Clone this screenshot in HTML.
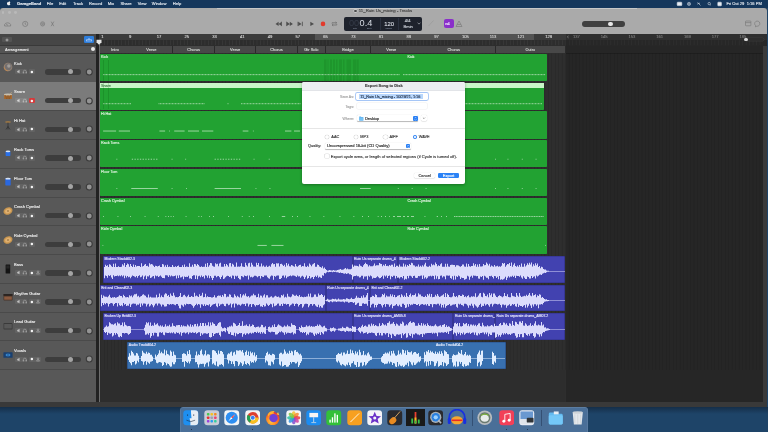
<!DOCTYPE html><html><head><meta charset="utf-8"><style>
*{margin:0;padding:0;box-sizing:border-box}
html,body{width:768px;height:432px;overflow:hidden;background:#1c3f66;font-family:"Liberation Sans", sans-serif}
body{position:relative}
.abs{position:absolute}
.t{position:absolute;white-space:nowrap;line-height:1;-webkit-text-stroke-width:0.12px}
</style></head><body><div id="root" style="position:absolute;left:0;top:0;width:768px;height:432px;overflow:hidden;will-change:transform">

<div class="abs" style="left:0.00px;top:0.00px;width:768.00px;height:432.00px;background:#1e4468;"></div>
<div class="abs" style="left:0.00px;top:0.00px;width:768.00px;height:7.90px;background:#15375c;"></div>
<div class="t" style="left:17.00px;top:2.20px;font-size:4.1px;color:#e6ebf2;font-weight:bold;">GarageBand</div>
<div class="t" style="left:46.80px;top:2.20px;font-size:4.1px;color:#e6ebf2;">File</div>
<div class="t" style="left:59.20px;top:2.20px;font-size:4.1px;color:#e6ebf2;">Edit</div>
<div class="t" style="left:73.00px;top:2.20px;font-size:4.1px;color:#e6ebf2;">Track</div>
<div class="t" style="left:89.00px;top:2.20px;font-size:4.1px;color:#e6ebf2;">Record</div>
<div class="t" style="left:107.70px;top:2.20px;font-size:4.1px;color:#e6ebf2;">Mix</div>
<div class="t" style="left:120.60px;top:2.20px;font-size:4.1px;color:#e6ebf2;">Share</div>
<div class="t" style="left:137.70px;top:2.20px;font-size:4.1px;color:#e6ebf2;">View</div>
<div class="t" style="left:151.80px;top:2.20px;font-size:4.1px;color:#e6ebf2;">Window</div>
<div class="t" style="left:172.80px;top:2.20px;font-size:4.1px;color:#e6ebf2;">Help</div>
<svg class="abs" style="left:7.2px;top:1.3px" width="3.6" height="4.6" viewBox="0 0 10 12.5"><path d="M8.2 6.4c0-1.5 1.2-2.2 1.3-2.3-.7-1-1.8-1.2-2.2-1.2-.9-.1-1.8.5-2.3.5-.5 0-1.2-.5-2-.5C1.9 2.9.9 3.6.4 4.6c-1 1.8-.3 4.4.7 5.8.5.7 1 1.5 1.8 1.5.7 0 1-.5 1.9-.5s1.1.5 1.9.5c.8 0 1.3-.7 1.8-1.4.6-.8.8-1.6.8-1.6s-1.5-.6-1.5-2.5zM6.7 1.9C7.1 1.4 7.4.7 7.3 0c-.6 0-1.4.4-1.8.9-.4.4-.7 1.1-.6 1.8.7.1 1.4-.3 1.8-.8z" fill="#f0f0f0"/></svg>
<div class="t" style="left:726.40px;top:2.20px;font-size:4.1px;color:#e6ebf2;">Fri Oct 29&nbsp;&nbsp;1:16 PM</div>
<svg class="abs" style="left:674px;top:0" width="50" height="8" viewBox="0 0 50 8" fill="none" stroke="#e6ebf2" stroke-width="0.55"><rect x="3.2" y="2.2" width="4.6" height="3.4" rx="0.6" fill="#e6ebf2"/><circle cx="15" cy="3.9" r="1.6"/><circle cx="15" cy="3.9" r="0.5" fill="#e6ebf2"/><path d="M23.5 2.5 L26.5 5.5 M23.2 4.2 Q24.5 3 26 3.2"/><circle cx="35.2" cy="3.6" r="1.2"/><path d="M36.1 4.5 L37 5.4"/><rect x="43.8" y="2.2" width="3.6" height="3.6" rx="0.5" fill="#e6ebf2"/></svg>
<div class="abs" style="left:0.00px;top:7.90px;width:767.00px;height:399.50px;background:#2b2b2b;border-radius:3px 3px 0 0"></div>
<div class="abs" style="left:0.00px;top:7.90px;width:767.00px;height:26.20px;background:#aaaaaa;border-radius:3px 3px 0 0"></div>
<div class="abs" style="left:217.00px;top:7.50px;width:420.00px;height:0.60px;background:rgba(220,220,220,0.6);"></div>
<div class="abs" style="left:0.00px;top:33.80px;width:767.00px;height:0.40px;background:#8c8c8c;"></div>
<div class="abs" style="left:1.70px;top:11.00px;width:2.80px;height:2.80px;background:#b9b9b9;border-radius:50%"></div>
<div class="abs" style="left:7.80px;top:11.00px;width:2.80px;height:2.80px;background:#b9b9b9;border-radius:50%"></div>
<div class="abs" style="left:13.80px;top:11.00px;width:2.80px;height:2.80px;background:#b9b9b9;border-radius:50%"></div>
<svg class="abs" style="left:0;top:18px" width="60" height="12" viewBox="0 0 60 12" fill="none" stroke="#6e6e6e" stroke-width="0.6"><path d="M4.6 8 V6.5 A3.2 2.6 0 0 1 10.6 6.5 V8 Z"/><path d="M6.2 6.3 L8 7.3"/><circle cx="25.2" cy="5.9" r="2.6"/><path d="M25.2 4.4 V6.1 L26.3 6.8"/><circle cx="42.6" cy="5.9" r="2.1"/><circle cx="42.6" cy="5.9" r="0.9"/><path d="M51.2 3.6 L53.8 8.2 M53.8 3.6 L51.2 8.2"/></svg>
<div class="abs" style="left:354.00px;top:9.60px;width:2.60px;height:2.60px;background:#4a4a4a;border-radius:50%;box-shadow:0 0 0 0.4px #e8e8e8"></div>
<div class="t" style="left:358.80px;top:9.40px;font-size:4.3px;color:#404040;">11_Ruin Us_mixing - Tracks</div>
<svg class="abs" style="left:270px;top:18px" width="75" height="12" viewBox="0 0 75 12"><g fill="#4d4d4d"><path d="M5.5 5.9 L8.6 3.7 V8.1Z M8.6 5.9 L11.7 3.7 V8.1Z"/><rect x="11.3" y="3.7" width="0.6" height="4.4"/><path d="M16.7 3.7 L19.8 5.9 L16.7 8.1Z M19.8 3.7 L22.9 5.9 L19.8 8.1Z"/><rect x="16.4" y="3.7" width="0.6" height="4.4"/><path d="M28.2 3.7 L31.6 5.9 L28.2 8.1Z"/><rect x="31.9" y="3.7" width="0.8" height="4.4"/><rect x="27.6" y="3.7" width="0.6" height="4.4"/><path d="M40.3 3.8 L44 5.9 L40.3 8Z"/></g><circle cx="53" cy="5.9" r="2.3" fill="#e23a2c"/><path d="M62 5.5 V4.8 H66.6 M65.6 3.9 L66.6 4.8 L65.6 5.6 M66.8 6.3 V7 H62.2 M63.2 7.9 L62.2 7 L63.2 6.2" stroke="#5a5a5a" stroke-width="0.6" fill="none"/></svg>
<div class="abs" style="left:343.60px;top:16.60px;width:78.80px;height:14.30px;background:#1e222c;border-radius:2px"></div>
<div class="t" style="left:349.00px;top:18.74px;font-size:9.2px;color:#353b48;-webkit-text-stroke-width:0">00</div>
<div class="t" style="left:359.60px;top:18.74px;font-size:9.2px;color:#d8dce4;-webkit-text-stroke-width:0">0.4</div>
<div class="t" style="left:353.20px;top:28.10px;font-size:1.8px;color:#6a7282;">BAR</div>
<div class="t" style="left:367.00px;top:28.10px;font-size:1.8px;color:#6a7282;">BEAT</div>
<div class="t" style="left:384.20px;top:21.62px;font-size:5.9px;color:#d8dce4;">120</div>
<div class="t" style="left:385.60px;top:28.10px;font-size:1.8px;color:#6a7282;">TEMPO</div>
<div class="t" style="left:404.80px;top:18.90px;font-size:4.1px;color:#cfd4dc;">4/4</div>
<div class="t" style="left:403.50px;top:24.90px;font-size:4.1px;color:#cfd4dc;">Bmin</div>
<div class="abs" style="left:380.00px;top:18.00px;width:0.40px;height:11.50px;background:#2c3240;"></div>
<div class="abs" style="left:398.30px;top:18.00px;width:0.40px;height:11.50px;background:#2c3240;"></div>
<svg class="abs" style="left:417px;top:21.5px" width="4" height="3"><path d="M0.6 0.8 L2 2.1 L3.4 0.8" stroke="#c8ccd4" stroke-width="0.6" fill="none"/></svg>
<svg class="abs" style="left:427px;top:18px" width="8" height="10"><path d="M1.5 8 L6.5 2.5" stroke="#9a9a9a" stroke-width="0.8"/></svg>
<div class="abs" style="left:443.80px;top:19.40px;width:9.80px;height:8.40px;background:#8a2fca;border-radius:2px"></div>
<div class="t" style="left:444.90px;top:22.00px;font-size:4.0px;color:#f0e4ff;letter-spacing:-0.2px">&#8734;4</div>
<svg class="abs" style="left:455px;top:20px" width="8" height="8" fill="none" stroke="#707070" stroke-width="0.55"><path d="M4 1 L7 6.5 H1 Z"/><path d="M2.2 4.5 H5.8"/></svg>
<div class="abs" style="left:582.40px;top:21.00px;width:42.20px;height:5.80px;background:#404040;border-radius:2.9px"></div>
<div class="abs" style="left:608.40px;top:21.60px;width:4.60px;height:4.60px;background:#e8e8e8;border-radius:50%"></div>
<svg class="abs" style="left:744px;top:19px" width="20" height="10" fill="none" stroke="#707070" stroke-width="0.55"><rect x="1.5" y="2" width="5.4" height="4.8" rx="0.6"/><path d="M1.5 3.6 H6.9"/><path d="M11.8 6.8 A2.6 2.6 0 1 1 12.8 7.2 L11.4 7.9 Z"/></svg>
<div class="abs" style="left:0.00px;top:34.00px;width:96.40px;height:10.90px;background:#464646;"></div>
<div class="abs" style="left:2.20px;top:36.90px;width:9.50px;height:5.20px;background:#545454;border-radius:1px"></div>
<svg class="abs" style="left:4px;top:37.5px" width="6" height="4"><path d="M3 0.5 V3.5 M1.5 2 H4.5" stroke="#d8d8d8" stroke-width="0.6"/></svg>
<div class="abs" style="left:84.20px;top:36.40px;width:9.40px;height:6.30px;background:#2f7fdc;border-radius:1.2px"></div>
<svg class="abs" style="left:85px;top:37px" width="8" height="5" fill="none" stroke="#e8f0ff" stroke-width="0.45"><path d="M1 4 H7 M1.5 4 V2.6 H6.5 V4 M3.3 2.6 L4 1.2 L4.7 2.6"/></svg>
<div class="abs" style="left:0.00px;top:44.80px;width:96.40px;height:1.00px;background:#393939;"></div>
<div class="abs" style="left:0.00px;top:45.80px;width:96.40px;height:7.00px;background:#545454;"></div>
<div class="t" style="left:5.10px;top:47.60px;font-size:4.1px;color:#ececec;">Arrangement</div>
<div class="abs" style="left:90.90px;top:47.30px;width:4.00px;height:4.00px;background:#e8e8e8;border-radius:50%"></div>
<div class="abs" style="left:0.00px;top:52.80px;width:96.40px;height:0.70px;background:#3c3c3c;"></div>
<div class="abs" style="left:0.00px;top:53.50px;width:96.40px;height:348.70px;background:#585858;"></div>
<div class="abs" style="left:0.00px;top:81.65px;width:96.40px;height:0.60px;background:#4a4a4a;"></div>
<div class="t" style="left:14.00px;top:61.60px;font-size:4.1px;color:#efefef;">Kick</div>
<svg class="abs" style="left:2.8px;top:62.30px" width="10" height="10" viewBox="0 0 10 10"><circle cx="5" cy="5" r="4.3" fill="#9a8470"/><circle cx="5.3" cy="4.7" r="3.4" fill="#747070"/><circle cx="5.8" cy="4" r="1.7" fill="#a09c98"/><path d="M1.2 5.5 A3.8 3.8 0 0 0 4.5 8.8" stroke="#d08840" stroke-width="0.7" fill="none"/></svg>
<div class="abs" style="left:14.70px;top:69.20px;width:12.20px;height:5.20px;background:#626262;border-radius:1px"></div>
<div class="abs" style="left:28.50px;top:69.20px;width:6.80px;height:5.20px;background:#626262;border-radius:1px"></div>
<svg class="abs" style="left:14.7px;top:69.20px" width="13" height="5.2" viewBox="0 0 13 5.2" fill="none" stroke="#c4c4c4" stroke-width="0.4"><path d="M2.4 2.0 H3.1 L4.3 1.1 V4.1 L3.1 3.2 H2.4 Z" fill="#c4c4c4"/><path d="M8.3 3.5 V2.7 A1.5 1.5 0 0 1 11.3 2.7 V3.5 M8.1 3.1 H8.7 V4.2 H8.1Z M10.9 3.1 H11.5 V4.2 H10.9Z"/></svg>
<svg class="abs" style="left:28px;top:68.80px" width="8" height="6"><circle cx="3.85" cy="3" r="1.25" fill="#f4f4f4"/></svg>
<div class="abs" style="left:44.70px;top:69.05px;width:36.60px;height:5.50px;background:#3d3d3d;border-radius:2.75px"></div>
<div class="abs" style="left:68.20px;top:69.25px;width:5.10px;height:5.10px;background:#a4a4a4;border-radius:50%"></div>
<svg class="abs" style="left:85px;top:67.80px" width="8.5" height="8"><circle cx="4.25" cy="4" r="3.55" fill="#3c3c3c"/><circle cx="4.25" cy="4" r="2.45" fill="#939393"/></svg>
<div class="abs" style="left:0.00px;top:82.25px;width:96.40px;height:28.75px;background:#7b7b7b;"></div>
<div class="abs" style="left:0.00px;top:110.40px;width:96.40px;height:0.60px;background:#4a4a4a;"></div>
<div class="t" style="left:14.00px;top:90.35px;font-size:4.1px;color:#efefef;">Snare</div>
<svg class="abs" style="left:2.8px;top:91.05px" width="10" height="10" viewBox="0 0 10 10"><rect x="1" y="3.6" width="8" height="4.4" rx="0.6" fill="#a86a30"/><ellipse cx="5" cy="3.6" rx="4" ry="1" fill="#c8c0b0"/><path d="M2.5 4 L3.5 8 M5 4 V8 M7.5 4 L6.5 8" stroke="#6a4020" stroke-width="0.45"/><path d="M6.8 3 L9 1.2" stroke="#d8b880" stroke-width="0.45"/></svg>
<div class="abs" style="left:14.70px;top:97.95px;width:12.20px;height:5.20px;background:#858585;border-radius:1px"></div>
<div class="abs" style="left:28.50px;top:97.95px;width:6.80px;height:5.20px;background:#858585;border-radius:1px"></div>
<svg class="abs" style="left:14.7px;top:97.95px" width="13" height="5.2" viewBox="0 0 13 5.2" fill="none" stroke="#d8d8d8" stroke-width="0.4"><path d="M2.4 2.0 H3.1 L4.3 1.1 V4.1 L3.1 3.2 H2.4 Z" fill="#d8d8d8"/><path d="M8.3 3.5 V2.7 A1.5 1.5 0 0 1 11.3 2.7 V3.5 M8.1 3.1 H8.7 V4.2 H8.1Z M10.9 3.1 H11.5 V4.2 H10.9Z"/></svg>
<div class="abs" style="left:28.50px;top:97.95px;width:6.80px;height:5.20px;background:#d5393a;border-radius:1px"></div>
<svg class="abs" style="left:28px;top:97.55px" width="8" height="6"><circle cx="3.85" cy="3" r="1.25" fill="#f4f4f4"/></svg>
<div class="abs" style="left:44.70px;top:97.80px;width:36.60px;height:5.50px;background:#3d3d3d;border-radius:2.75px"></div>
<div class="abs" style="left:68.20px;top:98.00px;width:5.10px;height:5.10px;background:#a4a4a4;border-radius:50%"></div>
<svg class="abs" style="left:85px;top:96.55px" width="8.5" height="8"><circle cx="4.25" cy="4" r="3.55" fill="#3c3c3c"/><circle cx="4.25" cy="4" r="2.45" fill="#939393"/></svg>
<div class="abs" style="left:0.00px;top:139.15px;width:96.40px;height:0.60px;background:#4a4a4a;"></div>
<div class="t" style="left:14.00px;top:119.10px;font-size:4.1px;color:#efefef;">Hi Hat</div>
<svg class="abs" style="left:2.8px;top:119.80px" width="10" height="10" viewBox="0 0 10 10"><ellipse cx="5" cy="2" rx="3" ry="0.8" fill="#b08040"/><path d="M5 2.5 V9.5 M3 9.5 L5 6.5 L7 9.5" stroke="#2a2a2a" stroke-width="0.6" fill="none"/></svg>
<div class="abs" style="left:14.70px;top:126.70px;width:12.20px;height:5.20px;background:#626262;border-radius:1px"></div>
<div class="abs" style="left:28.50px;top:126.70px;width:6.80px;height:5.20px;background:#626262;border-radius:1px"></div>
<svg class="abs" style="left:14.7px;top:126.70px" width="13" height="5.2" viewBox="0 0 13 5.2" fill="none" stroke="#c4c4c4" stroke-width="0.4"><path d="M2.4 2.0 H3.1 L4.3 1.1 V4.1 L3.1 3.2 H2.4 Z" fill="#c4c4c4"/><path d="M8.3 3.5 V2.7 A1.5 1.5 0 0 1 11.3 2.7 V3.5 M8.1 3.1 H8.7 V4.2 H8.1Z M10.9 3.1 H11.5 V4.2 H10.9Z"/></svg>
<svg class="abs" style="left:28px;top:126.30px" width="8" height="6"><circle cx="3.85" cy="3" r="1.25" fill="#f4f4f4"/></svg>
<div class="abs" style="left:44.70px;top:126.55px;width:36.60px;height:5.50px;background:#3d3d3d;border-radius:2.75px"></div>
<div class="abs" style="left:68.20px;top:126.75px;width:5.10px;height:5.10px;background:#a4a4a4;border-radius:50%"></div>
<svg class="abs" style="left:85px;top:125.30px" width="8.5" height="8"><circle cx="4.25" cy="4" r="3.55" fill="#3c3c3c"/><circle cx="4.25" cy="4" r="2.45" fill="#939393"/></svg>
<div class="abs" style="left:0.00px;top:167.90px;width:96.40px;height:0.60px;background:#4a4a4a;"></div>
<div class="t" style="left:14.00px;top:147.85px;font-size:4.1px;color:#efefef;">Rack Toms</div>
<svg class="abs" style="left:2.8px;top:148.55px" width="10" height="10" viewBox="0 0 10 10"><rect x="2.6" y="2.3" width="4.8" height="4.6" rx="0.6" fill="#2a70e8"/><ellipse cx="5" cy="2.4" rx="2.4" ry="0.8" fill="#d8e4f4"/></svg>
<div class="abs" style="left:14.70px;top:155.45px;width:12.20px;height:5.20px;background:#626262;border-radius:1px"></div>
<div class="abs" style="left:28.50px;top:155.45px;width:6.80px;height:5.20px;background:#626262;border-radius:1px"></div>
<svg class="abs" style="left:14.7px;top:155.45px" width="13" height="5.2" viewBox="0 0 13 5.2" fill="none" stroke="#c4c4c4" stroke-width="0.4"><path d="M2.4 2.0 H3.1 L4.3 1.1 V4.1 L3.1 3.2 H2.4 Z" fill="#c4c4c4"/><path d="M8.3 3.5 V2.7 A1.5 1.5 0 0 1 11.3 2.7 V3.5 M8.1 3.1 H8.7 V4.2 H8.1Z M10.9 3.1 H11.5 V4.2 H10.9Z"/></svg>
<svg class="abs" style="left:28px;top:155.05px" width="8" height="6"><circle cx="3.85" cy="3" r="1.25" fill="#f4f4f4"/></svg>
<div class="abs" style="left:44.70px;top:155.30px;width:36.60px;height:5.50px;background:#3d3d3d;border-radius:2.75px"></div>
<div class="abs" style="left:68.20px;top:155.50px;width:5.10px;height:5.10px;background:#a4a4a4;border-radius:50%"></div>
<svg class="abs" style="left:85px;top:154.05px" width="8.5" height="8"><circle cx="4.25" cy="4" r="3.55" fill="#3c3c3c"/><circle cx="4.25" cy="4" r="2.45" fill="#939393"/></svg>
<div class="abs" style="left:0.00px;top:196.65px;width:96.40px;height:0.60px;background:#4a4a4a;"></div>
<div class="t" style="left:14.00px;top:176.60px;font-size:4.1px;color:#efefef;">Floor Tom</div>
<svg class="abs" style="left:2.8px;top:177.30px" width="10" height="10" viewBox="0 0 10 10"><rect x="2.3" y="1.6" width="5.4" height="6.8" rx="0.6" fill="#2a68e0"/><ellipse cx="5" cy="1.7" rx="2.7" ry="0.9" fill="#d8e4f4"/></svg>
<div class="abs" style="left:14.70px;top:184.20px;width:12.20px;height:5.20px;background:#626262;border-radius:1px"></div>
<div class="abs" style="left:28.50px;top:184.20px;width:6.80px;height:5.20px;background:#626262;border-radius:1px"></div>
<svg class="abs" style="left:14.7px;top:184.20px" width="13" height="5.2" viewBox="0 0 13 5.2" fill="none" stroke="#c4c4c4" stroke-width="0.4"><path d="M2.4 2.0 H3.1 L4.3 1.1 V4.1 L3.1 3.2 H2.4 Z" fill="#c4c4c4"/><path d="M8.3 3.5 V2.7 A1.5 1.5 0 0 1 11.3 2.7 V3.5 M8.1 3.1 H8.7 V4.2 H8.1Z M10.9 3.1 H11.5 V4.2 H10.9Z"/></svg>
<svg class="abs" style="left:28px;top:183.80px" width="8" height="6"><circle cx="3.85" cy="3" r="1.25" fill="#f4f4f4"/></svg>
<div class="abs" style="left:44.70px;top:184.05px;width:36.60px;height:5.50px;background:#3d3d3d;border-radius:2.75px"></div>
<div class="abs" style="left:68.20px;top:184.25px;width:5.10px;height:5.10px;background:#a4a4a4;border-radius:50%"></div>
<svg class="abs" style="left:85px;top:182.80px" width="8.5" height="8"><circle cx="4.25" cy="4" r="3.55" fill="#3c3c3c"/><circle cx="4.25" cy="4" r="2.45" fill="#939393"/></svg>
<div class="abs" style="left:0.00px;top:225.40px;width:96.40px;height:0.60px;background:#4a4a4a;"></div>
<div class="t" style="left:14.00px;top:205.35px;font-size:4.1px;color:#efefef;">Crash Cymbal</div>
<svg class="abs" style="left:2.8px;top:206.05px" width="10" height="10" viewBox="0 0 10 10"><ellipse cx="5" cy="5" rx="4.6" ry="3.6" fill="#c89650" transform="rotate(-25 5 5)"/><ellipse cx="5" cy="5" rx="3" ry="2.2" fill="#e0b070" transform="rotate(-25 5 5)"/><circle cx="5" cy="5" r="0.8" fill="#806030"/></svg>
<div class="abs" style="left:14.70px;top:212.95px;width:12.20px;height:5.20px;background:#626262;border-radius:1px"></div>
<div class="abs" style="left:28.50px;top:212.95px;width:6.80px;height:5.20px;background:#626262;border-radius:1px"></div>
<svg class="abs" style="left:14.7px;top:212.95px" width="13" height="5.2" viewBox="0 0 13 5.2" fill="none" stroke="#c4c4c4" stroke-width="0.4"><path d="M2.4 2.0 H3.1 L4.3 1.1 V4.1 L3.1 3.2 H2.4 Z" fill="#c4c4c4"/><path d="M8.3 3.5 V2.7 A1.5 1.5 0 0 1 11.3 2.7 V3.5 M8.1 3.1 H8.7 V4.2 H8.1Z M10.9 3.1 H11.5 V4.2 H10.9Z"/></svg>
<svg class="abs" style="left:28px;top:212.55px" width="8" height="6"><circle cx="3.85" cy="3" r="1.25" fill="#f4f4f4"/></svg>
<div class="abs" style="left:44.70px;top:212.80px;width:36.60px;height:5.50px;background:#3d3d3d;border-radius:2.75px"></div>
<div class="abs" style="left:68.20px;top:213.00px;width:5.10px;height:5.10px;background:#a4a4a4;border-radius:50%"></div>
<svg class="abs" style="left:85px;top:211.55px" width="8.5" height="8"><circle cx="4.25" cy="4" r="3.55" fill="#3c3c3c"/><circle cx="4.25" cy="4" r="2.45" fill="#939393"/></svg>
<div class="abs" style="left:0.00px;top:254.15px;width:96.40px;height:0.60px;background:#4a4a4a;"></div>
<div class="t" style="left:14.00px;top:234.10px;font-size:4.1px;color:#efefef;">Ride Cymbal</div>
<svg class="abs" style="left:2.8px;top:234.80px" width="10" height="10" viewBox="0 0 10 10"><ellipse cx="5" cy="5" rx="4.6" ry="3.6" fill="#c89650" transform="rotate(-25 5 5)"/><ellipse cx="5" cy="5" rx="3" ry="2.2" fill="#e0b070" transform="rotate(-25 5 5)"/><circle cx="5" cy="5" r="0.8" fill="#806030"/></svg>
<div class="abs" style="left:14.70px;top:241.70px;width:12.20px;height:5.20px;background:#626262;border-radius:1px"></div>
<div class="abs" style="left:28.50px;top:241.70px;width:6.80px;height:5.20px;background:#626262;border-radius:1px"></div>
<svg class="abs" style="left:14.7px;top:241.70px" width="13" height="5.2" viewBox="0 0 13 5.2" fill="none" stroke="#c4c4c4" stroke-width="0.4"><path d="M2.4 2.0 H3.1 L4.3 1.1 V4.1 L3.1 3.2 H2.4 Z" fill="#c4c4c4"/><path d="M8.3 3.5 V2.7 A1.5 1.5 0 0 1 11.3 2.7 V3.5 M8.1 3.1 H8.7 V4.2 H8.1Z M10.9 3.1 H11.5 V4.2 H10.9Z"/></svg>
<svg class="abs" style="left:28px;top:241.30px" width="8" height="6"><circle cx="3.85" cy="3" r="1.25" fill="#f4f4f4"/></svg>
<div class="abs" style="left:44.70px;top:241.55px;width:36.60px;height:5.50px;background:#3d3d3d;border-radius:2.75px"></div>
<div class="abs" style="left:68.20px;top:241.75px;width:5.10px;height:5.10px;background:#a4a4a4;border-radius:50%"></div>
<svg class="abs" style="left:85px;top:240.30px" width="8.5" height="8"><circle cx="4.25" cy="4" r="3.55" fill="#3c3c3c"/><circle cx="4.25" cy="4" r="2.45" fill="#939393"/></svg>
<div class="abs" style="left:0.00px;top:282.90px;width:96.40px;height:0.60px;background:#4a4a4a;"></div>
<div class="t" style="left:14.00px;top:262.85px;font-size:4.1px;color:#efefef;">Bass</div>
<svg class="abs" style="left:2.8px;top:263.55px" width="10" height="10" viewBox="0 0 10 10"><rect x="2.6" y="0.5" width="4.6" height="9" rx="0.6" fill="#141414"/><rect x="3.2" y="1.5" width="3.4" height="3" fill="#262626"/></svg>
<div class="abs" style="left:14.70px;top:270.45px;width:12.20px;height:5.20px;background:#626262;border-radius:1px"></div>
<div class="abs" style="left:28.50px;top:270.45px;width:12.40px;height:5.20px;background:#626262;border-radius:1px"></div>
<svg class="abs" style="left:14.7px;top:270.45px" width="13" height="5.2" viewBox="0 0 13 5.2" fill="none" stroke="#c4c4c4" stroke-width="0.4"><path d="M2.4 2.0 H3.1 L4.3 1.1 V4.1 L3.1 3.2 H2.4 Z" fill="#c4c4c4"/><path d="M8.3 3.5 V2.7 A1.5 1.5 0 0 1 11.3 2.7 V3.5 M8.1 3.1 H8.7 V4.2 H8.1Z M10.9 3.1 H11.5 V4.2 H10.9Z"/></svg>
<svg class="abs" style="left:28px;top:270.05px" width="8" height="6"><circle cx="3.85" cy="3" r="1.25" fill="#f4f4f4"/></svg>
<svg class="abs" style="left:35.2px;top:270.45px" width="6" height="5.2" fill="none" stroke="#c4c4c4" stroke-width="0.4"><circle cx="3" cy="1.7" r="0.8"/><path d="M1.5 4.1 A1.5 1.3 0 0 1 4.5 4.1Z"/></svg>
<div class="abs" style="left:44.70px;top:270.30px;width:36.60px;height:5.50px;background:#3d3d3d;border-radius:2.75px"></div>
<div class="abs" style="left:68.20px;top:270.50px;width:5.10px;height:5.10px;background:#a4a4a4;border-radius:50%"></div>
<svg class="abs" style="left:85px;top:269.05px" width="8.5" height="8"><circle cx="4.25" cy="4" r="3.55" fill="#3c3c3c"/><circle cx="4.25" cy="4" r="2.45" fill="#939393"/></svg>
<div class="abs" style="left:0.00px;top:311.65px;width:96.40px;height:0.60px;background:#4a4a4a;"></div>
<div class="t" style="left:14.00px;top:291.60px;font-size:4.1px;color:#efefef;">Rhythm Guitar</div>
<svg class="abs" style="left:2.8px;top:292.30px" width="10" height="10" viewBox="0 0 10 10"><rect x="0.5" y="2" width="9" height="6.5" rx="0.8" fill="#4a3428"/><rect x="0.5" y="2" width="9" height="1.8" fill="#2a2422"/><rect x="1.2" y="4.5" width="7.6" height="3.2" fill="#8a5a40"/></svg>
<div class="abs" style="left:14.70px;top:299.20px;width:12.20px;height:5.20px;background:#626262;border-radius:1px"></div>
<div class="abs" style="left:28.50px;top:299.20px;width:12.40px;height:5.20px;background:#626262;border-radius:1px"></div>
<svg class="abs" style="left:14.7px;top:299.20px" width="13" height="5.2" viewBox="0 0 13 5.2" fill="none" stroke="#c4c4c4" stroke-width="0.4"><path d="M2.4 2.0 H3.1 L4.3 1.1 V4.1 L3.1 3.2 H2.4 Z" fill="#c4c4c4"/><path d="M8.3 3.5 V2.7 A1.5 1.5 0 0 1 11.3 2.7 V3.5 M8.1 3.1 H8.7 V4.2 H8.1Z M10.9 3.1 H11.5 V4.2 H10.9Z"/></svg>
<svg class="abs" style="left:28px;top:298.80px" width="8" height="6"><circle cx="3.85" cy="3" r="1.25" fill="#f4f4f4"/></svg>
<svg class="abs" style="left:35.2px;top:299.20px" width="6" height="5.2" fill="none" stroke="#c4c4c4" stroke-width="0.4"><circle cx="3" cy="1.7" r="0.8"/><path d="M1.5 4.1 A1.5 1.3 0 0 1 4.5 4.1Z"/></svg>
<div class="abs" style="left:44.70px;top:299.05px;width:36.60px;height:5.50px;background:#3d3d3d;border-radius:2.75px"></div>
<div class="abs" style="left:68.20px;top:299.25px;width:5.10px;height:5.10px;background:#a4a4a4;border-radius:50%"></div>
<svg class="abs" style="left:85px;top:297.80px" width="8.5" height="8"><circle cx="4.25" cy="4" r="3.55" fill="#3c3c3c"/><circle cx="4.25" cy="4" r="2.45" fill="#939393"/></svg>
<div class="abs" style="left:0.00px;top:340.40px;width:96.40px;height:0.60px;background:#4a4a4a;"></div>
<div class="t" style="left:14.00px;top:320.35px;font-size:4.1px;color:#efefef;">Lead Guitar</div>
<svg class="abs" style="left:2.8px;top:321.05px" width="10" height="10" viewBox="0 0 10 10"><rect x="0.5" y="2" width="9" height="6.5" rx="0.8" fill="#3a3a3a"/><rect x="1.2" y="3" width="7.6" height="4.5" fill="#585858"/></svg>
<div class="abs" style="left:14.70px;top:327.95px;width:12.20px;height:5.20px;background:#626262;border-radius:1px"></div>
<div class="abs" style="left:28.50px;top:327.95px;width:12.40px;height:5.20px;background:#626262;border-radius:1px"></div>
<svg class="abs" style="left:14.7px;top:327.95px" width="13" height="5.2" viewBox="0 0 13 5.2" fill="none" stroke="#c4c4c4" stroke-width="0.4"><path d="M2.4 2.0 H3.1 L4.3 1.1 V4.1 L3.1 3.2 H2.4 Z" fill="#c4c4c4"/><path d="M8.3 3.5 V2.7 A1.5 1.5 0 0 1 11.3 2.7 V3.5 M8.1 3.1 H8.7 V4.2 H8.1Z M10.9 3.1 H11.5 V4.2 H10.9Z"/></svg>
<svg class="abs" style="left:28px;top:327.55px" width="8" height="6"><circle cx="3.85" cy="3" r="1.25" fill="#f4f4f4"/></svg>
<svg class="abs" style="left:35.2px;top:327.95px" width="6" height="5.2" fill="none" stroke="#c4c4c4" stroke-width="0.4"><circle cx="3" cy="1.7" r="0.8"/><path d="M1.5 4.1 A1.5 1.3 0 0 1 4.5 4.1Z"/></svg>
<div class="abs" style="left:44.70px;top:327.80px;width:36.60px;height:5.50px;background:#3d3d3d;border-radius:2.75px"></div>
<div class="abs" style="left:68.20px;top:328.00px;width:5.10px;height:5.10px;background:#a4a4a4;border-radius:50%"></div>
<svg class="abs" style="left:85px;top:326.55px" width="8.5" height="8"><circle cx="4.25" cy="4" r="3.55" fill="#3c3c3c"/><circle cx="4.25" cy="4" r="2.45" fill="#939393"/></svg>
<div class="abs" style="left:0.00px;top:369.15px;width:96.40px;height:0.60px;background:#4a4a4a;"></div>
<div class="t" style="left:14.00px;top:349.10px;font-size:4.1px;color:#efefef;">Vocals</div>
<svg class="abs" style="left:2.8px;top:349.80px" width="10" height="10" viewBox="0 0 10 10"><rect x="0.4" y="2.2" width="9.2" height="5.6" rx="0.6" fill="#1a4070"/><path d="M2.5 5 H7.5 M3.5 3.8 V6.2 M5 3.2 V6.8 M6.5 3.8 V6.2" stroke="#40a0f0" stroke-width="0.6"/></svg>
<div class="abs" style="left:14.70px;top:356.70px;width:12.20px;height:5.20px;background:#626262;border-radius:1px"></div>
<div class="abs" style="left:28.50px;top:356.70px;width:12.40px;height:5.20px;background:#626262;border-radius:1px"></div>
<svg class="abs" style="left:14.7px;top:356.70px" width="13" height="5.2" viewBox="0 0 13 5.2" fill="none" stroke="#c4c4c4" stroke-width="0.4"><path d="M2.4 2.0 H3.1 L4.3 1.1 V4.1 L3.1 3.2 H2.4 Z" fill="#c4c4c4"/><path d="M8.3 3.5 V2.7 A1.5 1.5 0 0 1 11.3 2.7 V3.5 M8.1 3.1 H8.7 V4.2 H8.1Z M10.9 3.1 H11.5 V4.2 H10.9Z"/></svg>
<svg class="abs" style="left:28px;top:356.30px" width="8" height="6"><circle cx="3.85" cy="3" r="1.25" fill="#f4f4f4"/></svg>
<svg class="abs" style="left:35.2px;top:356.70px" width="6" height="5.2" fill="none" stroke="#c4c4c4" stroke-width="0.4"><circle cx="3" cy="1.7" r="0.8"/><path d="M1.5 4.1 A1.5 1.3 0 0 1 4.5 4.1Z"/></svg>
<div class="abs" style="left:44.70px;top:356.55px;width:36.60px;height:5.50px;background:#3d3d3d;border-radius:2.75px"></div>
<div class="abs" style="left:68.20px;top:356.75px;width:5.10px;height:5.10px;background:#a4a4a4;border-radius:50%"></div>
<svg class="abs" style="left:85px;top:355.30px" width="8.5" height="8"><circle cx="4.25" cy="4" r="3.55" fill="#3c3c3c"/><circle cx="4.25" cy="4" r="2.45" fill="#939393"/></svg>
<div class="abs" style="left:96.40px;top:34.00px;width:2.20px;height:368.20px;background:#222222;"></div>
<div class="abs" style="left:99.30px;top:34.00px;width:667.70px;height:368.20px;background:#2e2e2e;"></div>
<div class="abs" style="left:99.30px;top:34.00px;width:666.70px;height:5.60px;background:#3b3b3b;"></div>
<div class="abs" style="left:565.50px;top:34.00px;width:201.00px;height:5.60px;background:#2f2f2f;"></div>
<div class="abs" style="left:315.00px;top:34.00px;width:218.50px;height:5.60px;background:#535353;"></div>
<div class="abs" style="left:99.30px;top:39.60px;width:666.70px;height:6.10px;background:#2d2d2d;"></div>
<div class="abs" style="left:565.50px;top:39.60px;width:201.00px;height:6.10px;background:#272727;"></div>
<svg class="abs" style="left:0;top:0" width="768" height="432"><rect x="100.60" y="40.2" width="0.6" height="5" fill="#3e3e3e"/><rect x="104.07" y="40.2" width="0.6" height="5" fill="#3e3e3e"/><rect x="107.54" y="40.2" width="0.6" height="5" fill="#3e3e3e"/><rect x="111.01" y="40.2" width="0.6" height="5" fill="#3e3e3e"/><rect x="114.48" y="40.2" width="0.6" height="5" fill="#3e3e3e"/><rect x="117.94" y="40.2" width="0.6" height="5" fill="#3e3e3e"/><rect x="121.41" y="40.2" width="0.6" height="5" fill="#3e3e3e"/><rect x="124.88" y="40.2" width="0.6" height="5" fill="#3e3e3e"/><rect x="128.35" y="40.2" width="0.6" height="5" fill="#3e3e3e"/><rect x="131.82" y="40.2" width="0.6" height="5" fill="#3e3e3e"/><rect x="135.29" y="40.2" width="0.6" height="5" fill="#3e3e3e"/><rect x="138.76" y="40.2" width="0.6" height="5" fill="#3e3e3e"/><rect x="142.23" y="40.2" width="0.6" height="5" fill="#3e3e3e"/><rect x="145.70" y="40.2" width="0.6" height="5" fill="#3e3e3e"/><rect x="149.17" y="40.2" width="0.6" height="5" fill="#3e3e3e"/><rect x="152.63" y="40.2" width="0.6" height="5" fill="#3e3e3e"/><rect x="156.10" y="40.2" width="0.6" height="5" fill="#3e3e3e"/><rect x="159.57" y="40.2" width="0.6" height="5" fill="#3e3e3e"/><rect x="163.04" y="40.2" width="0.6" height="5" fill="#3e3e3e"/><rect x="166.51" y="40.2" width="0.6" height="5" fill="#3e3e3e"/><rect x="169.98" y="40.2" width="0.6" height="5" fill="#3e3e3e"/><rect x="173.45" y="40.2" width="0.6" height="5" fill="#3e3e3e"/><rect x="176.92" y="40.2" width="0.6" height="5" fill="#3e3e3e"/><rect x="180.39" y="40.2" width="0.6" height="5" fill="#3e3e3e"/><rect x="183.86" y="40.2" width="0.6" height="5" fill="#3e3e3e"/><rect x="187.32" y="40.2" width="0.6" height="5" fill="#3e3e3e"/><rect x="190.79" y="40.2" width="0.6" height="5" fill="#3e3e3e"/><rect x="194.26" y="40.2" width="0.6" height="5" fill="#3e3e3e"/><rect x="197.73" y="40.2" width="0.6" height="5" fill="#3e3e3e"/><rect x="201.20" y="40.2" width="0.6" height="5" fill="#3e3e3e"/><rect x="204.67" y="40.2" width="0.6" height="5" fill="#3e3e3e"/><rect x="208.14" y="40.2" width="0.6" height="5" fill="#3e3e3e"/><rect x="211.61" y="40.2" width="0.6" height="5" fill="#3e3e3e"/><rect x="215.08" y="40.2" width="0.6" height="5" fill="#3e3e3e"/><rect x="218.55" y="40.2" width="0.6" height="5" fill="#3e3e3e"/><rect x="222.01" y="40.2" width="0.6" height="5" fill="#3e3e3e"/><rect x="225.48" y="40.2" width="0.6" height="5" fill="#3e3e3e"/><rect x="228.95" y="40.2" width="0.6" height="5" fill="#3e3e3e"/><rect x="232.42" y="40.2" width="0.6" height="5" fill="#3e3e3e"/><rect x="235.89" y="40.2" width="0.6" height="5" fill="#3e3e3e"/><rect x="239.36" y="40.2" width="0.6" height="5" fill="#3e3e3e"/><rect x="242.83" y="40.2" width="0.6" height="5" fill="#3e3e3e"/><rect x="246.30" y="40.2" width="0.6" height="5" fill="#3e3e3e"/><rect x="249.77" y="40.2" width="0.6" height="5" fill="#3e3e3e"/><rect x="253.24" y="40.2" width="0.6" height="5" fill="#3e3e3e"/><rect x="256.70" y="40.2" width="0.6" height="5" fill="#3e3e3e"/><rect x="260.17" y="40.2" width="0.6" height="5" fill="#3e3e3e"/><rect x="263.64" y="40.2" width="0.6" height="5" fill="#3e3e3e"/><rect x="267.11" y="40.2" width="0.6" height="5" fill="#3e3e3e"/><rect x="270.58" y="40.2" width="0.6" height="5" fill="#3e3e3e"/><rect x="274.05" y="40.2" width="0.6" height="5" fill="#3e3e3e"/><rect x="277.52" y="40.2" width="0.6" height="5" fill="#3e3e3e"/><rect x="280.99" y="40.2" width="0.6" height="5" fill="#3e3e3e"/><rect x="284.46" y="40.2" width="0.6" height="5" fill="#3e3e3e"/><rect x="287.93" y="40.2" width="0.6" height="5" fill="#3e3e3e"/><rect x="291.39" y="40.2" width="0.6" height="5" fill="#3e3e3e"/><rect x="294.86" y="40.2" width="0.6" height="5" fill="#3e3e3e"/><rect x="298.33" y="40.2" width="0.6" height="5" fill="#3e3e3e"/><rect x="301.80" y="40.2" width="0.6" height="5" fill="#3e3e3e"/><rect x="305.27" y="40.2" width="0.6" height="5" fill="#3e3e3e"/><rect x="308.74" y="40.2" width="0.6" height="5" fill="#3e3e3e"/><rect x="312.21" y="40.2" width="0.6" height="5" fill="#3e3e3e"/><rect x="315.68" y="40.2" width="0.6" height="5" fill="#3e3e3e"/><rect x="319.15" y="40.2" width="0.6" height="5" fill="#3e3e3e"/><rect x="322.62" y="40.2" width="0.6" height="5" fill="#3e3e3e"/><rect x="326.08" y="40.2" width="0.6" height="5" fill="#3e3e3e"/><rect x="329.55" y="40.2" width="0.6" height="5" fill="#3e3e3e"/><rect x="333.02" y="40.2" width="0.6" height="5" fill="#3e3e3e"/><rect x="336.49" y="40.2" width="0.6" height="5" fill="#3e3e3e"/><rect x="339.96" y="40.2" width="0.6" height="5" fill="#3e3e3e"/><rect x="343.43" y="40.2" width="0.6" height="5" fill="#3e3e3e"/><rect x="346.90" y="40.2" width="0.6" height="5" fill="#3e3e3e"/><rect x="350.37" y="40.2" width="0.6" height="5" fill="#3e3e3e"/><rect x="353.84" y="40.2" width="0.6" height="5" fill="#3e3e3e"/><rect x="357.31" y="40.2" width="0.6" height="5" fill="#3e3e3e"/><rect x="360.77" y="40.2" width="0.6" height="5" fill="#3e3e3e"/><rect x="364.24" y="40.2" width="0.6" height="5" fill="#3e3e3e"/><rect x="367.71" y="40.2" width="0.6" height="5" fill="#3e3e3e"/><rect x="371.18" y="40.2" width="0.6" height="5" fill="#3e3e3e"/><rect x="374.65" y="40.2" width="0.6" height="5" fill="#3e3e3e"/><rect x="378.12" y="40.2" width="0.6" height="5" fill="#3e3e3e"/><rect x="381.59" y="40.2" width="0.6" height="5" fill="#3e3e3e"/><rect x="385.06" y="40.2" width="0.6" height="5" fill="#3e3e3e"/><rect x="388.53" y="40.2" width="0.6" height="5" fill="#3e3e3e"/><rect x="392.00" y="40.2" width="0.6" height="5" fill="#3e3e3e"/><rect x="395.47" y="40.2" width="0.6" height="5" fill="#3e3e3e"/><rect x="398.93" y="40.2" width="0.6" height="5" fill="#3e3e3e"/><rect x="402.40" y="40.2" width="0.6" height="5" fill="#3e3e3e"/><rect x="405.87" y="40.2" width="0.6" height="5" fill="#3e3e3e"/><rect x="409.34" y="40.2" width="0.6" height="5" fill="#3e3e3e"/><rect x="412.81" y="40.2" width="0.6" height="5" fill="#3e3e3e"/><rect x="416.28" y="40.2" width="0.6" height="5" fill="#3e3e3e"/><rect x="419.75" y="40.2" width="0.6" height="5" fill="#3e3e3e"/><rect x="423.22" y="40.2" width="0.6" height="5" fill="#3e3e3e"/><rect x="426.69" y="40.2" width="0.6" height="5" fill="#3e3e3e"/><rect x="430.15" y="40.2" width="0.6" height="5" fill="#3e3e3e"/><rect x="433.62" y="40.2" width="0.6" height="5" fill="#3e3e3e"/><rect x="437.09" y="40.2" width="0.6" height="5" fill="#3e3e3e"/><rect x="440.56" y="40.2" width="0.6" height="5" fill="#3e3e3e"/><rect x="444.03" y="40.2" width="0.6" height="5" fill="#3e3e3e"/><rect x="447.50" y="40.2" width="0.6" height="5" fill="#3e3e3e"/><rect x="450.97" y="40.2" width="0.6" height="5" fill="#3e3e3e"/><rect x="454.44" y="40.2" width="0.6" height="5" fill="#3e3e3e"/><rect x="457.91" y="40.2" width="0.6" height="5" fill="#3e3e3e"/><rect x="461.38" y="40.2" width="0.6" height="5" fill="#3e3e3e"/><rect x="464.85" y="40.2" width="0.6" height="5" fill="#3e3e3e"/><rect x="468.31" y="40.2" width="0.6" height="5" fill="#3e3e3e"/><rect x="471.78" y="40.2" width="0.6" height="5" fill="#3e3e3e"/><rect x="475.25" y="40.2" width="0.6" height="5" fill="#3e3e3e"/><rect x="478.72" y="40.2" width="0.6" height="5" fill="#3e3e3e"/><rect x="482.19" y="40.2" width="0.6" height="5" fill="#3e3e3e"/><rect x="485.66" y="40.2" width="0.6" height="5" fill="#3e3e3e"/><rect x="489.13" y="40.2" width="0.6" height="5" fill="#3e3e3e"/><rect x="492.60" y="40.2" width="0.6" height="5" fill="#3e3e3e"/><rect x="496.07" y="40.2" width="0.6" height="5" fill="#3e3e3e"/><rect x="499.53" y="40.2" width="0.6" height="5" fill="#3e3e3e"/><rect x="503.00" y="40.2" width="0.6" height="5" fill="#3e3e3e"/><rect x="506.47" y="40.2" width="0.6" height="5" fill="#3e3e3e"/><rect x="509.94" y="40.2" width="0.6" height="5" fill="#3e3e3e"/><rect x="513.41" y="40.2" width="0.6" height="5" fill="#3e3e3e"/><rect x="516.88" y="40.2" width="0.6" height="5" fill="#3e3e3e"/><rect x="520.35" y="40.2" width="0.6" height="5" fill="#3e3e3e"/><rect x="523.82" y="40.2" width="0.6" height="5" fill="#3e3e3e"/><rect x="527.29" y="40.2" width="0.6" height="5" fill="#3e3e3e"/><rect x="530.76" y="40.2" width="0.6" height="5" fill="#3e3e3e"/><rect x="534.23" y="40.2" width="0.6" height="5" fill="#3e3e3e"/><rect x="537.69" y="40.2" width="0.6" height="5" fill="#3e3e3e"/><rect x="541.16" y="40.2" width="0.6" height="5" fill="#3e3e3e"/><rect x="544.63" y="40.2" width="0.6" height="5" fill="#3e3e3e"/><rect x="548.10" y="40.2" width="0.6" height="5" fill="#3e3e3e"/><rect x="551.57" y="40.2" width="0.6" height="5" fill="#3e3e3e"/><rect x="555.04" y="40.2" width="0.6" height="5" fill="#3e3e3e"/><rect x="558.51" y="40.2" width="0.6" height="5" fill="#3e3e3e"/><rect x="561.98" y="40.2" width="0.6" height="5" fill="#3e3e3e"/><rect x="565.45" y="40.2" width="0.6" height="5" fill="#323232"/><rect x="568.91" y="40.2" width="0.6" height="5" fill="#323232"/><rect x="572.38" y="40.2" width="0.6" height="5" fill="#323232"/><rect x="575.85" y="40.2" width="0.6" height="5" fill="#323232"/><rect x="579.32" y="40.2" width="0.6" height="5" fill="#323232"/><rect x="582.79" y="40.2" width="0.6" height="5" fill="#323232"/><rect x="586.26" y="40.2" width="0.6" height="5" fill="#323232"/><rect x="589.73" y="40.2" width="0.6" height="5" fill="#323232"/><rect x="593.20" y="40.2" width="0.6" height="5" fill="#323232"/><rect x="596.67" y="40.2" width="0.6" height="5" fill="#323232"/><rect x="600.14" y="40.2" width="0.6" height="5" fill="#323232"/><rect x="603.61" y="40.2" width="0.6" height="5" fill="#323232"/><rect x="607.07" y="40.2" width="0.6" height="5" fill="#323232"/><rect x="610.54" y="40.2" width="0.6" height="5" fill="#323232"/><rect x="614.01" y="40.2" width="0.6" height="5" fill="#323232"/><rect x="617.48" y="40.2" width="0.6" height="5" fill="#323232"/><rect x="620.95" y="40.2" width="0.6" height="5" fill="#323232"/><rect x="624.42" y="40.2" width="0.6" height="5" fill="#323232"/><rect x="627.89" y="40.2" width="0.6" height="5" fill="#323232"/><rect x="631.36" y="40.2" width="0.6" height="5" fill="#323232"/><rect x="634.83" y="40.2" width="0.6" height="5" fill="#323232"/><rect x="638.29" y="40.2" width="0.6" height="5" fill="#323232"/><rect x="641.76" y="40.2" width="0.6" height="5" fill="#323232"/><rect x="645.23" y="40.2" width="0.6" height="5" fill="#323232"/><rect x="648.70" y="40.2" width="0.6" height="5" fill="#323232"/><rect x="652.17" y="40.2" width="0.6" height="5" fill="#323232"/><rect x="655.64" y="40.2" width="0.6" height="5" fill="#323232"/><rect x="659.11" y="40.2" width="0.6" height="5" fill="#323232"/><rect x="662.58" y="40.2" width="0.6" height="5" fill="#323232"/><rect x="666.05" y="40.2" width="0.6" height="5" fill="#323232"/><rect x="669.52" y="40.2" width="0.6" height="5" fill="#323232"/><rect x="672.99" y="40.2" width="0.6" height="5" fill="#323232"/><rect x="676.45" y="40.2" width="0.6" height="5" fill="#323232"/><rect x="679.92" y="40.2" width="0.6" height="5" fill="#323232"/><rect x="683.39" y="40.2" width="0.6" height="5" fill="#323232"/><rect x="686.86" y="40.2" width="0.6" height="5" fill="#323232"/><rect x="690.33" y="40.2" width="0.6" height="5" fill="#323232"/><rect x="693.80" y="40.2" width="0.6" height="5" fill="#323232"/><rect x="697.27" y="40.2" width="0.6" height="5" fill="#323232"/><rect x="700.74" y="40.2" width="0.6" height="5" fill="#323232"/><rect x="704.21" y="40.2" width="0.6" height="5" fill="#323232"/><rect x="707.67" y="40.2" width="0.6" height="5" fill="#323232"/><rect x="711.14" y="40.2" width="0.6" height="5" fill="#323232"/><rect x="714.61" y="40.2" width="0.6" height="5" fill="#323232"/><rect x="718.08" y="40.2" width="0.6" height="5" fill="#323232"/><rect x="721.55" y="40.2" width="0.6" height="5" fill="#323232"/><rect x="725.02" y="40.2" width="0.6" height="5" fill="#323232"/><rect x="728.49" y="40.2" width="0.6" height="5" fill="#323232"/><rect x="731.96" y="40.2" width="0.6" height="5" fill="#323232"/><rect x="735.43" y="40.2" width="0.6" height="5" fill="#323232"/><rect x="738.90" y="40.2" width="0.6" height="5" fill="#323232"/><rect x="742.37" y="40.2" width="0.6" height="5" fill="#323232"/><rect x="745.83" y="40.2" width="0.6" height="5" fill="#323232"/><rect x="749.30" y="40.2" width="0.6" height="5" fill="#323232"/><rect x="752.77" y="40.2" width="0.6" height="5" fill="#323232"/><rect x="756.24" y="40.2" width="0.6" height="5" fill="#323232"/><rect x="759.71" y="40.2" width="0.6" height="5" fill="#323232"/></svg>
<div class="t" style="left:101.20px;top:35.20px;font-size:4.2px;color:#d6d6d6;">1</div>
<div class="t" style="left:128.95px;top:35.20px;font-size:4.2px;color:#d6d6d6;">9</div>
<div class="t" style="left:156.70px;top:35.20px;font-size:4.2px;color:#d6d6d6;">17</div>
<div class="t" style="left:184.45px;top:35.20px;font-size:4.2px;color:#d6d6d6;">25</div>
<div class="t" style="left:212.20px;top:35.20px;font-size:4.2px;color:#d6d6d6;">33</div>
<div class="t" style="left:239.95px;top:35.20px;font-size:4.2px;color:#d6d6d6;">41</div>
<div class="t" style="left:267.70px;top:35.20px;font-size:4.2px;color:#d6d6d6;">49</div>
<div class="t" style="left:295.45px;top:35.20px;font-size:4.2px;color:#d6d6d6;">57</div>
<div class="t" style="left:323.20px;top:35.20px;font-size:4.2px;color:#d6d6d6;">65</div>
<div class="t" style="left:350.95px;top:35.20px;font-size:4.2px;color:#d6d6d6;">73</div>
<div class="t" style="left:378.70px;top:35.20px;font-size:4.2px;color:#d6d6d6;">81</div>
<div class="t" style="left:406.45px;top:35.20px;font-size:4.2px;color:#d6d6d6;">89</div>
<div class="t" style="left:434.20px;top:35.20px;font-size:4.2px;color:#d6d6d6;">97</div>
<div class="t" style="left:461.95px;top:35.20px;font-size:4.2px;color:#d6d6d6;">105</div>
<div class="t" style="left:489.70px;top:35.20px;font-size:4.2px;color:#d6d6d6;">113</div>
<div class="t" style="left:517.45px;top:35.20px;font-size:4.2px;color:#d6d6d6;">121</div>
<div class="t" style="left:545.20px;top:35.20px;font-size:4.2px;color:#d6d6d6;">129</div>
<div class="t" style="left:572.95px;top:35.20px;font-size:4.2px;color:#7a7a7a;">137</div>
<div class="t" style="left:600.70px;top:35.20px;font-size:4.2px;color:#7a7a7a;">145</div>
<div class="t" style="left:628.45px;top:35.20px;font-size:4.2px;color:#7a7a7a;">153</div>
<div class="t" style="left:656.20px;top:35.20px;font-size:4.2px;color:#7a7a7a;">161</div>
<div class="t" style="left:683.95px;top:35.20px;font-size:4.2px;color:#7a7a7a;">169</div>
<div class="t" style="left:711.70px;top:35.20px;font-size:4.2px;color:#7a7a7a;">177</div>
<div class="t" style="left:739.45px;top:35.20px;font-size:4.2px;color:#7a7a7a;">185</div>
<div class="abs" style="left:745.00px;top:37.80px;width:18.50px;height:3.40px;background:#2e2e2e;border-radius:1.7px;box-shadow:0 0 0 0.3px #444"></div>
<div class="abs" style="left:743.90px;top:37.50px;width:3.90px;height:3.90px;background:#d8d8d8;border-radius:50%"></div>
<svg class="abs" style="left:566px;top:35px" width="4" height="4"><path d="M2.6 0.9 L1.3 1.9 L2.6 2.9" stroke="#a8a8a8" stroke-width="0.5" fill="none"/></svg>
<div class="abs" style="left:99.30px;top:45.70px;width:666.70px;height:7.80px;background:#2a2a2a;"></div>
<div class="abs" style="left:100.45px;top:45.90px;width:29.10px;height:7.20px;background:#484848;"></div>
<div class="t" style="left:100.00px;top:47.80px;font-size:3.9px;color:#d8ddd8;width:30.00px;text-align:center;">Intro</div>
<div class="abs" style="left:130.45px;top:45.90px;width:41.80px;height:7.20px;background:#484848;"></div>
<div class="t" style="left:130.00px;top:47.80px;font-size:3.9px;color:#d8ddd8;width:42.70px;text-align:center;">Verse</div>
<div class="abs" style="left:173.15px;top:45.90px;width:41.00px;height:7.20px;background:#484848;"></div>
<div class="t" style="left:172.70px;top:47.80px;font-size:3.9px;color:#d8ddd8;width:41.90px;text-align:center;">Chorus</div>
<div class="abs" style="left:215.05px;top:45.90px;width:40.10px;height:7.20px;background:#484848;"></div>
<div class="t" style="left:214.60px;top:47.80px;font-size:3.9px;color:#d8ddd8;width:41.00px;text-align:center;">Verse</div>
<div class="abs" style="left:256.05px;top:45.90px;width:40.80px;height:7.20px;background:#484848;"></div>
<div class="t" style="left:255.60px;top:47.80px;font-size:3.9px;color:#d8ddd8;width:41.70px;text-align:center;">Chorus</div>
<div class="abs" style="left:297.75px;top:45.90px;width:27.20px;height:7.20px;background:#484848;"></div>
<div class="t" style="left:297.30px;top:47.80px;font-size:3.9px;color:#d8ddd8;width:28.10px;text-align:center;">Gtr Solo</div>
<div class="abs" style="left:325.85px;top:45.90px;width:44.30px;height:7.20px;background:#484848;"></div>
<div class="t" style="left:325.40px;top:47.80px;font-size:3.9px;color:#d8ddd8;width:45.20px;text-align:center;">Bridge</div>
<div class="abs" style="left:371.05px;top:45.90px;width:40.50px;height:7.20px;background:#484848;"></div>
<div class="t" style="left:370.60px;top:47.80px;font-size:3.9px;color:#d8ddd8;width:41.40px;text-align:center;">Verse</div>
<div class="abs" style="left:412.45px;top:45.90px;width:82.60px;height:7.20px;background:#484848;"></div>
<div class="t" style="left:412.00px;top:47.80px;font-size:3.9px;color:#d8ddd8;width:83.50px;text-align:center;">Chorus</div>
<div class="abs" style="left:495.95px;top:45.90px;width:68.60px;height:7.20px;background:#484848;"></div>
<div class="t" style="left:495.50px;top:47.80px;font-size:3.9px;color:#d8ddd8;width:69.50px;text-align:center;">Outro</div>
<div class="abs" style="left:565.50px;top:45.70px;width:197.50px;height:356.50px;background:#262626;"></div>
<div class="abs" style="left:565.50px;top:53.10px;width:197.50px;height:0.50px;background:#1e1e1e;"></div>
<div class="abs" style="left:99.30px;top:369.80px;width:466.00px;height:32.40px;background:#2d2d2d;"></div>
<svg class="abs" style="left:0;top:0" width="768" height="432"><rect x="100.60" y="53.5" width="0.4" height="316.3" fill="rgba(0,0,0,0.18)"/><rect x="104.07" y="53.5" width="0.4" height="316.3" fill="rgba(0,0,0,0.18)"/><rect x="107.54" y="53.5" width="0.4" height="316.3" fill="rgba(0,0,0,0.18)"/><rect x="111.01" y="53.5" width="0.4" height="316.3" fill="rgba(0,0,0,0.18)"/><rect x="114.48" y="53.5" width="0.4" height="316.3" fill="rgba(0,0,0,0.18)"/><rect x="117.94" y="53.5" width="0.4" height="316.3" fill="rgba(0,0,0,0.18)"/><rect x="121.41" y="53.5" width="0.4" height="316.3" fill="rgba(0,0,0,0.18)"/><rect x="124.88" y="53.5" width="0.4" height="316.3" fill="rgba(0,0,0,0.18)"/><rect x="128.35" y="53.5" width="0.4" height="316.3" fill="rgba(0,0,0,0.18)"/><rect x="131.82" y="53.5" width="0.4" height="316.3" fill="rgba(0,0,0,0.18)"/><rect x="135.29" y="53.5" width="0.4" height="316.3" fill="rgba(0,0,0,0.18)"/><rect x="138.76" y="53.5" width="0.4" height="316.3" fill="rgba(0,0,0,0.18)"/><rect x="142.23" y="53.5" width="0.4" height="316.3" fill="rgba(0,0,0,0.18)"/><rect x="145.70" y="53.5" width="0.4" height="316.3" fill="rgba(0,0,0,0.18)"/><rect x="149.17" y="53.5" width="0.4" height="316.3" fill="rgba(0,0,0,0.18)"/><rect x="152.63" y="53.5" width="0.4" height="316.3" fill="rgba(0,0,0,0.18)"/><rect x="156.10" y="53.5" width="0.4" height="316.3" fill="rgba(0,0,0,0.18)"/><rect x="159.57" y="53.5" width="0.4" height="316.3" fill="rgba(0,0,0,0.18)"/><rect x="163.04" y="53.5" width="0.4" height="316.3" fill="rgba(0,0,0,0.18)"/><rect x="166.51" y="53.5" width="0.4" height="316.3" fill="rgba(0,0,0,0.18)"/><rect x="169.98" y="53.5" width="0.4" height="316.3" fill="rgba(0,0,0,0.18)"/><rect x="173.45" y="53.5" width="0.4" height="316.3" fill="rgba(0,0,0,0.18)"/><rect x="176.92" y="53.5" width="0.4" height="316.3" fill="rgba(0,0,0,0.18)"/><rect x="180.39" y="53.5" width="0.4" height="316.3" fill="rgba(0,0,0,0.18)"/><rect x="183.86" y="53.5" width="0.4" height="316.3" fill="rgba(0,0,0,0.18)"/><rect x="187.32" y="53.5" width="0.4" height="316.3" fill="rgba(0,0,0,0.18)"/><rect x="190.79" y="53.5" width="0.4" height="316.3" fill="rgba(0,0,0,0.18)"/><rect x="194.26" y="53.5" width="0.4" height="316.3" fill="rgba(0,0,0,0.18)"/><rect x="197.73" y="53.5" width="0.4" height="316.3" fill="rgba(0,0,0,0.18)"/><rect x="201.20" y="53.5" width="0.4" height="316.3" fill="rgba(0,0,0,0.18)"/><rect x="204.67" y="53.5" width="0.4" height="316.3" fill="rgba(0,0,0,0.18)"/><rect x="208.14" y="53.5" width="0.4" height="316.3" fill="rgba(0,0,0,0.18)"/><rect x="211.61" y="53.5" width="0.4" height="316.3" fill="rgba(0,0,0,0.18)"/><rect x="215.08" y="53.5" width="0.4" height="316.3" fill="rgba(0,0,0,0.18)"/><rect x="218.55" y="53.5" width="0.4" height="316.3" fill="rgba(0,0,0,0.18)"/><rect x="222.01" y="53.5" width="0.4" height="316.3" fill="rgba(0,0,0,0.18)"/><rect x="225.48" y="53.5" width="0.4" height="316.3" fill="rgba(0,0,0,0.18)"/><rect x="228.95" y="53.5" width="0.4" height="316.3" fill="rgba(0,0,0,0.18)"/><rect x="232.42" y="53.5" width="0.4" height="316.3" fill="rgba(0,0,0,0.18)"/><rect x="235.89" y="53.5" width="0.4" height="316.3" fill="rgba(0,0,0,0.18)"/><rect x="239.36" y="53.5" width="0.4" height="316.3" fill="rgba(0,0,0,0.18)"/><rect x="242.83" y="53.5" width="0.4" height="316.3" fill="rgba(0,0,0,0.18)"/><rect x="246.30" y="53.5" width="0.4" height="316.3" fill="rgba(0,0,0,0.18)"/><rect x="249.77" y="53.5" width="0.4" height="316.3" fill="rgba(0,0,0,0.18)"/><rect x="253.24" y="53.5" width="0.4" height="316.3" fill="rgba(0,0,0,0.18)"/><rect x="256.70" y="53.5" width="0.4" height="316.3" fill="rgba(0,0,0,0.18)"/><rect x="260.17" y="53.5" width="0.4" height="316.3" fill="rgba(0,0,0,0.18)"/><rect x="263.64" y="53.5" width="0.4" height="316.3" fill="rgba(0,0,0,0.18)"/><rect x="267.11" y="53.5" width="0.4" height="316.3" fill="rgba(0,0,0,0.18)"/><rect x="270.58" y="53.5" width="0.4" height="316.3" fill="rgba(0,0,0,0.18)"/><rect x="274.05" y="53.5" width="0.4" height="316.3" fill="rgba(0,0,0,0.18)"/><rect x="277.52" y="53.5" width="0.4" height="316.3" fill="rgba(0,0,0,0.18)"/><rect x="280.99" y="53.5" width="0.4" height="316.3" fill="rgba(0,0,0,0.18)"/><rect x="284.46" y="53.5" width="0.4" height="316.3" fill="rgba(0,0,0,0.18)"/><rect x="287.93" y="53.5" width="0.4" height="316.3" fill="rgba(0,0,0,0.18)"/><rect x="291.39" y="53.5" width="0.4" height="316.3" fill="rgba(0,0,0,0.18)"/><rect x="294.86" y="53.5" width="0.4" height="316.3" fill="rgba(0,0,0,0.18)"/><rect x="298.33" y="53.5" width="0.4" height="316.3" fill="rgba(0,0,0,0.18)"/><rect x="301.80" y="53.5" width="0.4" height="316.3" fill="rgba(0,0,0,0.18)"/><rect x="305.27" y="53.5" width="0.4" height="316.3" fill="rgba(0,0,0,0.18)"/><rect x="308.74" y="53.5" width="0.4" height="316.3" fill="rgba(0,0,0,0.18)"/><rect x="312.21" y="53.5" width="0.4" height="316.3" fill="rgba(0,0,0,0.18)"/><rect x="315.68" y="53.5" width="0.4" height="316.3" fill="rgba(0,0,0,0.18)"/><rect x="319.15" y="53.5" width="0.4" height="316.3" fill="rgba(0,0,0,0.18)"/><rect x="322.62" y="53.5" width="0.4" height="316.3" fill="rgba(0,0,0,0.18)"/><rect x="326.08" y="53.5" width="0.4" height="316.3" fill="rgba(0,0,0,0.18)"/><rect x="329.55" y="53.5" width="0.4" height="316.3" fill="rgba(0,0,0,0.18)"/><rect x="333.02" y="53.5" width="0.4" height="316.3" fill="rgba(0,0,0,0.18)"/><rect x="336.49" y="53.5" width="0.4" height="316.3" fill="rgba(0,0,0,0.18)"/><rect x="339.96" y="53.5" width="0.4" height="316.3" fill="rgba(0,0,0,0.18)"/><rect x="343.43" y="53.5" width="0.4" height="316.3" fill="rgba(0,0,0,0.18)"/><rect x="346.90" y="53.5" width="0.4" height="316.3" fill="rgba(0,0,0,0.18)"/><rect x="350.37" y="53.5" width="0.4" height="316.3" fill="rgba(0,0,0,0.18)"/><rect x="353.84" y="53.5" width="0.4" height="316.3" fill="rgba(0,0,0,0.18)"/><rect x="357.31" y="53.5" width="0.4" height="316.3" fill="rgba(0,0,0,0.18)"/><rect x="360.77" y="53.5" width="0.4" height="316.3" fill="rgba(0,0,0,0.18)"/><rect x="364.24" y="53.5" width="0.4" height="316.3" fill="rgba(0,0,0,0.18)"/><rect x="367.71" y="53.5" width="0.4" height="316.3" fill="rgba(0,0,0,0.18)"/><rect x="371.18" y="53.5" width="0.4" height="316.3" fill="rgba(0,0,0,0.18)"/><rect x="374.65" y="53.5" width="0.4" height="316.3" fill="rgba(0,0,0,0.18)"/><rect x="378.12" y="53.5" width="0.4" height="316.3" fill="rgba(0,0,0,0.18)"/><rect x="381.59" y="53.5" width="0.4" height="316.3" fill="rgba(0,0,0,0.18)"/><rect x="385.06" y="53.5" width="0.4" height="316.3" fill="rgba(0,0,0,0.18)"/><rect x="388.53" y="53.5" width="0.4" height="316.3" fill="rgba(0,0,0,0.18)"/><rect x="392.00" y="53.5" width="0.4" height="316.3" fill="rgba(0,0,0,0.18)"/><rect x="395.47" y="53.5" width="0.4" height="316.3" fill="rgba(0,0,0,0.18)"/><rect x="398.93" y="53.5" width="0.4" height="316.3" fill="rgba(0,0,0,0.18)"/><rect x="402.40" y="53.5" width="0.4" height="316.3" fill="rgba(0,0,0,0.18)"/><rect x="405.87" y="53.5" width="0.4" height="316.3" fill="rgba(0,0,0,0.18)"/><rect x="409.34" y="53.5" width="0.4" height="316.3" fill="rgba(0,0,0,0.18)"/><rect x="412.81" y="53.5" width="0.4" height="316.3" fill="rgba(0,0,0,0.18)"/><rect x="416.28" y="53.5" width="0.4" height="316.3" fill="rgba(0,0,0,0.18)"/><rect x="419.75" y="53.5" width="0.4" height="316.3" fill="rgba(0,0,0,0.18)"/><rect x="423.22" y="53.5" width="0.4" height="316.3" fill="rgba(0,0,0,0.18)"/><rect x="426.69" y="53.5" width="0.4" height="316.3" fill="rgba(0,0,0,0.18)"/><rect x="430.15" y="53.5" width="0.4" height="316.3" fill="rgba(0,0,0,0.18)"/><rect x="433.62" y="53.5" width="0.4" height="316.3" fill="rgba(0,0,0,0.18)"/><rect x="437.09" y="53.5" width="0.4" height="316.3" fill="rgba(0,0,0,0.18)"/><rect x="440.56" y="53.5" width="0.4" height="316.3" fill="rgba(0,0,0,0.18)"/><rect x="444.03" y="53.5" width="0.4" height="316.3" fill="rgba(0,0,0,0.18)"/><rect x="447.50" y="53.5" width="0.4" height="316.3" fill="rgba(0,0,0,0.18)"/><rect x="450.97" y="53.5" width="0.4" height="316.3" fill="rgba(0,0,0,0.18)"/><rect x="454.44" y="53.5" width="0.4" height="316.3" fill="rgba(0,0,0,0.18)"/><rect x="457.91" y="53.5" width="0.4" height="316.3" fill="rgba(0,0,0,0.18)"/><rect x="461.38" y="53.5" width="0.4" height="316.3" fill="rgba(0,0,0,0.18)"/><rect x="464.85" y="53.5" width="0.4" height="316.3" fill="rgba(0,0,0,0.18)"/><rect x="468.31" y="53.5" width="0.4" height="316.3" fill="rgba(0,0,0,0.18)"/><rect x="471.78" y="53.5" width="0.4" height="316.3" fill="rgba(0,0,0,0.18)"/><rect x="475.25" y="53.5" width="0.4" height="316.3" fill="rgba(0,0,0,0.18)"/><rect x="478.72" y="53.5" width="0.4" height="316.3" fill="rgba(0,0,0,0.18)"/><rect x="482.19" y="53.5" width="0.4" height="316.3" fill="rgba(0,0,0,0.18)"/><rect x="485.66" y="53.5" width="0.4" height="316.3" fill="rgba(0,0,0,0.18)"/><rect x="489.13" y="53.5" width="0.4" height="316.3" fill="rgba(0,0,0,0.18)"/><rect x="492.60" y="53.5" width="0.4" height="316.3" fill="rgba(0,0,0,0.18)"/><rect x="496.07" y="53.5" width="0.4" height="316.3" fill="rgba(0,0,0,0.18)"/><rect x="499.53" y="53.5" width="0.4" height="316.3" fill="rgba(0,0,0,0.18)"/><rect x="503.00" y="53.5" width="0.4" height="316.3" fill="rgba(0,0,0,0.18)"/><rect x="506.47" y="53.5" width="0.4" height="316.3" fill="rgba(0,0,0,0.18)"/><rect x="509.94" y="53.5" width="0.4" height="316.3" fill="rgba(0,0,0,0.18)"/><rect x="513.41" y="53.5" width="0.4" height="316.3" fill="rgba(0,0,0,0.18)"/><rect x="516.88" y="53.5" width="0.4" height="316.3" fill="rgba(0,0,0,0.18)"/><rect x="520.35" y="53.5" width="0.4" height="316.3" fill="rgba(0,0,0,0.18)"/><rect x="523.82" y="53.5" width="0.4" height="316.3" fill="rgba(0,0,0,0.18)"/><rect x="527.29" y="53.5" width="0.4" height="316.3" fill="rgba(0,0,0,0.18)"/><rect x="530.76" y="53.5" width="0.4" height="316.3" fill="rgba(0,0,0,0.18)"/><rect x="534.23" y="53.5" width="0.4" height="316.3" fill="rgba(0,0,0,0.18)"/><rect x="537.69" y="53.5" width="0.4" height="316.3" fill="rgba(0,0,0,0.18)"/><rect x="541.16" y="53.5" width="0.4" height="316.3" fill="rgba(0,0,0,0.18)"/><rect x="544.63" y="53.5" width="0.4" height="316.3" fill="rgba(0,0,0,0.18)"/><rect x="548.10" y="53.5" width="0.4" height="316.3" fill="rgba(0,0,0,0.18)"/><rect x="551.57" y="53.5" width="0.4" height="316.3" fill="rgba(0,0,0,0.18)"/><rect x="555.04" y="53.5" width="0.4" height="316.3" fill="rgba(0,0,0,0.18)"/><rect x="558.51" y="53.5" width="0.4" height="316.3" fill="rgba(0,0,0,0.18)"/><rect x="561.98" y="53.5" width="0.4" height="316.3" fill="rgba(0,0,0,0.18)"/><rect x="565.45" y="53.5" width="0.4" height="316.3" fill="rgba(0,0,0,0.18)"/><rect x="568.91" y="53.5" width="0.4" height="316.3" fill="rgba(0,0,0,0.18)"/><rect x="572.38" y="53.5" width="0.4" height="316.3" fill="rgba(0,0,0,0.18)"/><rect x="575.85" y="53.5" width="0.4" height="316.3" fill="rgba(0,0,0,0.18)"/><rect x="579.32" y="53.5" width="0.4" height="316.3" fill="rgba(0,0,0,0.18)"/><rect x="582.79" y="53.5" width="0.4" height="316.3" fill="rgba(0,0,0,0.18)"/><rect x="586.26" y="53.5" width="0.4" height="316.3" fill="rgba(0,0,0,0.18)"/><rect x="589.73" y="53.5" width="0.4" height="316.3" fill="rgba(0,0,0,0.18)"/><rect x="593.20" y="53.5" width="0.4" height="316.3" fill="rgba(0,0,0,0.18)"/><rect x="596.67" y="53.5" width="0.4" height="316.3" fill="rgba(0,0,0,0.18)"/><rect x="600.14" y="53.5" width="0.4" height="316.3" fill="rgba(0,0,0,0.18)"/><rect x="603.61" y="53.5" width="0.4" height="316.3" fill="rgba(0,0,0,0.18)"/><rect x="607.07" y="53.5" width="0.4" height="316.3" fill="rgba(0,0,0,0.18)"/><rect x="610.54" y="53.5" width="0.4" height="316.3" fill="rgba(0,0,0,0.18)"/><rect x="614.01" y="53.5" width="0.4" height="316.3" fill="rgba(0,0,0,0.18)"/><rect x="617.48" y="53.5" width="0.4" height="316.3" fill="rgba(0,0,0,0.18)"/><rect x="620.95" y="53.5" width="0.4" height="316.3" fill="rgba(0,0,0,0.18)"/><rect x="624.42" y="53.5" width="0.4" height="316.3" fill="rgba(0,0,0,0.18)"/><rect x="627.89" y="53.5" width="0.4" height="316.3" fill="rgba(0,0,0,0.18)"/><rect x="631.36" y="53.5" width="0.4" height="316.3" fill="rgba(0,0,0,0.18)"/><rect x="634.83" y="53.5" width="0.4" height="316.3" fill="rgba(0,0,0,0.18)"/><rect x="638.29" y="53.5" width="0.4" height="316.3" fill="rgba(0,0,0,0.18)"/><rect x="641.76" y="53.5" width="0.4" height="316.3" fill="rgba(0,0,0,0.18)"/><rect x="645.23" y="53.5" width="0.4" height="316.3" fill="rgba(0,0,0,0.18)"/><rect x="648.70" y="53.5" width="0.4" height="316.3" fill="rgba(0,0,0,0.18)"/><rect x="652.17" y="53.5" width="0.4" height="316.3" fill="rgba(0,0,0,0.18)"/><rect x="655.64" y="53.5" width="0.4" height="316.3" fill="rgba(0,0,0,0.18)"/><rect x="659.11" y="53.5" width="0.4" height="316.3" fill="rgba(0,0,0,0.18)"/><rect x="662.58" y="53.5" width="0.4" height="316.3" fill="rgba(0,0,0,0.18)"/><rect x="666.05" y="53.5" width="0.4" height="316.3" fill="rgba(0,0,0,0.18)"/><rect x="669.52" y="53.5" width="0.4" height="316.3" fill="rgba(0,0,0,0.18)"/><rect x="672.99" y="53.5" width="0.4" height="316.3" fill="rgba(0,0,0,0.18)"/><rect x="676.45" y="53.5" width="0.4" height="316.3" fill="rgba(0,0,0,0.18)"/><rect x="679.92" y="53.5" width="0.4" height="316.3" fill="rgba(0,0,0,0.18)"/><rect x="683.39" y="53.5" width="0.4" height="316.3" fill="rgba(0,0,0,0.18)"/><rect x="686.86" y="53.5" width="0.4" height="316.3" fill="rgba(0,0,0,0.18)"/><rect x="690.33" y="53.5" width="0.4" height="316.3" fill="rgba(0,0,0,0.18)"/><rect x="693.80" y="53.5" width="0.4" height="316.3" fill="rgba(0,0,0,0.18)"/><rect x="697.27" y="53.5" width="0.4" height="316.3" fill="rgba(0,0,0,0.18)"/><rect x="700.74" y="53.5" width="0.4" height="316.3" fill="rgba(0,0,0,0.18)"/><rect x="704.21" y="53.5" width="0.4" height="316.3" fill="rgba(0,0,0,0.18)"/><rect x="707.67" y="53.5" width="0.4" height="316.3" fill="rgba(0,0,0,0.18)"/><rect x="711.14" y="53.5" width="0.4" height="316.3" fill="rgba(0,0,0,0.18)"/><rect x="714.61" y="53.5" width="0.4" height="316.3" fill="rgba(0,0,0,0.18)"/><rect x="718.08" y="53.5" width="0.4" height="316.3" fill="rgba(0,0,0,0.18)"/><rect x="721.55" y="53.5" width="0.4" height="316.3" fill="rgba(0,0,0,0.18)"/><rect x="725.02" y="53.5" width="0.4" height="316.3" fill="rgba(0,0,0,0.18)"/><rect x="728.49" y="53.5" width="0.4" height="316.3" fill="rgba(0,0,0,0.18)"/><rect x="731.96" y="53.5" width="0.4" height="316.3" fill="rgba(0,0,0,0.18)"/><rect x="735.43" y="53.5" width="0.4" height="316.3" fill="rgba(0,0,0,0.18)"/><rect x="738.90" y="53.5" width="0.4" height="316.3" fill="rgba(0,0,0,0.18)"/><rect x="742.37" y="53.5" width="0.4" height="316.3" fill="rgba(0,0,0,0.18)"/><rect x="745.83" y="53.5" width="0.4" height="316.3" fill="rgba(0,0,0,0.18)"/><rect x="749.30" y="53.5" width="0.4" height="316.3" fill="rgba(0,0,0,0.18)"/><rect x="752.77" y="53.5" width="0.4" height="316.3" fill="rgba(0,0,0,0.18)"/><rect x="756.24" y="53.5" width="0.4" height="316.3" fill="rgba(0,0,0,0.18)"/><rect x="759.71" y="53.5" width="0.4" height="316.3" fill="rgba(0,0,0,0.18)"/></svg>
<div class="abs" style="left:763.00px;top:45.50px;width:3.90px;height:356.70px;background:#3a3a3a;"></div>
<div class="abs" style="left:0.00px;top:402.20px;width:767.00px;height:4.50px;background:#393939;"></div>
<div class="abs" style="left:0.00px;top:406.70px;width:768.00px;height:7.00px;background:linear-gradient(rgba(10,20,35,0.45),rgba(10,20,35,0));"></div>
<div class="abs" style="left:98.60px;top:39.50px;width:0.70px;height:362.70px;background:#6e6e6e;"></div>
<svg class="abs" style="left:96px;top:39px" width="7" height="7"><path d="M0.5 0.8 H5.5 V3.2 L3 5.8 L0.5 3.2 Z" fill="#e6e6e6"/></svg>
<div class="abs" style="left:99.50px;top:53.85px;width:447.50px;height:27.25px;background:#22a232;border-radius:0.7px"></div>
<div class="t" style="left:101.10px;top:55.95px;font-size:3.7px;color:#e0f4e0;">Kick</div>
<div class="t" style="left:407.50px;top:55.95px;font-size:3.7px;color:#e0f4e0;">Kick</div>
<svg class="abs" style="left:0;top:0" width="768" height="432"><rect x="103.00" y="74.35" width="1.10" height="0.75" fill="#e8f8e8" fill-opacity="0.8"/><rect x="104.50" y="74.35" width="1.10" height="0.75" fill="#e8f8e8" fill-opacity="0.8"/><rect x="106.00" y="74.35" width="1.10" height="0.75" fill="#e8f8e8" fill-opacity="0.8"/><rect x="107.50" y="74.35" width="1.10" height="0.75" fill="#e8f8e8" fill-opacity="0.8"/><rect x="109.00" y="74.35" width="1.10" height="0.75" fill="#e8f8e8" fill-opacity="0.8"/><rect x="110.50" y="74.35" width="1.10" height="0.75" fill="#e8f8e8" fill-opacity="0.8"/><rect x="112.00" y="74.35" width="1.10" height="0.75" fill="#e8f8e8" fill-opacity="0.8"/><rect x="113.50" y="74.35" width="1.10" height="0.75" fill="#e8f8e8" fill-opacity="0.8"/><rect x="115.00" y="74.35" width="1.10" height="0.75" fill="#e8f8e8" fill-opacity="0.8"/><rect x="116.50" y="74.35" width="1.10" height="0.75" fill="#e8f8e8" fill-opacity="0.8"/><rect x="118.00" y="74.35" width="1.10" height="0.75" fill="#e8f8e8" fill-opacity="0.8"/><rect x="119.50" y="74.35" width="1.10" height="0.75" fill="#e8f8e8" fill-opacity="0.8"/><rect x="121.00" y="74.35" width="1.10" height="0.75" fill="#e8f8e8" fill-opacity="0.8"/><rect x="122.50" y="74.35" width="1.10" height="0.75" fill="#e8f8e8" fill-opacity="0.8"/><rect x="124.00" y="74.35" width="1.10" height="0.75" fill="#e8f8e8" fill-opacity="0.8"/><rect x="125.50" y="74.35" width="1.10" height="0.75" fill="#e8f8e8" fill-opacity="0.8"/><rect x="127.00" y="74.35" width="1.10" height="0.75" fill="#e8f8e8" fill-opacity="0.8"/><rect x="128.50" y="74.35" width="1.10" height="0.75" fill="#e8f8e8" fill-opacity="0.8"/><rect x="130.00" y="74.35" width="1.10" height="0.75" fill="#e8f8e8" fill-opacity="0.8"/><rect x="131.50" y="74.35" width="1.10" height="0.75" fill="#e8f8e8" fill-opacity="0.8"/><rect x="133.00" y="74.35" width="1.10" height="0.75" fill="#e8f8e8" fill-opacity="0.8"/><rect x="134.50" y="74.35" width="1.10" height="0.75" fill="#e8f8e8" fill-opacity="0.8"/><rect x="136.00" y="74.35" width="1.10" height="0.75" fill="#e8f8e8" fill-opacity="0.8"/><rect x="137.50" y="74.35" width="1.10" height="0.75" fill="#e8f8e8" fill-opacity="0.8"/><rect x="139.00" y="74.35" width="1.10" height="0.75" fill="#e8f8e8" fill-opacity="0.8"/><rect x="140.50" y="74.35" width="1.10" height="0.75" fill="#e8f8e8" fill-opacity="0.8"/><rect x="142.00" y="74.35" width="1.10" height="0.75" fill="#e8f8e8" fill-opacity="0.8"/><rect x="143.50" y="74.35" width="1.10" height="0.75" fill="#e8f8e8" fill-opacity="0.8"/><rect x="145.00" y="74.35" width="1.10" height="0.75" fill="#e8f8e8" fill-opacity="0.8"/><rect x="146.50" y="74.35" width="1.10" height="0.75" fill="#e8f8e8" fill-opacity="0.8"/><rect x="148.00" y="74.35" width="1.10" height="0.75" fill="#e8f8e8" fill-opacity="0.8"/><rect x="149.50" y="74.35" width="1.10" height="0.75" fill="#e8f8e8" fill-opacity="0.8"/><rect x="151.00" y="74.35" width="1.10" height="0.75" fill="#e8f8e8" fill-opacity="0.8"/><rect x="152.50" y="74.35" width="1.10" height="0.75" fill="#e8f8e8" fill-opacity="0.8"/><rect x="154.00" y="74.35" width="1.10" height="0.75" fill="#e8f8e8" fill-opacity="0.8"/><rect x="155.50" y="74.35" width="1.10" height="0.75" fill="#e8f8e8" fill-opacity="0.8"/><rect x="157.00" y="74.35" width="1.10" height="0.75" fill="#e8f8e8" fill-opacity="0.8"/><rect x="158.50" y="74.35" width="1.10" height="0.75" fill="#e8f8e8" fill-opacity="0.8"/><rect x="160.00" y="74.35" width="1.10" height="0.75" fill="#e8f8e8" fill-opacity="0.8"/><rect x="161.50" y="74.35" width="1.10" height="0.75" fill="#e8f8e8" fill-opacity="0.8"/><rect x="163.00" y="74.35" width="1.10" height="0.75" fill="#e8f8e8" fill-opacity="0.8"/><rect x="164.50" y="74.35" width="1.10" height="0.75" fill="#e8f8e8" fill-opacity="0.8"/><rect x="166.00" y="74.35" width="1.10" height="0.75" fill="#e8f8e8" fill-opacity="0.8"/><rect x="167.50" y="74.35" width="1.10" height="0.75" fill="#e8f8e8" fill-opacity="0.8"/><rect x="169.00" y="74.35" width="1.10" height="0.75" fill="#e8f8e8" fill-opacity="0.8"/><rect x="170.50" y="74.35" width="1.10" height="0.75" fill="#e8f8e8" fill-opacity="0.8"/><rect x="172.00" y="74.35" width="1.10" height="0.75" fill="#e8f8e8" fill-opacity="0.8"/><rect x="173.50" y="74.35" width="1.10" height="0.75" fill="#e8f8e8" fill-opacity="0.8"/><rect x="175.00" y="74.35" width="1.10" height="0.75" fill="#e8f8e8" fill-opacity="0.8"/><rect x="176.50" y="74.35" width="1.10" height="0.75" fill="#e8f8e8" fill-opacity="0.8"/><rect x="178.00" y="74.35" width="1.10" height="0.75" fill="#e8f8e8" fill-opacity="0.8"/><rect x="179.50" y="74.35" width="1.10" height="0.75" fill="#e8f8e8" fill-opacity="0.8"/><rect x="181.00" y="74.35" width="1.10" height="0.75" fill="#e8f8e8" fill-opacity="0.8"/><rect x="182.50" y="74.35" width="1.10" height="0.75" fill="#e8f8e8" fill-opacity="0.8"/><rect x="184.00" y="74.35" width="1.10" height="0.75" fill="#e8f8e8" fill-opacity="0.8"/><rect x="185.50" y="74.35" width="1.10" height="0.75" fill="#e8f8e8" fill-opacity="0.8"/><rect x="187.00" y="74.35" width="1.10" height="0.75" fill="#e8f8e8" fill-opacity="0.8"/><rect x="188.50" y="74.35" width="1.10" height="0.75" fill="#e8f8e8" fill-opacity="0.8"/><rect x="190.00" y="74.35" width="1.10" height="0.75" fill="#e8f8e8" fill-opacity="0.8"/><rect x="191.50" y="74.35" width="1.10" height="0.75" fill="#e8f8e8" fill-opacity="0.8"/><rect x="193.00" y="74.35" width="1.10" height="0.75" fill="#e8f8e8" fill-opacity="0.8"/><rect x="194.50" y="74.35" width="1.10" height="0.75" fill="#e8f8e8" fill-opacity="0.8"/><rect x="196.00" y="74.35" width="1.10" height="0.75" fill="#e8f8e8" fill-opacity="0.8"/><rect x="197.50" y="74.35" width="1.10" height="0.75" fill="#e8f8e8" fill-opacity="0.8"/><rect x="199.00" y="74.35" width="1.10" height="0.75" fill="#e8f8e8" fill-opacity="0.8"/><rect x="200.50" y="74.35" width="1.10" height="0.75" fill="#e8f8e8" fill-opacity="0.8"/><rect x="202.00" y="74.35" width="1.10" height="0.75" fill="#e8f8e8" fill-opacity="0.8"/><rect x="203.50" y="74.35" width="1.10" height="0.75" fill="#e8f8e8" fill-opacity="0.8"/><rect x="205.00" y="74.35" width="1.10" height="0.75" fill="#e8f8e8" fill-opacity="0.8"/><rect x="206.50" y="74.35" width="1.10" height="0.75" fill="#e8f8e8" fill-opacity="0.8"/><rect x="208.00" y="74.35" width="1.10" height="0.75" fill="#e8f8e8" fill-opacity="0.8"/><rect x="209.50" y="74.35" width="1.10" height="0.75" fill="#e8f8e8" fill-opacity="0.8"/><rect x="211.00" y="74.35" width="1.10" height="0.75" fill="#e8f8e8" fill-opacity="0.8"/><rect x="212.50" y="74.35" width="1.10" height="0.75" fill="#e8f8e8" fill-opacity="0.8"/><rect x="214.00" y="74.35" width="1.10" height="0.75" fill="#e8f8e8" fill-opacity="0.8"/><rect x="215.50" y="74.35" width="1.10" height="0.75" fill="#e8f8e8" fill-opacity="0.8"/><rect x="217.00" y="74.35" width="1.10" height="0.75" fill="#e8f8e8" fill-opacity="0.8"/><rect x="218.50" y="74.35" width="1.10" height="0.75" fill="#e8f8e8" fill-opacity="0.8"/><rect x="220.00" y="74.35" width="1.10" height="0.75" fill="#e8f8e8" fill-opacity="0.8"/><rect x="221.50" y="74.35" width="1.10" height="0.75" fill="#e8f8e8" fill-opacity="0.8"/><rect x="223.00" y="74.35" width="1.10" height="0.75" fill="#e8f8e8" fill-opacity="0.8"/><rect x="224.50" y="74.35" width="1.10" height="0.75" fill="#e8f8e8" fill-opacity="0.8"/><rect x="226.00" y="74.35" width="1.10" height="0.75" fill="#e8f8e8" fill-opacity="0.8"/><rect x="227.50" y="74.35" width="1.10" height="0.75" fill="#e8f8e8" fill-opacity="0.8"/><rect x="229.00" y="74.35" width="1.10" height="0.75" fill="#e8f8e8" fill-opacity="0.8"/><rect x="230.50" y="74.35" width="1.10" height="0.75" fill="#e8f8e8" fill-opacity="0.8"/><rect x="232.00" y="74.35" width="1.10" height="0.75" fill="#e8f8e8" fill-opacity="0.8"/><rect x="233.50" y="74.35" width="1.10" height="0.75" fill="#e8f8e8" fill-opacity="0.8"/><rect x="235.00" y="74.35" width="1.10" height="0.75" fill="#e8f8e8" fill-opacity="0.8"/><rect x="236.50" y="74.35" width="1.10" height="0.75" fill="#e8f8e8" fill-opacity="0.8"/><rect x="238.00" y="74.35" width="1.10" height="0.75" fill="#e8f8e8" fill-opacity="0.8"/><rect x="239.50" y="74.35" width="1.10" height="0.75" fill="#e8f8e8" fill-opacity="0.8"/><rect x="241.00" y="74.35" width="1.10" height="0.75" fill="#e8f8e8" fill-opacity="0.8"/><rect x="242.50" y="74.35" width="1.10" height="0.75" fill="#e8f8e8" fill-opacity="0.8"/><rect x="244.00" y="74.35" width="1.10" height="0.75" fill="#e8f8e8" fill-opacity="0.8"/><rect x="245.50" y="74.35" width="1.10" height="0.75" fill="#e8f8e8" fill-opacity="0.8"/><rect x="247.00" y="74.35" width="1.10" height="0.75" fill="#e8f8e8" fill-opacity="0.8"/><rect x="248.50" y="74.35" width="1.10" height="0.75" fill="#e8f8e8" fill-opacity="0.8"/><rect x="250.00" y="74.35" width="1.10" height="0.75" fill="#e8f8e8" fill-opacity="0.8"/><rect x="251.50" y="74.35" width="1.10" height="0.75" fill="#e8f8e8" fill-opacity="0.8"/><rect x="253.00" y="74.35" width="1.10" height="0.75" fill="#e8f8e8" fill-opacity="0.8"/><rect x="254.50" y="74.35" width="1.10" height="0.75" fill="#e8f8e8" fill-opacity="0.8"/><rect x="256.00" y="74.35" width="1.10" height="0.75" fill="#e8f8e8" fill-opacity="0.8"/><rect x="257.50" y="74.35" width="1.10" height="0.75" fill="#e8f8e8" fill-opacity="0.8"/><rect x="259.00" y="74.35" width="1.10" height="0.75" fill="#e8f8e8" fill-opacity="0.8"/><rect x="260.50" y="74.35" width="1.10" height="0.75" fill="#e8f8e8" fill-opacity="0.8"/><rect x="262.00" y="74.35" width="1.10" height="0.75" fill="#e8f8e8" fill-opacity="0.8"/><rect x="263.50" y="74.35" width="1.10" height="0.75" fill="#e8f8e8" fill-opacity="0.8"/><rect x="265.00" y="74.35" width="1.10" height="0.75" fill="#e8f8e8" fill-opacity="0.8"/><rect x="266.50" y="74.35" width="1.10" height="0.75" fill="#e8f8e8" fill-opacity="0.8"/><rect x="268.00" y="74.35" width="1.10" height="0.75" fill="#e8f8e8" fill-opacity="0.8"/><rect x="269.50" y="74.35" width="1.10" height="0.75" fill="#e8f8e8" fill-opacity="0.8"/><rect x="271.00" y="74.35" width="1.10" height="0.75" fill="#e8f8e8" fill-opacity="0.8"/><rect x="272.50" y="74.35" width="1.10" height="0.75" fill="#e8f8e8" fill-opacity="0.8"/><rect x="274.00" y="74.35" width="1.10" height="0.75" fill="#e8f8e8" fill-opacity="0.8"/><rect x="275.50" y="74.35" width="1.10" height="0.75" fill="#e8f8e8" fill-opacity="0.8"/><rect x="277.00" y="74.35" width="1.10" height="0.75" fill="#e8f8e8" fill-opacity="0.8"/><rect x="278.50" y="74.35" width="1.10" height="0.75" fill="#e8f8e8" fill-opacity="0.8"/><rect x="280.00" y="74.35" width="1.10" height="0.75" fill="#e8f8e8" fill-opacity="0.8"/><rect x="281.50" y="74.35" width="1.10" height="0.75" fill="#e8f8e8" fill-opacity="0.8"/><rect x="283.00" y="74.35" width="1.10" height="0.75" fill="#e8f8e8" fill-opacity="0.8"/><rect x="284.50" y="74.35" width="1.10" height="0.75" fill="#e8f8e8" fill-opacity="0.8"/><rect x="286.00" y="74.35" width="1.10" height="0.75" fill="#e8f8e8" fill-opacity="0.8"/><rect x="287.50" y="74.35" width="1.10" height="0.75" fill="#e8f8e8" fill-opacity="0.8"/><rect x="289.00" y="74.35" width="1.10" height="0.75" fill="#e8f8e8" fill-opacity="0.8"/><rect x="290.50" y="74.35" width="1.10" height="0.75" fill="#e8f8e8" fill-opacity="0.8"/><rect x="292.00" y="74.35" width="1.10" height="0.75" fill="#e8f8e8" fill-opacity="0.8"/><rect x="293.50" y="74.35" width="1.10" height="0.75" fill="#e8f8e8" fill-opacity="0.8"/><rect x="295.00" y="74.35" width="1.10" height="0.75" fill="#e8f8e8" fill-opacity="0.8"/><rect x="296.50" y="74.35" width="1.10" height="0.75" fill="#e8f8e8" fill-opacity="0.8"/><rect x="298.00" y="74.35" width="1.10" height="0.75" fill="#e8f8e8" fill-opacity="0.8"/><rect x="299.50" y="74.35" width="1.10" height="0.75" fill="#e8f8e8" fill-opacity="0.8"/><rect x="301.00" y="74.35" width="1.10" height="0.75" fill="#e8f8e8" fill-opacity="0.8"/><rect x="302.50" y="74.35" width="1.10" height="0.75" fill="#e8f8e8" fill-opacity="0.8"/><rect x="304.00" y="74.35" width="1.10" height="0.75" fill="#e8f8e8" fill-opacity="0.8"/><rect x="305.50" y="74.35" width="1.10" height="0.75" fill="#e8f8e8" fill-opacity="0.8"/><rect x="307.00" y="74.35" width="1.10" height="0.75" fill="#e8f8e8" fill-opacity="0.8"/><rect x="308.50" y="74.35" width="1.10" height="0.75" fill="#e8f8e8" fill-opacity="0.8"/><rect x="310.00" y="74.35" width="1.10" height="0.75" fill="#e8f8e8" fill-opacity="0.8"/><rect x="311.50" y="74.35" width="1.10" height="0.75" fill="#e8f8e8" fill-opacity="0.8"/><rect x="313.00" y="74.35" width="1.10" height="0.75" fill="#e8f8e8" fill-opacity="0.8"/><rect x="314.50" y="74.35" width="1.10" height="0.75" fill="#e8f8e8" fill-opacity="0.8"/><rect x="316.00" y="74.35" width="1.10" height="0.75" fill="#e8f8e8" fill-opacity="0.8"/><rect x="317.50" y="74.35" width="1.10" height="0.75" fill="#e8f8e8" fill-opacity="0.8"/><rect x="319.00" y="74.35" width="1.10" height="0.75" fill="#e8f8e8" fill-opacity="0.8"/><rect x="320.50" y="74.35" width="1.10" height="0.75" fill="#e8f8e8" fill-opacity="0.8"/><rect x="322.00" y="74.35" width="1.10" height="0.75" fill="#e8f8e8" fill-opacity="0.8"/><rect x="323.50" y="74.35" width="1.10" height="0.75" fill="#e8f8e8" fill-opacity="0.8"/><rect x="325.00" y="74.35" width="1.10" height="0.75" fill="#e8f8e8" fill-opacity="0.8"/><rect x="326.50" y="74.35" width="1.10" height="0.75" fill="#e8f8e8" fill-opacity="0.8"/><rect x="328.00" y="74.35" width="1.10" height="0.75" fill="#e8f8e8" fill-opacity="0.8"/><rect x="329.50" y="74.35" width="1.10" height="0.75" fill="#e8f8e8" fill-opacity="0.8"/><rect x="331.00" y="74.35" width="1.10" height="0.75" fill="#e8f8e8" fill-opacity="0.8"/><rect x="332.50" y="74.35" width="1.10" height="0.75" fill="#e8f8e8" fill-opacity="0.8"/><rect x="334.00" y="74.35" width="1.10" height="0.75" fill="#e8f8e8" fill-opacity="0.8"/><rect x="335.50" y="74.35" width="1.10" height="0.75" fill="#e8f8e8" fill-opacity="0.8"/><rect x="337.00" y="74.35" width="1.10" height="0.75" fill="#e8f8e8" fill-opacity="0.8"/><rect x="338.50" y="74.35" width="1.10" height="0.75" fill="#e8f8e8" fill-opacity="0.8"/><rect x="340.00" y="74.35" width="1.10" height="0.75" fill="#e8f8e8" fill-opacity="0.8"/><rect x="341.50" y="74.35" width="1.10" height="0.75" fill="#e8f8e8" fill-opacity="0.8"/><rect x="343.00" y="74.35" width="1.10" height="0.75" fill="#e8f8e8" fill-opacity="0.8"/><rect x="344.50" y="74.35" width="1.10" height="0.75" fill="#e8f8e8" fill-opacity="0.8"/><rect x="346.00" y="74.35" width="1.10" height="0.75" fill="#e8f8e8" fill-opacity="0.8"/><rect x="347.50" y="74.35" width="1.10" height="0.75" fill="#e8f8e8" fill-opacity="0.8"/><rect x="349.00" y="74.35" width="1.10" height="0.75" fill="#e8f8e8" fill-opacity="0.8"/><rect x="350.50" y="74.35" width="1.10" height="0.75" fill="#e8f8e8" fill-opacity="0.8"/><rect x="352.00" y="74.35" width="1.10" height="0.75" fill="#e8f8e8" fill-opacity="0.8"/><rect x="353.50" y="74.35" width="1.10" height="0.75" fill="#e8f8e8" fill-opacity="0.8"/><rect x="355.00" y="74.35" width="1.10" height="0.75" fill="#e8f8e8" fill-opacity="0.8"/><rect x="356.50" y="74.35" width="1.10" height="0.75" fill="#e8f8e8" fill-opacity="0.8"/><rect x="358.00" y="74.35" width="1.10" height="0.75" fill="#e8f8e8" fill-opacity="0.8"/><rect x="359.50" y="74.35" width="1.10" height="0.75" fill="#e8f8e8" fill-opacity="0.8"/><rect x="361.00" y="74.35" width="1.10" height="0.75" fill="#e8f8e8" fill-opacity="0.8"/><rect x="362.50" y="74.35" width="1.10" height="0.75" fill="#e8f8e8" fill-opacity="0.8"/><rect x="364.00" y="74.35" width="1.10" height="0.75" fill="#e8f8e8" fill-opacity="0.8"/><rect x="365.50" y="74.35" width="1.10" height="0.75" fill="#e8f8e8" fill-opacity="0.8"/><rect x="367.00" y="74.35" width="1.10" height="0.75" fill="#e8f8e8" fill-opacity="0.8"/><rect x="368.50" y="74.35" width="1.10" height="0.75" fill="#e8f8e8" fill-opacity="0.8"/><rect x="370.00" y="74.35" width="1.10" height="0.75" fill="#e8f8e8" fill-opacity="0.8"/><rect x="371.50" y="74.35" width="1.10" height="0.75" fill="#e8f8e8" fill-opacity="0.8"/><rect x="373.00" y="74.35" width="1.10" height="0.75" fill="#e8f8e8" fill-opacity="0.8"/><rect x="374.50" y="74.35" width="1.10" height="0.75" fill="#e8f8e8" fill-opacity="0.8"/><rect x="376.00" y="74.35" width="1.10" height="0.75" fill="#e8f8e8" fill-opacity="0.8"/><rect x="377.50" y="74.35" width="1.10" height="0.75" fill="#e8f8e8" fill-opacity="0.8"/><rect x="379.00" y="74.35" width="1.10" height="0.75" fill="#e8f8e8" fill-opacity="0.8"/><rect x="380.50" y="74.35" width="1.10" height="0.75" fill="#e8f8e8" fill-opacity="0.8"/><rect x="382.00" y="74.35" width="1.10" height="0.75" fill="#e8f8e8" fill-opacity="0.8"/><rect x="383.50" y="74.35" width="1.10" height="0.75" fill="#e8f8e8" fill-opacity="0.8"/><rect x="385.00" y="74.35" width="1.10" height="0.75" fill="#e8f8e8" fill-opacity="0.8"/><rect x="386.50" y="74.35" width="1.10" height="0.75" fill="#e8f8e8" fill-opacity="0.8"/><rect x="388.00" y="74.35" width="1.10" height="0.75" fill="#e8f8e8" fill-opacity="0.8"/><rect x="389.50" y="74.35" width="1.10" height="0.75" fill="#e8f8e8" fill-opacity="0.8"/><rect x="391.00" y="74.35" width="1.10" height="0.75" fill="#e8f8e8" fill-opacity="0.8"/><rect x="392.50" y="74.35" width="1.10" height="0.75" fill="#e8f8e8" fill-opacity="0.8"/><rect x="394.00" y="74.35" width="1.10" height="0.75" fill="#e8f8e8" fill-opacity="0.8"/><rect x="395.50" y="74.35" width="1.10" height="0.75" fill="#e8f8e8" fill-opacity="0.8"/><rect x="397.00" y="74.35" width="1.10" height="0.75" fill="#e8f8e8" fill-opacity="0.8"/><rect x="398.50" y="74.35" width="1.10" height="0.75" fill="#e8f8e8" fill-opacity="0.8"/><rect x="403.00" y="74.35" width="1.10" height="0.75" fill="#e8f8e8" fill-opacity="0.8"/><rect x="404.50" y="74.35" width="1.10" height="0.75" fill="#e8f8e8" fill-opacity="0.8"/><rect x="406.00" y="74.35" width="1.10" height="0.75" fill="#e8f8e8" fill-opacity="0.8"/><rect x="407.50" y="74.35" width="1.10" height="0.75" fill="#e8f8e8" fill-opacity="0.8"/><rect x="409.00" y="74.35" width="1.10" height="0.75" fill="#e8f8e8" fill-opacity="0.8"/><rect x="410.50" y="74.35" width="1.10" height="0.75" fill="#e8f8e8" fill-opacity="0.8"/><rect x="412.00" y="74.35" width="1.10" height="0.75" fill="#e8f8e8" fill-opacity="0.8"/><rect x="413.50" y="74.35" width="1.10" height="0.75" fill="#e8f8e8" fill-opacity="0.8"/><rect x="415.00" y="74.35" width="1.10" height="0.75" fill="#e8f8e8" fill-opacity="0.8"/><rect x="416.50" y="74.35" width="1.10" height="0.75" fill="#e8f8e8" fill-opacity="0.8"/><rect x="418.00" y="74.35" width="1.10" height="0.75" fill="#e8f8e8" fill-opacity="0.8"/><rect x="419.50" y="74.35" width="1.10" height="0.75" fill="#e8f8e8" fill-opacity="0.8"/><rect x="421.00" y="74.35" width="1.10" height="0.75" fill="#e8f8e8" fill-opacity="0.8"/><rect x="422.50" y="74.35" width="1.10" height="0.75" fill="#e8f8e8" fill-opacity="0.8"/><rect x="424.00" y="74.35" width="1.10" height="0.75" fill="#e8f8e8" fill-opacity="0.8"/><rect x="425.50" y="74.35" width="1.10" height="0.75" fill="#e8f8e8" fill-opacity="0.8"/><rect x="427.00" y="74.35" width="1.10" height="0.75" fill="#e8f8e8" fill-opacity="0.8"/><rect x="428.50" y="74.35" width="1.10" height="0.75" fill="#e8f8e8" fill-opacity="0.8"/><rect x="430.00" y="74.35" width="1.10" height="0.75" fill="#e8f8e8" fill-opacity="0.8"/><rect x="431.50" y="74.35" width="1.10" height="0.75" fill="#e8f8e8" fill-opacity="0.8"/><rect x="433.00" y="74.35" width="1.10" height="0.75" fill="#e8f8e8" fill-opacity="0.8"/><rect x="434.50" y="74.35" width="1.10" height="0.75" fill="#e8f8e8" fill-opacity="0.8"/><rect x="436.00" y="74.35" width="1.10" height="0.75" fill="#e8f8e8" fill-opacity="0.8"/><rect x="437.50" y="74.35" width="1.10" height="0.75" fill="#e8f8e8" fill-opacity="0.8"/><rect x="439.00" y="74.35" width="1.10" height="0.75" fill="#e8f8e8" fill-opacity="0.8"/><rect x="440.50" y="74.35" width="1.10" height="0.75" fill="#e8f8e8" fill-opacity="0.8"/><rect x="442.00" y="74.35" width="1.10" height="0.75" fill="#e8f8e8" fill-opacity="0.8"/><rect x="443.50" y="74.35" width="1.10" height="0.75" fill="#e8f8e8" fill-opacity="0.8"/><rect x="445.00" y="74.35" width="1.10" height="0.75" fill="#e8f8e8" fill-opacity="0.8"/><rect x="446.50" y="74.35" width="1.10" height="0.75" fill="#e8f8e8" fill-opacity="0.8"/><rect x="448.00" y="74.35" width="1.10" height="0.75" fill="#e8f8e8" fill-opacity="0.8"/><rect x="449.50" y="74.35" width="1.10" height="0.75" fill="#e8f8e8" fill-opacity="0.8"/><rect x="451.00" y="74.35" width="1.10" height="0.75" fill="#e8f8e8" fill-opacity="0.8"/><rect x="452.50" y="74.35" width="1.10" height="0.75" fill="#e8f8e8" fill-opacity="0.8"/><rect x="454.00" y="74.35" width="1.10" height="0.75" fill="#e8f8e8" fill-opacity="0.8"/><rect x="455.50" y="74.35" width="1.10" height="0.75" fill="#e8f8e8" fill-opacity="0.8"/><rect x="457.00" y="74.35" width="1.10" height="0.75" fill="#e8f8e8" fill-opacity="0.8"/><rect x="458.50" y="74.35" width="1.10" height="0.75" fill="#e8f8e8" fill-opacity="0.8"/><rect x="460.00" y="74.35" width="1.10" height="0.75" fill="#e8f8e8" fill-opacity="0.8"/><rect x="461.50" y="74.35" width="1.10" height="0.75" fill="#e8f8e8" fill-opacity="0.8"/><rect x="463.00" y="74.35" width="1.10" height="0.75" fill="#e8f8e8" fill-opacity="0.8"/><rect x="464.50" y="74.35" width="1.10" height="0.75" fill="#e8f8e8" fill-opacity="0.8"/><rect x="466.00" y="74.35" width="1.10" height="0.75" fill="#e8f8e8" fill-opacity="0.8"/><rect x="467.50" y="74.35" width="1.10" height="0.75" fill="#e8f8e8" fill-opacity="0.8"/><rect x="469.00" y="74.35" width="1.10" height="0.75" fill="#e8f8e8" fill-opacity="0.8"/><rect x="470.50" y="74.35" width="1.10" height="0.75" fill="#e8f8e8" fill-opacity="0.8"/><rect x="472.00" y="74.35" width="1.10" height="0.75" fill="#e8f8e8" fill-opacity="0.8"/><rect x="473.50" y="74.35" width="1.10" height="0.75" fill="#e8f8e8" fill-opacity="0.8"/><rect x="475.00" y="74.35" width="1.10" height="0.75" fill="#e8f8e8" fill-opacity="0.8"/><rect x="476.50" y="74.35" width="1.10" height="0.75" fill="#e8f8e8" fill-opacity="0.8"/><rect x="478.00" y="74.35" width="1.10" height="0.75" fill="#e8f8e8" fill-opacity="0.8"/><rect x="479.50" y="74.35" width="1.10" height="0.75" fill="#e8f8e8" fill-opacity="0.8"/><rect x="481.00" y="74.35" width="1.10" height="0.75" fill="#e8f8e8" fill-opacity="0.8"/><rect x="482.50" y="74.35" width="1.10" height="0.75" fill="#e8f8e8" fill-opacity="0.8"/><rect x="484.00" y="74.35" width="1.10" height="0.75" fill="#e8f8e8" fill-opacity="0.8"/><rect x="485.50" y="74.35" width="1.10" height="0.75" fill="#e8f8e8" fill-opacity="0.8"/><rect x="487.00" y="74.35" width="1.10" height="0.75" fill="#e8f8e8" fill-opacity="0.8"/><rect x="488.50" y="74.35" width="1.10" height="0.75" fill="#e8f8e8" fill-opacity="0.8"/><rect x="490.00" y="74.35" width="1.10" height="0.75" fill="#e8f8e8" fill-opacity="0.8"/><rect x="491.50" y="74.35" width="1.10" height="0.75" fill="#e8f8e8" fill-opacity="0.8"/><rect x="493.00" y="74.35" width="1.10" height="0.75" fill="#e8f8e8" fill-opacity="0.8"/><rect x="494.50" y="74.35" width="1.10" height="0.75" fill="#e8f8e8" fill-opacity="0.8"/><rect x="496.00" y="74.35" width="1.10" height="0.75" fill="#e8f8e8" fill-opacity="0.8"/><rect x="497.50" y="74.35" width="1.10" height="0.75" fill="#e8f8e8" fill-opacity="0.8"/><rect x="499.00" y="74.35" width="1.10" height="0.75" fill="#e8f8e8" fill-opacity="0.8"/><rect x="500.50" y="74.35" width="1.10" height="0.75" fill="#e8f8e8" fill-opacity="0.8"/><rect x="502.00" y="74.35" width="1.10" height="0.75" fill="#e8f8e8" fill-opacity="0.8"/><rect x="503.50" y="74.35" width="1.10" height="0.75" fill="#e8f8e8" fill-opacity="0.8"/><rect x="505.00" y="74.35" width="1.10" height="0.75" fill="#e8f8e8" fill-opacity="0.8"/><rect x="506.50" y="74.35" width="1.10" height="0.75" fill="#e8f8e8" fill-opacity="0.8"/><rect x="508.00" y="74.35" width="1.10" height="0.75" fill="#e8f8e8" fill-opacity="0.8"/><rect x="509.50" y="74.35" width="1.10" height="0.75" fill="#e8f8e8" fill-opacity="0.8"/><rect x="511.00" y="74.35" width="1.10" height="0.75" fill="#e8f8e8" fill-opacity="0.8"/><rect x="512.50" y="74.35" width="1.10" height="0.75" fill="#e8f8e8" fill-opacity="0.8"/><rect x="514.00" y="74.35" width="1.10" height="0.75" fill="#e8f8e8" fill-opacity="0.8"/><rect x="515.50" y="74.35" width="1.10" height="0.75" fill="#e8f8e8" fill-opacity="0.8"/><rect x="517.00" y="74.35" width="1.10" height="0.75" fill="#e8f8e8" fill-opacity="0.8"/><rect x="518.50" y="74.35" width="1.10" height="0.75" fill="#e8f8e8" fill-opacity="0.8"/><rect x="520.00" y="74.35" width="1.10" height="0.75" fill="#e8f8e8" fill-opacity="0.8"/><rect x="521.50" y="74.35" width="1.10" height="0.75" fill="#e8f8e8" fill-opacity="0.8"/><rect x="523.00" y="74.35" width="1.10" height="0.75" fill="#e8f8e8" fill-opacity="0.8"/><rect x="524.50" y="74.35" width="1.10" height="0.75" fill="#e8f8e8" fill-opacity="0.8"/><rect x="526.00" y="74.35" width="1.10" height="0.75" fill="#e8f8e8" fill-opacity="0.8"/><rect x="527.50" y="74.35" width="1.10" height="0.75" fill="#e8f8e8" fill-opacity="0.8"/><rect x="529.00" y="74.35" width="1.10" height="0.75" fill="#e8f8e8" fill-opacity="0.8"/><rect x="530.50" y="74.35" width="1.10" height="0.75" fill="#e8f8e8" fill-opacity="0.8"/><rect x="532.00" y="74.35" width="1.10" height="0.75" fill="#e8f8e8" fill-opacity="0.8"/><rect x="533.50" y="74.35" width="1.10" height="0.75" fill="#e8f8e8" fill-opacity="0.8"/><rect x="535.00" y="74.35" width="1.10" height="0.75" fill="#e8f8e8" fill-opacity="0.8"/><rect x="536.50" y="74.35" width="1.10" height="0.75" fill="#e8f8e8" fill-opacity="0.8"/><rect x="538.00" y="74.35" width="1.10" height="0.75" fill="#e8f8e8" fill-opacity="0.8"/><rect x="539.50" y="74.35" width="1.10" height="0.75" fill="#e8f8e8" fill-opacity="0.8"/><rect x="541.00" y="74.35" width="1.10" height="0.75" fill="#e8f8e8" fill-opacity="0.8"/><rect x="542.50" y="74.35" width="1.10" height="0.75" fill="#e8f8e8" fill-opacity="0.8"/><rect x="544.00" y="74.35" width="1.10" height="0.75" fill="#e8f8e8" fill-opacity="0.8"/></svg>
<div class="abs" style="left:99.50px;top:82.60px;width:444.00px;height:27.25px;background:#22a232;border-radius:0.7px"></div>
<div class="abs" style="left:99.50px;top:82.80px;width:444.00px;height:5.30px;background:#c8f7c8;"></div>
<div class="t" style="left:101.00px;top:85.10px;font-size:3.7px;color:#4a8050;">Snare</div>
<svg class="abs" style="left:0;top:0" width="768" height="432"><rect x="103.00" y="103.40" width="1.00" height="0.75" fill="#e8f8e8" fill-opacity="0.8"/><rect x="104.50" y="103.40" width="1.00" height="0.75" fill="#e8f8e8" fill-opacity="0.8"/><rect x="106.00" y="103.40" width="1.00" height="0.75" fill="#e8f8e8" fill-opacity="0.8"/><rect x="107.50" y="103.40" width="1.00" height="0.75" fill="#e8f8e8" fill-opacity="0.8"/><rect x="109.00" y="103.40" width="1.00" height="0.75" fill="#e8f8e8" fill-opacity="0.8"/><rect x="110.50" y="103.40" width="1.00" height="0.75" fill="#e8f8e8" fill-opacity="0.8"/><rect x="112.00" y="103.40" width="1.00" height="0.75" fill="#e8f8e8" fill-opacity="0.8"/><rect x="113.50" y="103.40" width="1.00" height="0.75" fill="#e8f8e8" fill-opacity="0.8"/><rect x="115.00" y="103.40" width="1.00" height="0.75" fill="#e8f8e8" fill-opacity="0.8"/><rect x="116.50" y="103.40" width="1.00" height="0.75" fill="#e8f8e8" fill-opacity="0.8"/><rect x="118.00" y="103.40" width="1.00" height="0.75" fill="#e8f8e8" fill-opacity="0.8"/><rect x="119.50" y="103.40" width="1.00" height="0.75" fill="#e8f8e8" fill-opacity="0.8"/><rect x="121.00" y="103.40" width="1.00" height="0.75" fill="#e8f8e8" fill-opacity="0.8"/><rect x="122.50" y="103.40" width="1.00" height="0.75" fill="#e8f8e8" fill-opacity="0.8"/><rect x="124.00" y="103.40" width="1.00" height="0.75" fill="#e8f8e8" fill-opacity="0.8"/><rect x="125.50" y="103.40" width="1.00" height="0.75" fill="#e8f8e8" fill-opacity="0.8"/><rect x="127.00" y="103.40" width="1.00" height="0.75" fill="#e8f8e8" fill-opacity="0.8"/><rect x="128.50" y="103.40" width="1.00" height="0.75" fill="#e8f8e8" fill-opacity="0.8"/><rect x="130.00" y="103.40" width="1.00" height="0.75" fill="#e8f8e8" fill-opacity="0.8"/><rect x="158.50" y="103.40" width="1.00" height="0.75" fill="#e8f8e8" fill-opacity="0.8"/><rect x="160.00" y="103.40" width="1.00" height="0.75" fill="#e8f8e8" fill-opacity="0.8"/><rect x="161.50" y="103.40" width="1.00" height="0.75" fill="#e8f8e8" fill-opacity="0.8"/><rect x="163.00" y="103.40" width="1.00" height="0.75" fill="#e8f8e8" fill-opacity="0.8"/><rect x="164.50" y="103.40" width="1.00" height="0.75" fill="#e8f8e8" fill-opacity="0.8"/><rect x="166.00" y="103.40" width="1.00" height="0.75" fill="#e8f8e8" fill-opacity="0.8"/><rect x="167.50" y="103.40" width="1.00" height="0.75" fill="#e8f8e8" fill-opacity="0.8"/><rect x="169.00" y="103.40" width="1.00" height="0.75" fill="#e8f8e8" fill-opacity="0.8"/><rect x="170.50" y="103.40" width="1.00" height="0.75" fill="#e8f8e8" fill-opacity="0.8"/><rect x="172.00" y="103.40" width="1.00" height="0.75" fill="#e8f8e8" fill-opacity="0.8"/><rect x="173.50" y="103.40" width="1.00" height="0.75" fill="#e8f8e8" fill-opacity="0.8"/><rect x="175.00" y="103.40" width="1.00" height="0.75" fill="#e8f8e8" fill-opacity="0.8"/><rect x="176.50" y="103.40" width="1.00" height="0.75" fill="#e8f8e8" fill-opacity="0.8"/><rect x="178.00" y="103.40" width="1.00" height="0.75" fill="#e8f8e8" fill-opacity="0.8"/><rect x="179.50" y="103.40" width="1.00" height="0.75" fill="#e8f8e8" fill-opacity="0.8"/><rect x="181.00" y="103.40" width="1.00" height="0.75" fill="#e8f8e8" fill-opacity="0.8"/><rect x="182.50" y="103.40" width="1.00" height="0.75" fill="#e8f8e8" fill-opacity="0.8"/><rect x="184.00" y="103.40" width="1.00" height="0.75" fill="#e8f8e8" fill-opacity="0.8"/><rect x="185.50" y="103.40" width="1.00" height="0.75" fill="#e8f8e8" fill-opacity="0.8"/><rect x="187.00" y="103.40" width="1.00" height="0.75" fill="#e8f8e8" fill-opacity="0.8"/><rect x="188.50" y="103.40" width="1.00" height="0.75" fill="#e8f8e8" fill-opacity="0.8"/><rect x="190.00" y="103.40" width="1.00" height="0.75" fill="#e8f8e8" fill-opacity="0.8"/><rect x="191.50" y="103.40" width="1.00" height="0.75" fill="#e8f8e8" fill-opacity="0.8"/><rect x="193.00" y="103.40" width="1.00" height="0.75" fill="#e8f8e8" fill-opacity="0.8"/><rect x="194.50" y="103.40" width="1.00" height="0.75" fill="#e8f8e8" fill-opacity="0.8"/><rect x="196.00" y="103.40" width="1.00" height="0.75" fill="#e8f8e8" fill-opacity="0.8"/><rect x="197.50" y="103.40" width="1.00" height="0.75" fill="#e8f8e8" fill-opacity="0.8"/><rect x="199.00" y="103.40" width="1.00" height="0.75" fill="#e8f8e8" fill-opacity="0.8"/><rect x="200.50" y="103.40" width="1.00" height="0.75" fill="#e8f8e8" fill-opacity="0.8"/><rect x="202.00" y="103.40" width="1.00" height="0.75" fill="#e8f8e8" fill-opacity="0.8"/><rect x="203.50" y="103.40" width="1.00" height="0.75" fill="#e8f8e8" fill-opacity="0.8"/><rect x="227.50" y="103.40" width="1.00" height="0.75" fill="#e8f8e8" fill-opacity="0.8"/><rect x="241.00" y="103.40" width="1.00" height="0.75" fill="#e8f8e8" fill-opacity="0.8"/><rect x="242.50" y="103.40" width="1.00" height="0.75" fill="#e8f8e8" fill-opacity="0.8"/><rect x="244.00" y="103.40" width="1.00" height="0.75" fill="#e8f8e8" fill-opacity="0.8"/><rect x="245.50" y="103.40" width="1.00" height="0.75" fill="#e8f8e8" fill-opacity="0.8"/><rect x="247.00" y="103.40" width="1.00" height="0.75" fill="#e8f8e8" fill-opacity="0.8"/><rect x="248.50" y="103.40" width="1.00" height="0.75" fill="#e8f8e8" fill-opacity="0.8"/><rect x="250.00" y="103.40" width="1.00" height="0.75" fill="#e8f8e8" fill-opacity="0.8"/><rect x="251.50" y="103.40" width="1.00" height="0.75" fill="#e8f8e8" fill-opacity="0.8"/><rect x="253.00" y="103.40" width="1.00" height="0.75" fill="#e8f8e8" fill-opacity="0.8"/><rect x="254.50" y="103.40" width="1.00" height="0.75" fill="#e8f8e8" fill-opacity="0.8"/><rect x="256.00" y="103.40" width="1.00" height="0.75" fill="#e8f8e8" fill-opacity="0.8"/><rect x="257.50" y="103.40" width="1.00" height="0.75" fill="#e8f8e8" fill-opacity="0.8"/><rect x="259.00" y="103.40" width="1.00" height="0.75" fill="#e8f8e8" fill-opacity="0.8"/><rect x="260.50" y="103.40" width="1.00" height="0.75" fill="#e8f8e8" fill-opacity="0.8"/><rect x="262.00" y="103.40" width="1.00" height="0.75" fill="#e8f8e8" fill-opacity="0.8"/><rect x="263.50" y="103.40" width="1.00" height="0.75" fill="#e8f8e8" fill-opacity="0.8"/><rect x="265.00" y="103.40" width="1.00" height="0.75" fill="#e8f8e8" fill-opacity="0.8"/><rect x="266.50" y="103.40" width="1.00" height="0.75" fill="#e8f8e8" fill-opacity="0.8"/><rect x="268.00" y="103.40" width="1.00" height="0.75" fill="#e8f8e8" fill-opacity="0.8"/><rect x="269.50" y="103.40" width="1.00" height="0.75" fill="#e8f8e8" fill-opacity="0.8"/><rect x="271.00" y="103.40" width="1.00" height="0.75" fill="#e8f8e8" fill-opacity="0.8"/><rect x="272.50" y="103.40" width="1.00" height="0.75" fill="#e8f8e8" fill-opacity="0.8"/><rect x="274.00" y="103.40" width="1.00" height="0.75" fill="#e8f8e8" fill-opacity="0.8"/><rect x="275.50" y="103.40" width="1.00" height="0.75" fill="#e8f8e8" fill-opacity="0.8"/><rect x="277.00" y="103.40" width="1.00" height="0.75" fill="#e8f8e8" fill-opacity="0.8"/><rect x="278.50" y="103.40" width="1.00" height="0.75" fill="#e8f8e8" fill-opacity="0.8"/><rect x="280.00" y="103.40" width="1.00" height="0.75" fill="#e8f8e8" fill-opacity="0.8"/><rect x="281.50" y="103.40" width="1.00" height="0.75" fill="#e8f8e8" fill-opacity="0.8"/><rect x="283.00" y="103.40" width="1.00" height="0.75" fill="#e8f8e8" fill-opacity="0.8"/><rect x="284.50" y="103.40" width="1.00" height="0.75" fill="#e8f8e8" fill-opacity="0.8"/><rect x="286.00" y="103.40" width="1.00" height="0.75" fill="#e8f8e8" fill-opacity="0.8"/><rect x="287.50" y="103.40" width="1.00" height="0.75" fill="#e8f8e8" fill-opacity="0.8"/><rect x="289.00" y="103.40" width="1.00" height="0.75" fill="#e8f8e8" fill-opacity="0.8"/><rect x="290.50" y="103.40" width="1.00" height="0.75" fill="#e8f8e8" fill-opacity="0.8"/><rect x="292.00" y="103.40" width="1.00" height="0.75" fill="#e8f8e8" fill-opacity="0.8"/><rect x="293.50" y="103.40" width="1.00" height="0.75" fill="#e8f8e8" fill-opacity="0.8"/><rect x="295.00" y="103.40" width="1.00" height="0.75" fill="#e8f8e8" fill-opacity="0.8"/><rect x="296.50" y="103.40" width="1.00" height="0.75" fill="#e8f8e8" fill-opacity="0.8"/><rect x="298.00" y="103.40" width="1.00" height="0.75" fill="#e8f8e8" fill-opacity="0.8"/><rect x="299.50" y="103.40" width="1.00" height="0.75" fill="#e8f8e8" fill-opacity="0.8"/><rect x="314.50" y="103.40" width="1.00" height="0.75" fill="#e8f8e8" fill-opacity="0.8"/><rect x="331.00" y="103.40" width="1.00" height="0.75" fill="#e8f8e8" fill-opacity="0.8"/><rect x="332.50" y="103.40" width="1.00" height="0.75" fill="#e8f8e8" fill-opacity="0.8"/><rect x="334.00" y="103.40" width="1.00" height="0.75" fill="#e8f8e8" fill-opacity="0.8"/><rect x="335.50" y="103.40" width="1.00" height="0.75" fill="#e8f8e8" fill-opacity="0.8"/><rect x="337.00" y="103.40" width="1.00" height="0.75" fill="#e8f8e8" fill-opacity="0.8"/><rect x="338.50" y="103.40" width="1.00" height="0.75" fill="#e8f8e8" fill-opacity="0.8"/><rect x="340.00" y="103.40" width="1.00" height="0.75" fill="#e8f8e8" fill-opacity="0.8"/><rect x="341.50" y="103.40" width="1.00" height="0.75" fill="#e8f8e8" fill-opacity="0.8"/><rect x="343.00" y="103.40" width="1.00" height="0.75" fill="#e8f8e8" fill-opacity="0.8"/><rect x="344.50" y="103.40" width="1.00" height="0.75" fill="#e8f8e8" fill-opacity="0.8"/><rect x="346.00" y="103.40" width="1.00" height="0.75" fill="#e8f8e8" fill-opacity="0.8"/><rect x="347.50" y="103.40" width="1.00" height="0.75" fill="#e8f8e8" fill-opacity="0.8"/><rect x="349.00" y="103.40" width="1.00" height="0.75" fill="#e8f8e8" fill-opacity="0.8"/><rect x="350.50" y="103.40" width="1.00" height="0.75" fill="#e8f8e8" fill-opacity="0.8"/><rect x="352.00" y="103.40" width="1.00" height="0.75" fill="#e8f8e8" fill-opacity="0.8"/><rect x="353.50" y="103.40" width="1.00" height="0.75" fill="#e8f8e8" fill-opacity="0.8"/><rect x="355.00" y="103.40" width="1.00" height="0.75" fill="#e8f8e8" fill-opacity="0.8"/><rect x="356.50" y="103.40" width="1.00" height="0.75" fill="#e8f8e8" fill-opacity="0.8"/><rect x="358.00" y="103.40" width="1.00" height="0.75" fill="#e8f8e8" fill-opacity="0.8"/><rect x="359.50" y="103.40" width="1.00" height="0.75" fill="#e8f8e8" fill-opacity="0.8"/><rect x="361.00" y="103.40" width="1.00" height="0.75" fill="#e8f8e8" fill-opacity="0.8"/><rect x="362.50" y="103.40" width="1.00" height="0.75" fill="#e8f8e8" fill-opacity="0.8"/><rect x="364.00" y="103.40" width="1.00" height="0.75" fill="#e8f8e8" fill-opacity="0.8"/><rect x="365.50" y="103.40" width="1.00" height="0.75" fill="#e8f8e8" fill-opacity="0.8"/><rect x="367.00" y="103.40" width="1.00" height="0.75" fill="#e8f8e8" fill-opacity="0.8"/><rect x="368.50" y="103.40" width="1.00" height="0.75" fill="#e8f8e8" fill-opacity="0.8"/><rect x="370.00" y="103.40" width="1.00" height="0.75" fill="#e8f8e8" fill-opacity="0.8"/><rect x="371.50" y="103.40" width="1.00" height="0.75" fill="#e8f8e8" fill-opacity="0.8"/><rect x="373.00" y="103.40" width="1.00" height="0.75" fill="#e8f8e8" fill-opacity="0.8"/><rect x="374.50" y="103.40" width="1.00" height="0.75" fill="#e8f8e8" fill-opacity="0.8"/><rect x="376.00" y="103.40" width="1.00" height="0.75" fill="#e8f8e8" fill-opacity="0.8"/><rect x="377.50" y="103.40" width="1.00" height="0.75" fill="#e8f8e8" fill-opacity="0.8"/><rect x="379.00" y="103.40" width="1.00" height="0.75" fill="#e8f8e8" fill-opacity="0.8"/><rect x="380.50" y="103.40" width="1.00" height="0.75" fill="#e8f8e8" fill-opacity="0.8"/><rect x="382.00" y="103.40" width="1.00" height="0.75" fill="#e8f8e8" fill-opacity="0.8"/><rect x="383.50" y="103.40" width="1.00" height="0.75" fill="#e8f8e8" fill-opacity="0.8"/><rect x="385.00" y="103.40" width="1.00" height="0.75" fill="#e8f8e8" fill-opacity="0.8"/><rect x="386.50" y="103.40" width="1.00" height="0.75" fill="#e8f8e8" fill-opacity="0.8"/><rect x="388.00" y="103.40" width="1.00" height="0.75" fill="#e8f8e8" fill-opacity="0.8"/><rect x="389.50" y="103.40" width="1.00" height="0.75" fill="#e8f8e8" fill-opacity="0.8"/><rect x="391.00" y="103.40" width="1.00" height="0.75" fill="#e8f8e8" fill-opacity="0.8"/><rect x="392.50" y="103.40" width="1.00" height="0.75" fill="#e8f8e8" fill-opacity="0.8"/><rect x="394.00" y="103.40" width="1.00" height="0.75" fill="#e8f8e8" fill-opacity="0.8"/><rect x="395.50" y="103.40" width="1.00" height="0.75" fill="#e8f8e8" fill-opacity="0.8"/><rect x="397.00" y="103.40" width="1.00" height="0.75" fill="#e8f8e8" fill-opacity="0.8"/><rect x="398.50" y="103.40" width="1.00" height="0.75" fill="#e8f8e8" fill-opacity="0.8"/><rect x="400.00" y="103.40" width="1.00" height="0.75" fill="#e8f8e8" fill-opacity="0.8"/><rect x="401.50" y="103.40" width="1.00" height="0.75" fill="#e8f8e8" fill-opacity="0.8"/><rect x="403.00" y="103.40" width="1.00" height="0.75" fill="#e8f8e8" fill-opacity="0.8"/><rect x="404.50" y="103.40" width="1.00" height="0.75" fill="#e8f8e8" fill-opacity="0.8"/><rect x="406.00" y="103.40" width="1.00" height="0.75" fill="#e8f8e8" fill-opacity="0.8"/><rect x="407.50" y="103.40" width="1.00" height="0.75" fill="#e8f8e8" fill-opacity="0.8"/><rect x="409.00" y="103.40" width="1.00" height="0.75" fill="#e8f8e8" fill-opacity="0.8"/><rect x="410.50" y="103.40" width="1.00" height="0.75" fill="#e8f8e8" fill-opacity="0.8"/><rect x="412.00" y="103.40" width="1.00" height="0.75" fill="#e8f8e8" fill-opacity="0.8"/><rect x="413.50" y="103.40" width="1.00" height="0.75" fill="#e8f8e8" fill-opacity="0.8"/><rect x="415.00" y="103.40" width="1.00" height="0.75" fill="#e8f8e8" fill-opacity="0.8"/><rect x="416.50" y="103.40" width="1.00" height="0.75" fill="#e8f8e8" fill-opacity="0.8"/><rect x="418.00" y="103.40" width="1.00" height="0.75" fill="#e8f8e8" fill-opacity="0.8"/><rect x="419.50" y="103.40" width="1.00" height="0.75" fill="#e8f8e8" fill-opacity="0.8"/><rect x="421.00" y="103.40" width="1.00" height="0.75" fill="#e8f8e8" fill-opacity="0.8"/><rect x="422.50" y="103.40" width="1.00" height="0.75" fill="#e8f8e8" fill-opacity="0.8"/><rect x="424.00" y="103.40" width="1.00" height="0.75" fill="#e8f8e8" fill-opacity="0.8"/><rect x="425.50" y="103.40" width="1.00" height="0.75" fill="#e8f8e8" fill-opacity="0.8"/><rect x="427.00" y="103.40" width="1.00" height="0.75" fill="#e8f8e8" fill-opacity="0.8"/><rect x="428.50" y="103.40" width="1.00" height="0.75" fill="#e8f8e8" fill-opacity="0.8"/><rect x="430.00" y="103.40" width="1.00" height="0.75" fill="#e8f8e8" fill-opacity="0.8"/><rect x="431.50" y="103.40" width="1.00" height="0.75" fill="#e8f8e8" fill-opacity="0.8"/><rect x="433.00" y="103.40" width="1.00" height="0.75" fill="#e8f8e8" fill-opacity="0.8"/><rect x="434.50" y="103.40" width="1.00" height="0.75" fill="#e8f8e8" fill-opacity="0.8"/><rect x="436.00" y="103.40" width="1.00" height="0.75" fill="#e8f8e8" fill-opacity="0.8"/><rect x="437.50" y="103.40" width="1.00" height="0.75" fill="#e8f8e8" fill-opacity="0.8"/><rect x="439.00" y="103.40" width="1.00" height="0.75" fill="#e8f8e8" fill-opacity="0.8"/><rect x="440.50" y="103.40" width="1.00" height="0.75" fill="#e8f8e8" fill-opacity="0.8"/><rect x="442.00" y="103.40" width="1.00" height="0.75" fill="#e8f8e8" fill-opacity="0.8"/><rect x="443.50" y="103.40" width="1.00" height="0.75" fill="#e8f8e8" fill-opacity="0.8"/><rect x="445.00" y="103.40" width="1.00" height="0.75" fill="#e8f8e8" fill-opacity="0.8"/><rect x="446.50" y="103.40" width="1.00" height="0.75" fill="#e8f8e8" fill-opacity="0.8"/><rect x="448.00" y="103.40" width="1.00" height="0.75" fill="#e8f8e8" fill-opacity="0.8"/><rect x="449.50" y="103.40" width="1.00" height="0.75" fill="#e8f8e8" fill-opacity="0.8"/><rect x="451.00" y="103.40" width="1.00" height="0.75" fill="#e8f8e8" fill-opacity="0.8"/><rect x="452.50" y="103.40" width="1.00" height="0.75" fill="#e8f8e8" fill-opacity="0.8"/><rect x="454.00" y="103.40" width="1.00" height="0.75" fill="#e8f8e8" fill-opacity="0.8"/><rect x="455.50" y="103.40" width="1.00" height="0.75" fill="#e8f8e8" fill-opacity="0.8"/><rect x="457.00" y="103.40" width="1.00" height="0.75" fill="#e8f8e8" fill-opacity="0.8"/><rect x="458.50" y="103.40" width="1.00" height="0.75" fill="#e8f8e8" fill-opacity="0.8"/><rect x="460.00" y="103.40" width="1.00" height="0.75" fill="#e8f8e8" fill-opacity="0.8"/><rect x="461.50" y="103.40" width="1.00" height="0.75" fill="#e8f8e8" fill-opacity="0.8"/><rect x="463.00" y="103.40" width="1.00" height="0.75" fill="#e8f8e8" fill-opacity="0.8"/><rect x="464.50" y="103.40" width="1.00" height="0.75" fill="#e8f8e8" fill-opacity="0.8"/><rect x="466.00" y="103.40" width="1.00" height="0.75" fill="#e8f8e8" fill-opacity="0.8"/><rect x="467.50" y="103.40" width="1.00" height="0.75" fill="#e8f8e8" fill-opacity="0.8"/><rect x="469.00" y="103.40" width="1.00" height="0.75" fill="#e8f8e8" fill-opacity="0.8"/><rect x="470.50" y="103.40" width="1.00" height="0.75" fill="#e8f8e8" fill-opacity="0.8"/><rect x="472.00" y="103.40" width="1.00" height="0.75" fill="#e8f8e8" fill-opacity="0.8"/><rect x="473.50" y="103.40" width="1.00" height="0.75" fill="#e8f8e8" fill-opacity="0.8"/><rect x="475.00" y="103.40" width="1.00" height="0.75" fill="#e8f8e8" fill-opacity="0.8"/><rect x="476.50" y="103.40" width="1.00" height="0.75" fill="#e8f8e8" fill-opacity="0.8"/><rect x="478.00" y="103.40" width="1.00" height="0.75" fill="#e8f8e8" fill-opacity="0.8"/><rect x="479.50" y="103.40" width="1.00" height="0.75" fill="#e8f8e8" fill-opacity="0.8"/><rect x="481.00" y="103.40" width="1.00" height="0.75" fill="#e8f8e8" fill-opacity="0.8"/><rect x="482.50" y="103.40" width="1.00" height="0.75" fill="#e8f8e8" fill-opacity="0.8"/><rect x="484.00" y="103.40" width="1.00" height="0.75" fill="#e8f8e8" fill-opacity="0.8"/><rect x="485.50" y="103.40" width="1.00" height="0.75" fill="#e8f8e8" fill-opacity="0.8"/><rect x="487.00" y="103.40" width="1.00" height="0.75" fill="#e8f8e8" fill-opacity="0.8"/><rect x="488.50" y="103.40" width="1.00" height="0.75" fill="#e8f8e8" fill-opacity="0.8"/><rect x="490.00" y="103.40" width="1.00" height="0.75" fill="#e8f8e8" fill-opacity="0.8"/><rect x="491.50" y="103.40" width="1.00" height="0.75" fill="#e8f8e8" fill-opacity="0.8"/><rect x="493.00" y="103.40" width="1.00" height="0.75" fill="#e8f8e8" fill-opacity="0.8"/><rect x="494.50" y="103.40" width="1.00" height="0.75" fill="#e8f8e8" fill-opacity="0.8"/><rect x="496.00" y="103.40" width="1.00" height="0.75" fill="#e8f8e8" fill-opacity="0.8"/><rect x="497.50" y="103.40" width="1.00" height="0.75" fill="#e8f8e8" fill-opacity="0.8"/><rect x="499.00" y="103.40" width="1.00" height="0.75" fill="#e8f8e8" fill-opacity="0.8"/><rect x="500.50" y="103.40" width="1.00" height="0.75" fill="#e8f8e8" fill-opacity="0.8"/><rect x="502.00" y="103.40" width="1.00" height="0.75" fill="#e8f8e8" fill-opacity="0.8"/><rect x="503.50" y="103.40" width="1.00" height="0.75" fill="#e8f8e8" fill-opacity="0.8"/><rect x="505.00" y="103.40" width="1.00" height="0.75" fill="#e8f8e8" fill-opacity="0.8"/><rect x="506.50" y="103.40" width="1.00" height="0.75" fill="#e8f8e8" fill-opacity="0.8"/><rect x="508.00" y="103.40" width="1.00" height="0.75" fill="#e8f8e8" fill-opacity="0.8"/><rect x="509.50" y="103.40" width="1.00" height="0.75" fill="#e8f8e8" fill-opacity="0.8"/><rect x="511.00" y="103.40" width="1.00" height="0.75" fill="#e8f8e8" fill-opacity="0.8"/><rect x="512.50" y="103.40" width="1.00" height="0.75" fill="#e8f8e8" fill-opacity="0.8"/><rect x="514.00" y="103.40" width="1.00" height="0.75" fill="#e8f8e8" fill-opacity="0.8"/><rect x="515.50" y="103.40" width="1.00" height="0.75" fill="#e8f8e8" fill-opacity="0.8"/><rect x="517.00" y="103.40" width="1.00" height="0.75" fill="#e8f8e8" fill-opacity="0.8"/><rect x="518.50" y="103.40" width="1.00" height="0.75" fill="#e8f8e8" fill-opacity="0.8"/><rect x="520.00" y="103.40" width="1.00" height="0.75" fill="#e8f8e8" fill-opacity="0.8"/><rect x="521.50" y="103.40" width="1.00" height="0.75" fill="#e8f8e8" fill-opacity="0.8"/><rect x="523.00" y="103.40" width="1.00" height="0.75" fill="#e8f8e8" fill-opacity="0.8"/><rect x="524.50" y="103.40" width="1.00" height="0.75" fill="#e8f8e8" fill-opacity="0.8"/><rect x="526.00" y="103.40" width="1.00" height="0.75" fill="#e8f8e8" fill-opacity="0.8"/><rect x="527.50" y="103.40" width="1.00" height="0.75" fill="#e8f8e8" fill-opacity="0.8"/><rect x="529.00" y="103.40" width="1.00" height="0.75" fill="#e8f8e8" fill-opacity="0.8"/><rect x="530.50" y="103.40" width="1.00" height="0.75" fill="#e8f8e8" fill-opacity="0.8"/><rect x="532.00" y="103.40" width="1.00" height="0.75" fill="#e8f8e8" fill-opacity="0.8"/><rect x="533.50" y="103.40" width="1.00" height="0.75" fill="#e8f8e8" fill-opacity="0.8"/><rect x="535.00" y="103.40" width="1.00" height="0.75" fill="#e8f8e8" fill-opacity="0.8"/><rect x="536.50" y="103.40" width="1.00" height="0.75" fill="#e8f8e8" fill-opacity="0.8"/><rect x="538.00" y="103.40" width="1.00" height="0.75" fill="#e8f8e8" fill-opacity="0.8"/><rect x="539.50" y="103.40" width="1.00" height="0.75" fill="#e8f8e8" fill-opacity="0.8"/><rect x="541.00" y="103.40" width="1.00" height="0.75" fill="#e8f8e8" fill-opacity="0.8"/></svg>
<div class="abs" style="left:103.20px;top:60.00px;width:0.50px;height:49.00px;background:rgba(0,60,0,0.15);"></div>
<div class="abs" style="left:108.20px;top:60.00px;width:0.50px;height:49.00px;background:rgba(0,60,0,0.15);"></div>
<svg class="abs" style="left:0;top:0" width="768" height="432"><rect x="324" y="59.4" width="2.5" height="21.6" fill="rgba(0,50,0,0.1)"/><rect x="327.5" y="59.4" width="1.0" height="21.6" fill="rgba(0,50,0,0.1)"/><rect x="330" y="59.4" width="2" height="21.6" fill="rgba(0,50,0,0.1)"/><rect x="333" y="59.4" width="2" height="21.6" fill="rgba(0,50,0,0.1)"/><rect x="336" y="59.4" width="1.5" height="21.6" fill="rgba(0,50,0,0.1)"/><rect x="339" y="59.4" width="3" height="21.6" fill="rgba(0,50,0,0.1)"/><rect x="343" y="59.4" width="1.5" height="21.6" fill="rgba(0,50,0,0.1)"/><rect x="346.5" y="59.4" width="4.5" height="21.6" fill="rgba(0,50,0,0.1)"/><rect x="353" y="59.4" width="3.5" height="21.6" fill="rgba(0,50,0,0.1)"/><rect x="357" y="59.4" width="1.8000000000000114" height="21.6" fill="rgba(0,50,0,0.1)"/></svg>
<div class="abs" style="left:99.50px;top:111.35px;width:447.50px;height:27.25px;background:#22a232;border-radius:0.7px"></div>
<div class="t" style="left:101.10px;top:113.45px;font-size:3.7px;color:#e0f4e0;">Hi Hat</div>
<svg class="abs" style="left:0;top:0" width="768" height="432"><rect x="103.10" y="130.65" width="13.00" height="0.75" fill="#e8f8e8" fill-opacity="0.8"/><rect x="118.75" y="130.65" width="11.25" height="0.75" fill="#e8f8e8" fill-opacity="0.8"/><rect x="159.40" y="130.65" width="5.70" height="0.75" fill="#e8f8e8" fill-opacity="0.8"/><rect x="169.00" y="130.65" width="0.80" height="0.75" fill="#e8f8e8" fill-opacity="0.8"/><rect x="174.20" y="130.65" width="10.40" height="0.75" fill="#e8f8e8" fill-opacity="0.8"/><rect x="188.00" y="130.65" width="11.00" height="0.75" fill="#e8f8e8" fill-opacity="0.8"/><rect x="202.00" y="130.65" width="11.30" height="0.75" fill="#e8f8e8" fill-opacity="0.8"/><rect x="242.70" y="130.65" width="5.70" height="0.75" fill="#e8f8e8" fill-opacity="0.8"/><rect x="252.90" y="130.65" width="0.80" height="0.75" fill="#e8f8e8" fill-opacity="0.8"/><rect x="285.00" y="130.65" width="6.40" height="0.75" fill="#e8f8e8" fill-opacity="0.8"/><rect x="294.00" y="130.65" width="6.00" height="0.75" fill="#e8f8e8" fill-opacity="0.8"/></svg>
<div class="abs" style="left:99.50px;top:140.10px;width:447.50px;height:27.25px;background:#22a232;border-radius:0.7px"></div>
<div class="t" style="left:101.10px;top:142.20px;font-size:3.7px;color:#e0f4e0;">Rack Toms</div>
<svg class="abs" style="left:0;top:0" width="768" height="432"><rect x="116.40" y="158.80" width="0.90" height="0.75" fill="#e8f8e8" fill-opacity="0.8"/><rect x="171.60" y="158.80" width="0.90" height="0.75" fill="#e8f8e8" fill-opacity="0.8"/><rect x="185.20" y="158.80" width="0.90" height="0.75" fill="#e8f8e8" fill-opacity="0.8"/><rect x="253.60" y="158.80" width="0.90" height="0.75" fill="#e8f8e8" fill-opacity="0.8"/><rect x="268.75" y="158.80" width="0.90" height="0.75" fill="#e8f8e8" fill-opacity="0.8"/><rect x="495.00" y="158.80" width="0.90" height="0.75" fill="#e8f8e8" fill-opacity="0.8"/><rect x="507.50" y="158.80" width="0.90" height="0.75" fill="#e8f8e8" fill-opacity="0.8"/><rect x="521.80" y="158.80" width="0.90" height="0.75" fill="#e8f8e8" fill-opacity="0.8"/><rect x="535.60" y="158.80" width="0.90" height="0.75" fill="#e8f8e8" fill-opacity="0.8"/><rect x="131.80" y="158.80" width="1.30" height="0.75" fill="#e8f8e8" fill-opacity="0.8"/><rect x="134.50" y="158.80" width="1.30" height="0.75" fill="#e8f8e8" fill-opacity="0.8"/><rect x="137.20" y="158.80" width="1.30" height="0.75" fill="#e8f8e8" fill-opacity="0.8"/><rect x="139.90" y="158.80" width="1.30" height="0.75" fill="#e8f8e8" fill-opacity="0.8"/><rect x="142.60" y="158.80" width="1.30" height="0.75" fill="#e8f8e8" fill-opacity="0.8"/><rect x="145.30" y="158.80" width="1.30" height="0.75" fill="#e8f8e8" fill-opacity="0.8"/><rect x="148.00" y="158.80" width="1.30" height="0.75" fill="#e8f8e8" fill-opacity="0.8"/><rect x="150.70" y="158.80" width="1.30" height="0.75" fill="#e8f8e8" fill-opacity="0.8"/><rect x="153.40" y="158.80" width="1.30" height="0.75" fill="#e8f8e8" fill-opacity="0.8"/><rect x="156.10" y="158.80" width="1.30" height="0.75" fill="#e8f8e8" fill-opacity="0.8"/><rect x="214.60" y="158.80" width="1.30" height="0.75" fill="#e8f8e8" fill-opacity="0.8"/><rect x="217.30" y="158.80" width="1.30" height="0.75" fill="#e8f8e8" fill-opacity="0.8"/><rect x="220.00" y="158.80" width="1.30" height="0.75" fill="#e8f8e8" fill-opacity="0.8"/><rect x="222.70" y="158.80" width="1.30" height="0.75" fill="#e8f8e8" fill-opacity="0.8"/><rect x="225.40" y="158.80" width="1.30" height="0.75" fill="#e8f8e8" fill-opacity="0.8"/><rect x="228.10" y="158.80" width="1.30" height="0.75" fill="#e8f8e8" fill-opacity="0.8"/><rect x="230.80" y="158.80" width="1.30" height="0.75" fill="#e8f8e8" fill-opacity="0.8"/><rect x="233.50" y="158.80" width="1.30" height="0.75" fill="#e8f8e8" fill-opacity="0.8"/><rect x="236.20" y="158.80" width="1.30" height="0.75" fill="#e8f8e8" fill-opacity="0.8"/><rect x="238.90" y="158.80" width="1.30" height="0.75" fill="#e8f8e8" fill-opacity="0.8"/></svg>
<div class="abs" style="left:99.50px;top:168.85px;width:447.50px;height:27.25px;background:#22a232;border-radius:0.7px"></div>
<div class="t" style="left:101.10px;top:170.95px;font-size:3.7px;color:#e0f4e0;">Floor Tom</div>
<svg class="abs" style="left:0;top:0" width="768" height="432"><rect x="116.40" y="188.25" width="0.90" height="0.75" fill="#e8f8e8" fill-opacity="0.8"/><rect x="171.60" y="188.25" width="0.90" height="0.75" fill="#e8f8e8" fill-opacity="0.8"/><rect x="186.00" y="188.25" width="0.90" height="0.75" fill="#e8f8e8" fill-opacity="0.8"/><rect x="255.50" y="188.25" width="0.90" height="0.75" fill="#e8f8e8" fill-opacity="0.8"/><rect x="269.50" y="188.25" width="0.90" height="0.75" fill="#e8f8e8" fill-opacity="0.8"/><rect x="397.80" y="188.25" width="0.90" height="0.75" fill="#e8f8e8" fill-opacity="0.8"/><rect x="411.70" y="188.25" width="0.90" height="0.75" fill="#e8f8e8" fill-opacity="0.8"/><rect x="425.60" y="188.25" width="0.90" height="0.75" fill="#e8f8e8" fill-opacity="0.8"/><rect x="495.00" y="188.25" width="0.90" height="0.75" fill="#e8f8e8" fill-opacity="0.8"/><rect x="507.50" y="188.25" width="0.90" height="0.75" fill="#e8f8e8" fill-opacity="0.8"/><rect x="521.80" y="188.25" width="0.90" height="0.75" fill="#e8f8e8" fill-opacity="0.8"/><rect x="535.60" y="188.25" width="0.90" height="0.75" fill="#e8f8e8" fill-opacity="0.8"/><rect x="131.25" y="188.25" width="26.55" height="0.75" fill="#e8f8e8" fill-opacity="0.8"/><rect x="214.60" y="188.25" width="26.40" height="0.75" fill="#e8f8e8" fill-opacity="0.8"/><rect x="360.00" y="188.25" width="10.70" height="0.75" fill="#e8f8e8" fill-opacity="0.8"/></svg>
<div class="abs" style="left:99.50px;top:197.60px;width:447.50px;height:27.25px;background:#22a232;border-radius:0.7px"></div>
<div class="t" style="left:101.10px;top:199.70px;font-size:3.7px;color:#e0f4e0;">Crash Cymbal</div>
<div class="t" style="left:407.50px;top:199.70px;font-size:3.7px;color:#e0f4e0;">Crash Cymbal</div>
<svg class="abs" style="left:0;top:0" width="768" height="432"><rect x="103.00" y="216.20" width="0.90" height="0.75" fill="#e8f8e8" fill-opacity="0.8"/><rect x="117.50" y="216.20" width="0.90" height="0.75" fill="#e8f8e8" fill-opacity="0.8"/><rect x="130.00" y="216.20" width="0.90" height="0.75" fill="#e8f8e8" fill-opacity="0.8"/><rect x="144.60" y="216.20" width="0.90" height="0.75" fill="#e8f8e8" fill-opacity="0.8"/><rect x="157.80" y="216.20" width="0.90" height="0.75" fill="#e8f8e8" fill-opacity="0.8"/><rect x="165.40" y="216.20" width="0.90" height="0.75" fill="#e8f8e8" fill-opacity="0.8"/><rect x="168.00" y="216.20" width="0.90" height="0.75" fill="#e8f8e8" fill-opacity="0.8"/><rect x="170.60" y="216.20" width="0.90" height="0.75" fill="#e8f8e8" fill-opacity="0.8"/><rect x="173.20" y="216.20" width="0.80" height="0.75" fill="#e8f8e8" fill-opacity="0.8"/><rect x="185.60" y="216.20" width="0.90" height="0.75" fill="#e8f8e8" fill-opacity="0.8"/><rect x="198.40" y="216.20" width="0.90" height="0.75" fill="#e8f8e8" fill-opacity="0.8"/><rect x="201.20" y="216.20" width="0.80" height="0.75" fill="#e8f8e8" fill-opacity="0.8"/><rect x="209.00" y="216.20" width="0.90" height="0.75" fill="#e8f8e8" fill-opacity="0.8"/><rect x="213.00" y="216.20" width="1.00" height="0.75" fill="#e8f8e8" fill-opacity="0.8"/><rect x="228.00" y="216.20" width="0.90" height="0.75" fill="#e8f8e8" fill-opacity="0.8"/><rect x="241.80" y="216.20" width="0.90" height="0.75" fill="#e8f8e8" fill-opacity="0.8"/><rect x="248.80" y="216.20" width="0.90" height="0.75" fill="#e8f8e8" fill-opacity="0.8"/><rect x="253.00" y="216.20" width="1.00" height="0.75" fill="#e8f8e8" fill-opacity="0.8"/><rect x="269.00" y="216.20" width="0.90" height="0.75" fill="#e8f8e8" fill-opacity="0.8"/><rect x="281.80" y="216.20" width="3.40" height="0.75" fill="#e8f8e8" fill-opacity="0.8"/><rect x="292.00" y="216.20" width="1.00" height="0.75" fill="#e8f8e8" fill-opacity="0.8"/><rect x="297.00" y="216.20" width="1.00" height="0.75" fill="#e8f8e8" fill-opacity="0.8"/><rect x="309.50" y="216.20" width="0.90" height="0.75" fill="#e8f8e8" fill-opacity="0.8"/><rect x="323.40" y="216.20" width="0.90" height="0.75" fill="#e8f8e8" fill-opacity="0.8"/><rect x="339.50" y="216.20" width="0.90" height="0.75" fill="#e8f8e8" fill-opacity="0.8"/><rect x="353.40" y="216.20" width="0.90" height="0.75" fill="#e8f8e8" fill-opacity="0.8"/><rect x="362.00" y="216.20" width="1.00" height="0.75" fill="#e8f8e8" fill-opacity="0.8"/><rect x="368.00" y="216.20" width="1.00" height="0.75" fill="#e8f8e8" fill-opacity="0.8"/><rect x="377.70" y="216.20" width="0.90" height="0.75" fill="#e8f8e8" fill-opacity="0.8"/><rect x="381.00" y="216.20" width="1.00" height="0.75" fill="#e8f8e8" fill-opacity="0.8"/><rect x="385.00" y="216.20" width="1.00" height="0.75" fill="#e8f8e8" fill-opacity="0.8"/><rect x="389.00" y="216.20" width="0.80" height="0.75" fill="#e8f8e8" fill-opacity="0.8"/><rect x="393.00" y="216.20" width="2.00" height="0.75" fill="#e8f8e8" fill-opacity="0.8"/><rect x="397.00" y="216.20" width="4.00" height="0.75" fill="#e8f8e8" fill-opacity="0.8"/><rect x="403.00" y="216.20" width="2.00" height="0.75" fill="#e8f8e8" fill-opacity="0.8"/><rect x="407.00" y="216.20" width="2.00" height="0.75" fill="#e8f8e8" fill-opacity="0.8"/><rect x="411.00" y="216.20" width="3.00" height="0.75" fill="#e8f8e8" fill-opacity="0.8"/><rect x="424.50" y="216.20" width="0.90" height="0.75" fill="#e8f8e8" fill-opacity="0.8"/><rect x="436.70" y="216.20" width="1.30" height="0.75" fill="#e8f8e8" fill-opacity="0.8"/><rect x="441.00" y="216.20" width="1.00" height="0.75" fill="#e8f8e8" fill-opacity="0.8"/><rect x="446.00" y="216.20" width="1.00" height="0.75" fill="#e8f8e8" fill-opacity="0.8"/><rect x="454.00" y="216.20" width="1.20" height="0.75" fill="#e8f8e8" fill-opacity="0.8"/><rect x="455.70" y="216.20" width="1.20" height="0.75" fill="#e8f8e8" fill-opacity="0.8"/><rect x="457.40" y="216.20" width="1.20" height="0.75" fill="#e8f8e8" fill-opacity="0.8"/><rect x="459.10" y="216.20" width="1.20" height="0.75" fill="#e8f8e8" fill-opacity="0.8"/><rect x="460.80" y="216.20" width="1.20" height="0.75" fill="#e8f8e8" fill-opacity="0.8"/><rect x="462.50" y="216.20" width="1.20" height="0.75" fill="#e8f8e8" fill-opacity="0.8"/><rect x="464.20" y="216.20" width="1.20" height="0.75" fill="#e8f8e8" fill-opacity="0.8"/><rect x="465.90" y="216.20" width="1.20" height="0.75" fill="#e8f8e8" fill-opacity="0.8"/><rect x="467.60" y="216.20" width="1.20" height="0.75" fill="#e8f8e8" fill-opacity="0.8"/><rect x="469.30" y="216.20" width="1.20" height="0.75" fill="#e8f8e8" fill-opacity="0.8"/><rect x="471.00" y="216.20" width="1.20" height="0.75" fill="#e8f8e8" fill-opacity="0.8"/><rect x="472.70" y="216.20" width="1.20" height="0.75" fill="#e8f8e8" fill-opacity="0.8"/><rect x="474.40" y="216.20" width="1.20" height="0.75" fill="#e8f8e8" fill-opacity="0.8"/><rect x="476.10" y="216.20" width="1.20" height="0.75" fill="#e8f8e8" fill-opacity="0.8"/><rect x="477.80" y="216.20" width="1.20" height="0.75" fill="#e8f8e8" fill-opacity="0.8"/><rect x="479.50" y="216.20" width="1.20" height="0.75" fill="#e8f8e8" fill-opacity="0.8"/><rect x="481.20" y="216.20" width="1.20" height="0.75" fill="#e8f8e8" fill-opacity="0.8"/><rect x="482.90" y="216.20" width="1.20" height="0.75" fill="#e8f8e8" fill-opacity="0.8"/><rect x="484.60" y="216.20" width="1.20" height="0.75" fill="#e8f8e8" fill-opacity="0.8"/><rect x="486.30" y="216.20" width="1.20" height="0.75" fill="#e8f8e8" fill-opacity="0.8"/><rect x="488.00" y="216.20" width="1.20" height="0.75" fill="#e8f8e8" fill-opacity="0.8"/><rect x="489.70" y="216.20" width="1.20" height="0.75" fill="#e8f8e8" fill-opacity="0.8"/><rect x="491.40" y="216.20" width="1.20" height="0.75" fill="#e8f8e8" fill-opacity="0.8"/><rect x="493.10" y="216.20" width="1.20" height="0.75" fill="#e8f8e8" fill-opacity="0.8"/><rect x="494.80" y="216.20" width="1.20" height="0.75" fill="#e8f8e8" fill-opacity="0.8"/><rect x="496.50" y="216.20" width="1.20" height="0.75" fill="#e8f8e8" fill-opacity="0.8"/><rect x="498.20" y="216.20" width="1.20" height="0.75" fill="#e8f8e8" fill-opacity="0.8"/><rect x="499.90" y="216.20" width="1.20" height="0.75" fill="#e8f8e8" fill-opacity="0.8"/><rect x="501.60" y="216.20" width="1.20" height="0.75" fill="#e8f8e8" fill-opacity="0.8"/><rect x="503.30" y="216.20" width="1.20" height="0.75" fill="#e8f8e8" fill-opacity="0.8"/><rect x="505.00" y="216.20" width="1.20" height="0.75" fill="#e8f8e8" fill-opacity="0.8"/><rect x="506.70" y="216.20" width="1.20" height="0.75" fill="#e8f8e8" fill-opacity="0.8"/><rect x="508.40" y="216.20" width="1.20" height="0.75" fill="#e8f8e8" fill-opacity="0.8"/><rect x="510.10" y="216.20" width="1.20" height="0.75" fill="#e8f8e8" fill-opacity="0.8"/><rect x="511.80" y="216.20" width="1.20" height="0.75" fill="#e8f8e8" fill-opacity="0.8"/><rect x="513.50" y="216.20" width="1.20" height="0.75" fill="#e8f8e8" fill-opacity="0.8"/><rect x="515.20" y="216.20" width="1.20" height="0.75" fill="#e8f8e8" fill-opacity="0.8"/><rect x="516.90" y="216.20" width="1.20" height="0.75" fill="#e8f8e8" fill-opacity="0.8"/><rect x="518.60" y="216.20" width="1.20" height="0.75" fill="#e8f8e8" fill-opacity="0.8"/><rect x="520.30" y="216.20" width="1.20" height="0.75" fill="#e8f8e8" fill-opacity="0.8"/><rect x="522.00" y="216.20" width="1.20" height="0.75" fill="#e8f8e8" fill-opacity="0.8"/><rect x="523.70" y="216.20" width="1.20" height="0.75" fill="#e8f8e8" fill-opacity="0.8"/><rect x="525.40" y="216.20" width="1.20" height="0.75" fill="#e8f8e8" fill-opacity="0.8"/><rect x="527.10" y="216.20" width="1.20" height="0.75" fill="#e8f8e8" fill-opacity="0.8"/><rect x="528.80" y="216.20" width="1.20" height="0.75" fill="#e8f8e8" fill-opacity="0.8"/><rect x="530.50" y="216.20" width="1.20" height="0.75" fill="#e8f8e8" fill-opacity="0.8"/><rect x="532.20" y="216.20" width="1.20" height="0.75" fill="#e8f8e8" fill-opacity="0.8"/><rect x="533.90" y="216.20" width="1.20" height="0.75" fill="#e8f8e8" fill-opacity="0.8"/><rect x="535.60" y="216.20" width="1.20" height="0.75" fill="#e8f8e8" fill-opacity="0.8"/><rect x="537.30" y="216.20" width="1.20" height="0.75" fill="#e8f8e8" fill-opacity="0.8"/><rect x="539.00" y="216.20" width="1.20" height="0.75" fill="#e8f8e8" fill-opacity="0.8"/><rect x="540.70" y="216.20" width="1.20" height="0.75" fill="#e8f8e8" fill-opacity="0.8"/><rect x="542.40" y="216.20" width="1.20" height="0.75" fill="#e8f8e8" fill-opacity="0.8"/></svg>
<div class="abs" style="left:99.50px;top:226.35px;width:447.50px;height:27.25px;background:#22a232;border-radius:0.7px"></div>
<div class="t" style="left:101.10px;top:228.45px;font-size:3.7px;color:#e0f4e0;">Ride Cymbal</div>
<div class="t" style="left:407.50px;top:228.45px;font-size:3.7px;color:#e0f4e0;">Ride Cymbal</div>
<svg class="abs" style="left:0;top:0" width="768" height="432"><rect x="102.50" y="244.95" width="0.80" height="0.75" fill="#e8f8e8" fill-opacity="0.8"/><rect x="257.50" y="244.95" width="9.30" height="0.75" fill="#e8f8e8" fill-opacity="0.8"/><rect x="271.40" y="244.95" width="12.10" height="0.75" fill="#e8f8e8" fill-opacity="0.8"/><rect x="545.00" y="244.95" width="0.80" height="0.75" fill="#e8f8e8" fill-opacity="0.8"/></svg>
<div class="abs" style="left:103.00px;top:255.85px;width:249.50px;height:26.85px;background:#4242b0;border-radius:0.6px;box-shadow:inset 0 0 0 0.35px rgba(20,20,60,0.7)"></div>
<div class="t" style="left:104.50px;top:257.95px;font-size:3.5px;color:#e6e6ff;">Modern Stack#02.3</div>
<div class="abs" style="left:352.50px;top:255.85px;width:45.50px;height:26.85px;background:#4242b0;border-radius:0.6px;box-shadow:inset 0 0 0 0.35px rgba(20,20,60,0.7)"></div>
<div class="t" style="left:354.00px;top:257.95px;font-size:3.5px;color:#e6e6ff;">Ruin Us separate drums_4</div>
<div class="abs" style="left:398.00px;top:255.85px;width:167.00px;height:26.85px;background:#4242b0;border-radius:0.6px;box-shadow:inset 0 0 0 0.35px rgba(20,20,60,0.7)"></div>
<div class="t" style="left:399.50px;top:257.95px;font-size:3.5px;color:#e6e6ff;">Modern Stack#02.2</div>
<svg class="abs" style="left:0;top:0" width="768" height="432"><path fill="#dcdcfc" d="M104 267.03h1v11.22h-1zM105 264.71h1v10.86h-1zM106 266.09h1v10.03h-1zM107 265.36h1v12.49h-1zM108 267.06h1v8.24h-1zM109 264.24h1v11.83h-1zM110 264.72h1v10.58h-1zM111 266.29h1v11.15h-1zM112 266.89h1v12.08h-1zM113 263.77h1v11.54h-1zM114 267.10h1v9.40h-1zM115 263.48h1v12.41h-1zM116 266.91h1v9.12h-1zM117 267.10h1v8.40h-1zM118 266.31h1v9.99h-1zM119 266.88h1v8.64h-1zM120 266.90h1v9.26h-1zM121 266.76h1v8.55h-1zM122 264.22h1v12.35h-1zM123 265.41h1v10.03h-1zM124 263.06h1v15.27h-1zM125 267.04h1v8.71h-1zM126 264.97h1v12.41h-1zM127 263.50h1v12.53h-1zM128 264.28h1v12.87h-1zM129 266.72h1v9.99h-1zM130 263.91h1v14.33h-1zM131 266.05h1v10.67h-1zM132 267.10h1v8.45h-1zM133 264.49h1v11.51h-1zM134 266.98h1v9.56h-1zM135 265.07h1v12.09h-1zM136 266.52h1v9.57h-1zM137 266.04h1v11.74h-1zM138 265.99h1v9.95h-1zM139 266.12h1v9.19h-1zM140 267.09h1v10.24h-1zM141 263.14h1v13.61h-1zM142 266.46h1v8.95h-1zM143 266.07h1v13.19h-1zM144 264.67h1v11.83h-1zM145 264.07h1v11.46h-1zM146 266.02h1v13.00h-1zM147 265.73h1v10.43h-1zM148 266.80h1v9.73h-1zM149 263.34h1v11.96h-1zM150 264.58h1v13.48h-1zM151 263.88h1v13.67h-1zM152 264.42h1v11.99h-1zM153 265.81h1v10.24h-1zM154 267.09h1v11.32h-1zM155 265.77h1v9.70h-1zM156 266.06h1v10.21h-1zM157 266.58h1v9.21h-1zM158 265.91h1v10.98h-1zM159 265.56h1v10.60h-1zM160 267.10h1v8.42h-1zM161 266.97h1v9.73h-1zM162 264.06h1v13.85h-1zM163 264.50h1v13.54h-1zM164 266.83h1v11.37h-1zM165 265.24h1v10.09h-1zM166 267.10h1v8.20h-1zM167 264.76h1v10.80h-1zM168 267.05h1v9.85h-1zM169 266.61h1v8.71h-1zM170 267.00h1v9.44h-1zM171 266.98h1v8.62h-1zM172 265.02h1v11.12h-1zM173 266.67h1v9.55h-1zM174 267.10h1v8.81h-1zM175 266.37h1v9.07h-1zM176 267.05h1v11.57h-1zM177 266.03h1v9.45h-1zM178 265.60h1v12.44h-1zM179 267.10h1v8.20h-1zM180 267.01h1v10.41h-1zM181 266.99h1v10.34h-1zM182 265.21h1v11.30h-1zM183 266.90h1v12.30h-1zM184 264.49h1v11.90h-1zM185 266.90h1v10.13h-1zM186 266.46h1v10.20h-1zM187 266.68h1v10.26h-1zM188 267.09h1v8.58h-1zM189 263.26h1v15.18h-1zM190 266.72h1v11.61h-1zM191 266.71h1v12.21h-1zM192 264.83h1v11.18h-1zM193 266.84h1v8.46h-1zM194 263.93h1v11.37h-1zM195 264.35h1v14.75h-1zM196 265.77h1v9.65h-1zM197 264.01h1v15.18h-1zM198 265.07h1v11.29h-1zM199 266.51h1v9.28h-1zM200 266.93h1v10.24h-1zM201 266.33h1v9.12h-1zM202 267.06h1v10.06h-1zM203 266.74h1v9.58h-1zM204 266.67h1v11.75h-1zM205 263.78h1v11.52h-1zM206 266.93h1v8.81h-1zM207 263.11h1v14.71h-1zM208 266.63h1v8.86h-1zM209 265.23h1v12.94h-1zM210 262.98h1v13.14h-1zM211 263.37h1v14.30h-1zM212 265.77h1v14.11h-1zM213 266.56h1v11.36h-1zM214 266.77h1v8.96h-1zM215 263.15h1v12.65h-1zM216 264.26h1v12.92h-1zM217 263.69h1v12.51h-1zM218 266.29h1v9.68h-1zM219 263.49h1v13.72h-1zM220 262.79h1v16.27h-1zM221 266.72h1v10.22h-1zM222 266.75h1v8.85h-1zM223 266.78h1v12.12h-1zM224 264.07h1v14.55h-1zM225 266.29h1v10.98h-1zM226 264.11h1v12.12h-1zM227 265.37h1v10.45h-1zM228 266.77h1v9.14h-1zM229 263.31h1v13.69h-1zM230 263.03h1v13.49h-1zM231 266.46h1v11.86h-1zM232 263.79h1v11.82h-1zM233 264.82h1v10.81h-1zM234 266.74h1v12.30h-1zM235 266.79h1v9.06h-1zM236 262.50h1v13.88h-1zM237 266.74h1v8.98h-1zM238 266.54h1v11.49h-1zM239 266.75h1v12.50h-1zM240 266.28h1v13.26h-1zM241 263.35h1v12.53h-1zM242 266.62h1v9.85h-1zM243 266.86h1v10.47h-1zM244 266.89h1v8.61h-1zM245 262.75h1v13.13h-1zM246 265.37h1v11.00h-1zM247 266.48h1v9.04h-1zM248 263.31h1v16.23h-1zM249 262.86h1v12.70h-1zM250 266.70h1v10.44h-1zM251 262.77h1v14.00h-1zM252 264.86h1v12.52h-1zM253 266.61h1v10.15h-1zM254 266.49h1v9.27h-1zM255 266.87h1v8.97h-1zM256 262.74h1v13.62h-1zM257 265.07h1v12.21h-1zM258 263.09h1v13.06h-1zM259 266.50h1v9.47h-1zM260 266.47h1v12.12h-1zM261 263.47h1v12.43h-1zM262 266.42h1v10.35h-1zM263 265.46h1v11.57h-1zM264 266.64h1v8.86h-1zM265 266.64h1v8.88h-1zM266 265.59h1v9.93h-1zM267 266.88h1v10.36h-1zM268 266.54h1v11.66h-1zM269 265.85h1v12.85h-1zM270 266.80h1v9.78h-1zM271 264.18h1v11.34h-1zM272 263.03h1v12.60h-1zM273 264.31h1v15.36h-1zM274 264.00h1v11.94h-1zM275 266.85h1v9.79h-1zM276 263.27h1v12.60h-1zM277 263.47h1v12.12h-1zM278 263.34h1v12.17h-1zM279 266.47h1v12.54h-1zM280 264.12h1v14.92h-1zM281 263.86h1v14.03h-1zM282 264.86h1v10.78h-1zM283 266.10h1v9.51h-1zM284 264.70h1v12.71h-1zM285 266.63h1v8.89h-1zM286 262.91h1v15.40h-1zM287 265.60h1v11.16h-1zM288 263.78h1v12.60h-1zM289 266.23h1v9.77h-1zM290 266.61h1v8.89h-1zM291 265.10h1v11.14h-1zM292 265.50h1v10.02h-1zM293 266.36h1v9.22h-1zM294 266.83h1v8.96h-1zM295 263.95h1v12.24h-1zM296 266.21h1v10.90h-1zM297 266.67h1v8.83h-1zM298 265.70h1v10.88h-1zM299 265.09h1v11.24h-1zM300 264.87h1v12.93h-1zM301 266.66h1v9.90h-1zM302 265.91h1v9.80h-1zM303 266.17h1v10.68h-1zM304 263.36h1v15.76h-1zM305 266.57h1v10.72h-1zM306 266.89h1v8.63h-1zM307 265.77h1v13.04h-1zM308 266.79h1v11.23h-1zM309 263.55h1v12.37h-1zM310 264.84h1v13.76h-1zM311 266.31h1v11.31h-1zM312 264.57h1v12.45h-1zM313 263.75h1v15.21h-1zM314 262.94h1v13.97h-1zM315 266.77h1v9.00h-1zM316 266.70h1v10.20h-1zM317 264.43h1v11.08h-1zM318 264.90h1v12.81h-1zM319 266.38h1v10.26h-1zM320 267.06h1v10.32h-1zM321 267.70h1v10.36h-1zM322 266.31h1v9.01h-1zM323 268.61h1v7.03h-1zM324 267.59h1v5.53h-1zM325 269.05h1v4.45h-1zM326 270.04h1v2.36h-1zM327 270.66h1v1.07h-1zM328 270.48h1v1.83h-1zM329 270.03h1v1.85h-1zM330 270.21h1v1.70h-1zM331 270.58h1v1.28h-1zM332 270.59h1v1.71h-1zM333 270.05h1v1.76h-1zM334 270.38h1v1.52h-1zM335 270.59h1v1.26h-1zM336 270.56h1v1.57h-1zM337 270.07h1v2.30h-1zM338 269.78h1v2.61h-1zM339 269.46h1v3.45h-1zM340 268.98h1v3.59h-1zM341 269.72h1v3.25h-1zM342 269.66h1v3.46h-1zM343 269.62h1v3.77h-1zM344 268.68h1v5.08h-1zM345 268.06h1v5.23h-1zM346 269.13h1v4.97h-1zM347 268.45h1v5.05h-1zM348 269.15h1v3.99h-1zM349 269.33h1v4.93h-1zM350 269.26h1v4.91h-1zM351 268.64h1v6.36h-1zM352 264.41h1v15.17h-1zM353 266.82h1v9.76h-1zM354 265.49h1v10.43h-1zM355 265.81h1v10.24h-1zM356 265.70h1v9.80h-1zM357 266.06h1v10.31h-1zM358 266.50h1v9.69h-1zM359 264.26h1v13.25h-1zM360 265.86h1v11.45h-1zM361 266.29h1v9.39h-1zM362 266.90h1v8.93h-1zM363 265.36h1v13.48h-1zM364 263.94h1v12.68h-1zM365 262.71h1v13.71h-1zM366 263.90h1v12.31h-1zM367 264.52h1v15.18h-1zM368 266.50h1v9.13h-1zM369 265.25h1v11.47h-1zM370 266.34h1v9.16h-1zM371 266.25h1v10.03h-1zM372 266.19h1v12.50h-1zM373 265.43h1v12.38h-1zM374 263.43h1v14.48h-1zM375 265.86h1v12.04h-1zM376 265.14h1v12.17h-1zM377 265.20h1v11.02h-1zM378 265.20h1v12.03h-1zM379 263.12h1v15.01h-1zM380 263.82h1v14.21h-1zM381 264.04h1v13.03h-1zM382 266.37h1v9.43h-1zM383 264.74h1v14.04h-1zM384 265.63h1v9.97h-1zM385 263.92h1v12.59h-1zM386 265.96h1v9.55h-1zM387 265.78h1v12.10h-1zM388 266.13h1v9.91h-1zM389 265.04h1v10.46h-1zM390 265.79h1v13.56h-1zM391 264.85h1v11.34h-1zM392 264.86h1v12.21h-1zM393 266.71h1v8.97h-1zM394 263.52h1v12.29h-1zM395 266.88h1v11.59h-1zM396 265.72h1v10.36h-1zM397 265.77h1v12.06h-1zM398 266.67h1v10.80h-1zM399 264.56h1v13.96h-1zM400 266.48h1v10.76h-1zM401 266.56h1v10.42h-1zM402 266.67h1v11.68h-1zM403 263.49h1v12.58h-1zM404 266.58h1v13.10h-1zM405 264.60h1v14.13h-1zM406 266.80h1v12.36h-1zM407 265.10h1v10.95h-1zM408 265.98h1v12.17h-1zM409 264.09h1v11.67h-1zM410 265.08h1v10.64h-1zM411 262.63h1v13.83h-1zM412 263.13h1v14.80h-1zM413 265.18h1v10.72h-1zM414 265.58h1v10.10h-1zM415 266.72h1v11.14h-1zM416 266.23h1v11.86h-1zM417 266.55h1v11.32h-1zM418 264.53h1v11.48h-1zM419 266.75h1v9.54h-1zM420 265.73h1v9.91h-1zM421 266.65h1v8.97h-1zM422 265.23h1v13.85h-1zM423 266.59h1v9.01h-1zM424 264.62h1v13.90h-1zM425 262.71h1v14.54h-1zM426 266.28h1v12.40h-1zM427 266.74h1v10.97h-1zM428 266.76h1v9.54h-1zM429 265.72h1v10.51h-1zM430 266.67h1v9.16h-1zM431 263.84h1v12.70h-1zM432 265.32h1v10.48h-1zM433 264.55h1v11.53h-1zM434 265.25h1v13.99h-1zM435 262.45h1v13.16h-1zM436 264.00h1v14.83h-1zM437 266.35h1v9.90h-1zM438 265.32h1v14.00h-1zM439 266.10h1v12.91h-1zM440 264.27h1v11.43h-1zM441 263.13h1v12.47h-1zM442 266.71h1v10.84h-1zM443 266.79h1v9.45h-1zM444 266.73h1v9.82h-1zM445 263.70h1v15.52h-1zM446 266.79h1v8.82h-1zM447 263.69h1v11.92h-1zM448 266.47h1v9.19h-1zM449 266.76h1v8.84h-1zM450 265.01h1v13.03h-1zM451 264.72h1v14.02h-1zM452 264.87h1v11.40h-1zM453 265.05h1v14.69h-1zM454 264.99h1v10.87h-1zM455 266.78h1v12.66h-1zM456 265.27h1v10.87h-1zM457 265.19h1v11.79h-1zM458 265.60h1v10.02h-1zM459 266.25h1v10.10h-1zM460 266.63h1v12.38h-1zM461 266.01h1v11.52h-1zM462 264.56h1v13.47h-1zM463 264.51h1v13.58h-1zM464 266.52h1v13.27h-1zM465 266.70h1v12.61h-1zM466 263.59h1v15.21h-1zM467 266.79h1v8.85h-1zM468 263.89h1v12.68h-1zM469 266.20h1v13.67h-1zM470 266.79h1v10.05h-1zM471 265.94h1v9.74h-1zM472 266.11h1v11.69h-1zM473 263.37h1v12.23h-1zM474 265.59h1v10.05h-1zM475 263.98h1v11.65h-1zM476 266.79h1v9.45h-1zM477 264.44h1v11.59h-1zM478 266.73h1v11.65h-1zM479 263.94h1v14.89h-1zM480 266.39h1v10.00h-1zM481 266.54h1v10.43h-1zM482 266.32h1v9.78h-1zM483 264.10h1v15.53h-1zM484 265.30h1v10.35h-1zM485 264.93h1v11.56h-1zM486 262.50h1v15.37h-1zM487 263.73h1v14.03h-1zM488 265.54h1v13.60h-1zM489 263.76h1v12.22h-1zM490 266.69h1v9.51h-1zM491 265.61h1v10.04h-1zM492 266.28h1v10.78h-1zM493 266.79h1v11.73h-1zM494 264.93h1v11.10h-1zM495 266.41h1v9.74h-1zM496 266.33h1v11.73h-1zM497 265.70h1v11.12h-1zM498 266.70h1v12.58h-1zM499 266.33h1v9.74h-1zM500 266.78h1v13.04h-1zM501 265.79h1v13.48h-1zM502 263.01h1v16.72h-1zM503 263.87h1v15.50h-1zM504 263.06h1v15.37h-1zM505 266.72h1v10.09h-1zM506 265.34h1v14.59h-1zM507 264.10h1v13.68h-1zM508 264.35h1v11.83h-1zM509 262.89h1v14.53h-1zM510 266.09h1v10.46h-1zM511 262.58h1v14.27h-1zM512 266.68h1v9.02h-1zM513 264.72h1v12.27h-1zM514 263.18h1v12.57h-1zM515 266.06h1v11.88h-1zM516 266.79h1v8.85h-1zM517 265.49h1v10.42h-1zM518 266.75h1v9.15h-1zM519 265.04h1v11.78h-1zM520 266.77h1v8.85h-1zM521 263.62h1v13.80h-1zM522 266.67h1v12.20h-1zM523 266.80h1v9.40h-1zM524 263.64h1v14.18h-1zM525 266.45h1v12.65h-1zM526 265.23h1v13.67h-1zM527 263.29h1v13.10h-1zM528 264.79h1v12.11h-1zM529 262.87h1v15.53h-1zM530 264.48h1v14.03h-1zM531 262.42h1v13.47h-1zM532 266.62h1v11.43h-1zM533 264.19h1v12.57h-1zM534 265.76h1v10.56h-1zM535 263.37h1v15.02h-1zM536 265.30h1v10.31h-1zM537 263.61h1v12.91h-1zM538 266.96h1v8.70h-1zM539 266.02h1v8.69h-1zM540 268.19h1v6.25h-1zM541 266.78h1v8.28h-1zM542 267.26h1v6.56h-1zM543 269.05h1v4.27h-1zM544 269.59h1v3.25h-1zM545 269.62h1v3.39h-1zM546 270.41h1v1.74h-1zM547 270.70h1v0.99h-1zM548 270.65h1v1.10h-1zM549 270.92h1v0.56h-1zM550 270.95h1v0.50h-1zM551 270.95h1v0.50h-1zM552 270.90h1v0.60h-1zM553 270.90h1v0.60h-1zM554 270.90h1v0.60h-1zM555 270.90h1v0.60h-1zM556 270.90h1v0.60h-1zM557 270.90h1v0.60h-1zM558 270.90h1v0.60h-1zM559 270.90h1v0.60h-1zM560 270.90h1v0.60h-1zM561 270.90h1v0.60h-1zM562 270.90h1v0.60h-1zM563 270.90h1v0.60h-1zM564 270.90h1v0.60h-1z"/></svg>
<div class="abs" style="left:99.75px;top:284.60px;width:225.95px;height:26.85px;background:#4242b0;border-radius:0.6px;box-shadow:inset 0 0 0 0.35px rgba(20,20,60,0.7)"></div>
<div class="t" style="left:101.25px;top:286.70px;font-size:3.5px;color:#e6e6ff;">Brit and Clean#02.3</div>
<div class="abs" style="left:325.70px;top:284.60px;width:44.30px;height:26.85px;background:#4242b0;border-radius:0.6px;box-shadow:inset 0 0 0 0.35px rgba(20,20,60,0.7)"></div>
<div class="t" style="left:327.20px;top:286.70px;font-size:3.5px;color:#e6e6ff;">Ruin Us separate drums_4</div>
<div class="abs" style="left:370.00px;top:284.60px;width:195.00px;height:26.85px;background:#4242b0;border-radius:0.6px;box-shadow:inset 0 0 0 0.35px rgba(20,20,60,0.7)"></div>
<div class="t" style="left:371.50px;top:286.70px;font-size:3.5px;color:#e6e6ff;">Brit and Clean#02.2</div>
<svg class="abs" style="left:0;top:0" width="768" height="432"><path fill="#dcdcfc" d="M101 294.80h1v11.35h-1zM102 297.97h1v5.08h-1zM103 295.55h1v9.35h-1zM104 296.42h1v6.93h-1zM105 296.70h1v7.60h-1zM106 296.80h1v6.30h-1zM107 297.33h1v6.22h-1zM108 296.16h1v10.30h-1zM109 294.84h1v9.21h-1zM110 297.29h1v5.98h-1zM111 297.98h1v5.05h-1zM112 297.23h1v6.15h-1zM113 297.48h1v8.31h-1zM114 297.02h1v7.10h-1zM115 297.79h1v5.24h-1zM116 297.61h1v5.47h-1zM117 297.07h1v9.42h-1zM118 296.40h1v6.74h-1zM119 295.20h1v10.03h-1zM120 296.10h1v9.78h-1zM121 295.95h1v9.24h-1zM122 297.54h1v8.82h-1zM123 294.76h1v8.35h-1zM124 296.00h1v8.80h-1zM125 297.24h1v6.76h-1zM126 297.14h1v8.85h-1zM127 297.11h1v8.32h-1zM128 297.54h1v8.19h-1zM129 295.16h1v8.60h-1zM130 296.25h1v10.63h-1zM131 295.43h1v8.97h-1zM132 297.36h1v6.51h-1zM133 295.57h1v7.98h-1zM134 294.21h1v9.52h-1zM135 294.19h1v9.64h-1zM136 293.84h1v11.63h-1zM137 296.53h1v8.00h-1zM138 295.84h1v9.01h-1zM139 297.17h1v6.45h-1zM140 296.50h1v10.49h-1zM141 295.98h1v7.48h-1zM142 294.83h1v10.75h-1zM143 294.22h1v9.37h-1zM144 295.31h1v8.15h-1zM145 295.83h1v7.91h-1zM146 297.35h1v9.20h-1zM147 297.51h1v7.03h-1zM148 294.60h1v9.08h-1zM149 297.38h1v9.21h-1zM150 296.83h1v8.69h-1zM151 297.56h1v6.42h-1zM152 297.44h1v7.84h-1zM153 297.53h1v9.61h-1zM154 297.56h1v8.04h-1zM155 297.56h1v6.15h-1zM156 294.87h1v8.67h-1zM157 297.42h1v7.96h-1zM158 296.96h1v6.49h-1zM159 293.58h1v9.95h-1zM160 297.13h1v7.28h-1zM161 295.38h1v11.03h-1zM162 297.08h1v7.31h-1zM163 297.14h1v7.66h-1zM164 294.42h1v11.98h-1zM165 293.36h1v13.14h-1zM166 293.69h1v12.48h-1zM167 296.10h1v7.99h-1zM168 295.11h1v9.21h-1zM169 297.09h1v7.70h-1zM170 293.59h1v10.35h-1zM171 295.55h1v9.02h-1zM172 295.91h1v8.05h-1zM173 292.87h1v11.31h-1zM174 295.44h1v9.24h-1zM175 297.14h1v8.17h-1zM176 297.05h1v6.83h-1zM177 297.13h1v6.85h-1zM178 297.10h1v8.63h-1zM179 295.94h1v12.41h-1zM180 293.09h1v15.36h-1zM181 296.89h1v7.89h-1zM182 296.85h1v8.63h-1zM183 295.33h1v11.50h-1zM184 294.80h1v9.36h-1zM185 296.31h1v8.84h-1zM186 297.14h1v6.73h-1zM187 296.36h1v7.55h-1zM188 294.71h1v9.42h-1zM189 297.09h1v6.92h-1zM190 296.89h1v7.19h-1zM191 295.88h1v8.98h-1zM192 296.69h1v9.08h-1zM193 296.93h1v10.74h-1zM194 292.84h1v13.49h-1zM195 296.27h1v8.81h-1zM196 295.57h1v8.30h-1zM197 296.33h1v8.81h-1zM198 296.99h1v6.91h-1zM199 294.15h1v10.33h-1zM200 295.89h1v11.91h-1zM201 295.41h1v8.84h-1zM202 292.65h1v11.85h-1zM203 297.14h1v8.90h-1zM204 297.09h1v7.20h-1zM205 293.86h1v12.10h-1zM206 297.14h1v7.67h-1zM207 296.36h1v8.60h-1zM208 296.94h1v8.53h-1zM209 297.11h1v7.12h-1zM210 297.00h1v10.00h-1zM211 297.54h1v8.22h-1zM212 297.41h1v7.36h-1zM213 296.94h1v7.37h-1zM214 295.25h1v8.82h-1zM215 297.50h1v6.00h-1zM216 297.53h1v8.84h-1zM217 295.89h1v11.29h-1zM218 295.61h1v7.83h-1zM219 295.80h1v10.10h-1zM220 295.43h1v9.01h-1zM221 297.04h1v7.25h-1zM222 294.97h1v8.76h-1zM223 296.44h1v7.93h-1zM224 293.86h1v12.21h-1zM225 294.03h1v12.24h-1zM226 297.20h1v6.46h-1zM227 296.59h1v7.12h-1zM228 296.82h1v8.50h-1zM229 294.13h1v10.70h-1zM230 294.84h1v8.63h-1zM231 297.05h1v10.44h-1zM232 297.47h1v6.67h-1zM233 297.54h1v5.93h-1zM234 294.30h1v13.10h-1zM235 295.85h1v7.65h-1zM236 297.20h1v6.45h-1zM237 295.73h1v9.59h-1zM238 296.78h1v7.78h-1zM239 297.51h1v7.12h-1zM240 293.90h1v11.86h-1zM241 297.52h1v7.00h-1zM242 295.48h1v8.23h-1zM243 294.31h1v9.99h-1zM244 295.55h1v8.55h-1zM245 293.54h1v12.39h-1zM246 296.22h1v7.30h-1zM247 296.77h1v6.67h-1zM248 296.12h1v10.48h-1zM249 297.43h1v7.07h-1zM250 296.61h1v7.49h-1zM251 295.51h1v11.49h-1zM252 295.54h1v8.81h-1zM253 293.80h1v10.08h-1zM254 295.30h1v9.90h-1zM255 295.21h1v11.18h-1zM256 297.35h1v7.65h-1zM257 296.90h1v8.34h-1zM258 293.68h1v11.39h-1zM259 297.56h1v6.76h-1zM260 295.50h1v11.10h-1zM261 295.84h1v10.30h-1zM262 297.56h1v9.49h-1zM263 295.40h1v9.53h-1zM264 294.23h1v12.39h-1zM265 297.52h1v8.62h-1zM266 295.17h1v8.43h-1zM267 295.31h1v9.52h-1zM268 297.41h1v8.65h-1zM269 297.48h1v7.48h-1zM270 296.79h1v6.91h-1zM271 296.26h1v8.07h-1zM272 297.39h1v9.85h-1zM273 297.54h1v5.90h-1zM274 296.60h1v9.68h-1zM275 295.80h1v9.95h-1zM276 296.60h1v8.68h-1zM277 297.10h1v6.62h-1zM278 296.53h1v6.91h-1zM279 297.53h1v8.21h-1zM280 297.44h1v8.29h-1zM281 295.06h1v9.04h-1zM282 295.71h1v10.25h-1zM283 294.53h1v8.98h-1zM284 297.45h1v6.58h-1zM285 296.68h1v7.11h-1zM286 297.56h1v7.14h-1zM287 293.76h1v10.22h-1zM288 296.38h1v7.65h-1zM289 296.76h1v9.75h-1zM290 297.17h1v7.98h-1zM291 296.61h1v8.01h-1zM292 294.16h1v9.30h-1zM293 294.80h1v9.01h-1zM294 295.86h1v10.15h-1zM295 295.83h1v8.24h-1zM296 294.69h1v8.78h-1zM297 295.93h1v8.13h-1zM298 296.42h1v9.96h-1zM299 294.98h1v10.07h-1zM300 296.94h1v6.95h-1zM301 296.44h1v7.44h-1zM302 297.02h1v10.63h-1zM303 297.30h1v9.27h-1zM304 296.72h1v7.50h-1zM305 296.91h1v6.77h-1zM306 296.44h1v7.33h-1zM307 296.50h1v7.52h-1zM308 293.87h1v13.48h-1zM309 296.50h1v8.93h-1zM310 293.59h1v10.52h-1zM311 297.31h1v6.59h-1zM312 297.19h1v8.46h-1zM313 296.74h1v7.46h-1zM314 294.60h1v9.29h-1zM315 294.51h1v10.89h-1zM316 296.65h1v9.95h-1zM317 296.84h1v10.17h-1zM318 293.62h1v11.13h-1zM319 295.28h1v12.29h-1zM320 294.95h1v11.15h-1zM321 294.06h1v13.39h-1zM322 294.88h1v12.94h-1zM323 296.98h1v8.36h-1zM324 295.39h1v8.84h-1zM325 300.25h1v0.50h-1zM326 299.65h1v1.59h-1zM327 298.86h1v2.48h-1zM328 299.53h1v2.53h-1zM329 299.70h1v2.53h-1zM330 299.70h1v1.58h-1zM331 299.56h1v1.88h-1zM332 298.73h1v3.48h-1zM333 298.99h1v2.57h-1zM334 299.29h1v2.13h-1zM335 298.78h1v2.79h-1zM336 299.50h1v2.40h-1zM337 299.55h1v1.99h-1zM338 298.45h1v3.00h-1zM339 299.52h1v2.00h-1zM340 299.44h1v2.28h-1zM341 299.42h1v2.24h-1zM342 299.40h1v2.20h-1zM343 298.93h1v2.77h-1zM344 299.24h1v3.17h-1zM345 299.42h1v2.18h-1zM346 298.31h1v3.56h-1zM347 298.45h1v3.19h-1zM348 298.94h1v3.81h-1zM349 299.17h1v3.43h-1zM350 298.72h1v3.20h-1zM351 297.67h1v4.27h-1zM352 298.91h1v3.44h-1zM353 299.10h1v3.82h-1zM354 298.63h1v3.71h-1zM355 297.83h1v7.13h-1zM356 295.75h1v8.75h-1zM357 297.75h1v5.39h-1zM358 297.39h1v5.37h-1zM359 298.09h1v8.02h-1zM360 297.96h1v8.05h-1zM361 296.23h1v9.88h-1zM362 297.76h1v5.81h-1zM363 295.17h1v8.17h-1zM364 297.50h1v6.45h-1zM365 297.30h1v6.36h-1zM366 295.34h1v8.38h-1zM367 292.89h1v12.83h-1zM368 300.25h1v0.50h-1zM369 300.25h1v0.50h-1zM370 297.21h1v10.22h-1zM371 296.96h1v7.86h-1zM372 295.81h1v8.05h-1zM373 296.08h1v7.71h-1zM374 297.04h1v10.55h-1zM375 294.17h1v10.85h-1zM376 295.12h1v12.12h-1zM377 297.14h1v7.74h-1zM378 297.15h1v6.69h-1zM379 297.17h1v6.81h-1zM380 297.21h1v6.77h-1zM381 296.57h1v8.96h-1zM382 293.89h1v13.59h-1zM383 294.89h1v10.04h-1zM384 293.42h1v10.48h-1zM385 297.17h1v9.63h-1zM386 295.44h1v8.53h-1zM387 296.58h1v7.60h-1zM388 296.38h1v8.22h-1zM389 296.51h1v10.15h-1zM390 294.24h1v10.96h-1zM391 296.21h1v7.93h-1zM392 294.57h1v13.61h-1zM393 296.99h1v9.03h-1zM394 295.01h1v10.72h-1zM395 297.22h1v7.93h-1zM396 297.04h1v6.91h-1zM397 295.70h1v9.96h-1zM398 295.45h1v10.81h-1zM399 294.99h1v9.81h-1zM400 297.21h1v9.26h-1zM401 294.16h1v12.77h-1zM402 295.61h1v8.18h-1zM403 297.05h1v6.78h-1zM404 295.39h1v9.72h-1zM405 297.07h1v10.84h-1zM406 292.90h1v14.54h-1zM407 296.25h1v7.91h-1zM408 297.03h1v9.82h-1zM409 295.00h1v9.12h-1zM410 293.54h1v11.70h-1zM411 296.45h1v8.10h-1zM412 294.88h1v9.84h-1zM413 295.26h1v8.59h-1zM414 294.99h1v9.12h-1zM415 293.47h1v10.51h-1zM416 296.72h1v8.36h-1zM417 296.53h1v8.50h-1zM418 293.36h1v10.60h-1zM419 294.53h1v11.42h-1zM420 294.43h1v10.26h-1zM421 296.29h1v8.03h-1zM422 296.21h1v7.86h-1zM423 297.06h1v7.74h-1zM424 297.06h1v7.72h-1zM425 295.74h1v8.47h-1zM426 297.09h1v8.34h-1zM427 293.88h1v10.12h-1zM428 295.51h1v10.23h-1zM429 293.68h1v12.20h-1zM430 296.80h1v7.18h-1zM431 294.06h1v10.13h-1zM432 297.22h1v9.98h-1zM433 297.05h1v7.17h-1zM434 296.76h1v7.31h-1zM435 294.85h1v9.46h-1zM436 296.35h1v8.23h-1zM437 294.08h1v9.70h-1zM438 295.70h1v8.15h-1zM439 297.12h1v8.32h-1zM440 296.59h1v7.21h-1zM441 295.66h1v11.90h-1zM442 295.34h1v9.55h-1zM443 294.32h1v13.25h-1zM444 297.12h1v7.06h-1zM445 293.01h1v14.64h-1zM446 297.04h1v8.98h-1zM447 293.77h1v11.59h-1zM448 294.99h1v10.02h-1zM449 296.97h1v7.01h-1zM450 297.21h1v8.57h-1zM451 297.14h1v8.39h-1zM452 296.53h1v8.10h-1zM453 292.96h1v11.51h-1zM454 296.20h1v8.22h-1zM455 297.01h1v6.99h-1zM456 295.94h1v10.86h-1zM457 297.19h1v10.63h-1zM458 295.17h1v8.62h-1zM459 294.96h1v9.54h-1zM460 296.03h1v7.80h-1zM461 296.05h1v8.95h-1zM462 294.45h1v10.85h-1zM463 294.98h1v11.24h-1zM464 297.00h1v6.78h-1zM465 296.19h1v7.66h-1zM466 297.13h1v7.11h-1zM467 295.92h1v9.58h-1zM468 295.33h1v12.46h-1zM469 297.18h1v8.01h-1zM470 297.19h1v8.62h-1zM471 296.36h1v7.51h-1zM472 296.79h1v8.96h-1zM473 296.21h1v11.60h-1zM474 296.65h1v7.65h-1zM475 293.37h1v12.06h-1zM476 297.17h1v9.39h-1zM477 296.63h1v11.21h-1zM478 295.39h1v11.31h-1zM479 293.59h1v11.36h-1zM480 292.99h1v10.79h-1zM481 296.70h1v10.25h-1zM482 297.22h1v8.60h-1zM483 292.71h1v13.38h-1zM484 293.86h1v9.94h-1zM485 295.90h1v9.55h-1zM486 296.37h1v8.21h-1zM487 294.40h1v9.50h-1zM488 297.21h1v8.15h-1zM489 293.00h1v13.87h-1zM490 295.17h1v9.00h-1zM491 293.52h1v10.26h-1zM492 296.95h1v9.64h-1zM493 293.60h1v10.91h-1zM494 293.48h1v10.35h-1zM495 295.61h1v8.18h-1zM496 296.98h1v6.96h-1zM497 297.22h1v7.30h-1zM498 296.09h1v8.04h-1zM499 295.30h1v8.49h-1zM500 296.01h1v9.02h-1zM501 296.49h1v11.07h-1zM502 297.15h1v7.45h-1zM503 296.27h1v8.14h-1zM504 292.93h1v12.32h-1zM505 296.02h1v8.63h-1zM506 296.36h1v11.51h-1zM507 294.33h1v11.34h-1zM508 297.10h1v8.27h-1zM509 297.15h1v7.18h-1zM510 297.22h1v8.80h-1zM511 292.90h1v12.71h-1zM512 295.76h1v8.30h-1zM513 296.34h1v8.41h-1zM514 296.41h1v7.69h-1zM515 297.01h1v9.32h-1zM516 293.12h1v13.71h-1zM517 295.48h1v8.30h-1zM518 296.81h1v10.16h-1zM519 292.94h1v12.19h-1zM520 295.76h1v10.15h-1zM521 296.95h1v9.12h-1zM522 296.62h1v10.40h-1zM523 296.26h1v9.51h-1zM524 295.82h1v9.24h-1zM525 296.26h1v11.61h-1zM526 294.65h1v9.93h-1zM527 296.07h1v11.35h-1zM528 294.70h1v11.01h-1zM529 293.06h1v10.77h-1zM530 295.61h1v9.93h-1zM531 296.29h1v11.68h-1zM532 292.99h1v11.48h-1zM533 295.51h1v10.92h-1zM534 295.03h1v9.34h-1zM535 294.34h1v9.98h-1zM536 297.13h1v8.65h-1zM537 295.32h1v9.21h-1zM538 296.10h1v12.09h-1zM539 294.27h1v10.26h-1zM540 294.70h1v9.71h-1zM541 297.74h1v6.31h-1zM542 297.10h1v7.29h-1zM543 298.11h1v4.77h-1zM544 299.10h1v2.55h-1zM545 299.39h1v1.99h-1zM546 299.13h1v2.10h-1zM547 299.88h1v1.34h-1zM548 299.90h1v1.19h-1zM549 300.20h1v0.61h-1zM550 300.25h1v0.50h-1zM551 300.25h1v0.50h-1zM552 300.20h1v0.60h-1zM553 300.20h1v0.60h-1zM554 300.20h1v0.60h-1zM555 300.20h1v0.60h-1zM556 300.20h1v0.60h-1zM557 300.20h1v0.60h-1zM558 300.20h1v0.60h-1zM559 300.20h1v0.60h-1zM560 300.20h1v0.60h-1zM561 300.20h1v0.60h-1zM562 300.20h1v0.60h-1zM563 300.20h1v0.60h-1zM564 300.20h1v0.60h-1z"/></svg>
<div class="abs" style="left:103.00px;top:313.35px;width:249.50px;height:26.85px;background:#4242b0;border-radius:0.6px;box-shadow:inset 0 0 0 0.35px rgba(20,20,60,0.7)"></div>
<div class="t" style="left:104.50px;top:315.45px;font-size:3.5px;color:#e6e6ff;">Broken Up Brit#02.3</div>
<div class="abs" style="left:352.50px;top:313.35px;width:100.90px;height:26.85px;background:#4242b0;border-radius:0.6px;box-shadow:inset 0 0 0 0.35px rgba(20,20,60,0.7)"></div>
<div class="t" style="left:354.00px;top:315.45px;font-size:3.5px;color:#e6e6ff;">Ruin Us separate drums_AM05.8</div>
<div class="abs" style="left:453.40px;top:313.35px;width:41.60px;height:26.85px;background:#4242b0;border-radius:0.6px;box-shadow:inset 0 0 0 0.35px rgba(20,20,60,0.7)"></div>
<div class="t" style="left:454.90px;top:315.45px;font-size:3.5px;color:#e6e6ff;">Ruin Us separate drums_</div>
<div class="abs" style="left:495.00px;top:313.35px;width:70.00px;height:26.85px;background:#4242b0;border-radius:0.6px;box-shadow:inset 0 0 0 0.35px rgba(20,20,60,0.7)"></div>
<div class="t" style="left:496.50px;top:315.45px;font-size:3.5px;color:#e6e6ff;">Ruin Us separate drums_AM07.2</div>
<svg class="abs" style="left:0;top:0" width="768" height="432"><path fill="#dcdcfc" d="M103 329.25h1v0.50h-1zM104 327.49h1v4.63h-1zM105 326.78h1v6.16h-1zM106 325.53h1v6.55h-1zM107 326.71h1v8.29h-1zM108 326.26h1v6.44h-1zM109 322.13h1v11.44h-1zM110 323.15h1v10.60h-1zM111 324.29h1v8.64h-1zM112 324.20h1v12.26h-1zM113 324.72h1v10.88h-1zM114 323.79h1v9.24h-1zM115 323.13h1v11.63h-1zM116 325.49h1v7.58h-1zM117 322.24h1v11.93h-1zM118 323.40h1v13.45h-1zM119 323.48h1v13.70h-1zM120 325.25h1v10.84h-1zM121 325.12h1v11.98h-1zM122 322.53h1v10.38h-1zM123 326.13h1v6.86h-1zM124 322.24h1v11.27h-1zM125 324.81h1v8.12h-1zM126 325.59h1v7.39h-1zM127 326.35h1v7.11h-1zM128 325.91h1v8.79h-1zM129 326.05h1v8.05h-1zM130 326.46h1v6.61h-1zM131 329.25h1v0.50h-1zM132 329.25h1v0.50h-1zM133 329.25h1v0.50h-1zM134 329.25h1v0.50h-1zM135 329.25h1v0.50h-1zM136 329.25h1v0.50h-1zM137 329.25h1v0.50h-1zM138 329.25h1v0.50h-1zM139 329.25h1v0.50h-1zM140 329.25h1v0.50h-1zM141 329.25h1v0.50h-1zM142 329.25h1v0.50h-1zM143 329.25h1v0.50h-1zM144 327.64h1v3.05h-1zM145 324.87h1v9.87h-1zM146 322.18h1v12.29h-1zM147 323.14h1v10.32h-1zM148 322.34h1v12.48h-1zM149 325.51h1v7.60h-1zM150 322.44h1v15.35h-1zM151 326.01h1v9.99h-1zM152 325.33h1v7.65h-1zM153 325.80h1v9.71h-1zM154 322.85h1v9.89h-1zM155 324.68h1v8.00h-1zM156 324.19h1v8.87h-1zM157 323.23h1v13.32h-1zM158 325.50h1v11.03h-1zM159 326.23h1v6.18h-1zM160 325.28h1v7.04h-1zM161 326.61h1v6.27h-1zM162 325.45h1v6.82h-1zM163 326.89h1v7.93h-1zM164 326.62h1v8.64h-1zM165 324.30h1v8.15h-1zM166 326.40h1v6.39h-1zM167 325.84h1v7.12h-1zM168 326.27h1v6.68h-1zM169 324.65h1v7.81h-1zM170 326.84h1v6.29h-1zM171 326.56h1v6.01h-1zM172 323.17h1v10.09h-1zM173 325.64h1v6.59h-1zM174 326.12h1v7.38h-1zM175 326.77h1v6.89h-1zM176 325.26h1v6.98h-1zM177 325.29h1v7.76h-1zM178 325.03h1v7.67h-1zM179 324.89h1v9.40h-1zM180 326.77h1v5.48h-1zM181 325.05h1v10.68h-1zM182 326.53h1v6.48h-1zM183 325.45h1v7.17h-1zM184 326.27h1v6.33h-1zM185 326.26h1v7.31h-1zM186 326.43h1v6.34h-1zM187 324.52h1v7.71h-1zM188 325.55h1v8.72h-1zM189 326.41h1v6.01h-1zM190 324.33h1v8.11h-1zM191 326.64h1v6.31h-1zM192 324.93h1v7.34h-1zM193 326.38h1v6.27h-1zM194 324.15h1v8.80h-1zM195 324.01h1v8.33h-1zM196 326.34h1v7.48h-1zM197 323.82h1v9.18h-1zM198 326.58h1v5.71h-1zM199 325.71h1v6.65h-1zM200 323.12h1v13.00h-1zM201 325.98h1v7.24h-1zM202 323.12h1v11.66h-1zM203 323.12h1v10.29h-1zM204 326.06h1v7.19h-1zM205 323.22h1v9.99h-1zM206 325.58h1v8.08h-1zM207 325.32h1v8.32h-1zM208 322.21h1v10.77h-1zM209 326.14h1v10.85h-1zM210 322.55h1v14.83h-1zM211 325.26h1v11.78h-1zM212 322.15h1v10.94h-1zM213 323.56h1v12.55h-1zM214 324.10h1v10.01h-1zM215 325.75h1v7.65h-1zM216 325.90h1v6.98h-1zM217 324.53h1v8.71h-1zM218 323.09h1v9.78h-1zM219 322.35h1v12.74h-1zM220 322.18h1v14.41h-1zM221 326.83h1v4.51h-1zM222 328.24h1v3.49h-1zM223 328.19h1v2.73h-1zM224 327.48h1v3.76h-1zM225 327.94h1v4.35h-1zM226 329.25h1v0.50h-1zM227 327.24h1v3.99h-1zM228 327.25h1v6.44h-1zM229 326.34h1v7.59h-1zM230 326.40h1v5.89h-1zM231 325.53h1v9.43h-1zM232 326.38h1v8.72h-1zM233 322.69h1v12.75h-1zM234 323.22h1v9.52h-1zM235 324.35h1v11.91h-1zM236 326.08h1v7.18h-1zM237 325.69h1v8.61h-1zM238 325.12h1v8.98h-1zM239 323.00h1v10.04h-1zM240 325.92h1v7.22h-1zM241 325.85h1v7.24h-1zM242 321.26h1v15.40h-1zM243 325.92h1v8.36h-1zM244 325.50h1v7.99h-1zM245 325.44h1v9.53h-1zM246 324.47h1v9.05h-1zM247 326.00h1v7.33h-1zM248 326.19h1v7.94h-1zM249 324.15h1v9.11h-1zM250 326.47h1v6.16h-1zM251 326.11h1v7.67h-1zM252 324.61h1v8.07h-1zM253 324.97h1v8.23h-1zM254 326.90h1v5.06h-1zM255 327.51h1v4.50h-1zM256 326.89h1v6.11h-1zM257 326.78h1v4.99h-1zM258 326.57h1v6.43h-1zM259 327.39h1v4.74h-1zM260 326.87h1v6.97h-1zM261 324.86h1v7.15h-1zM262 325.06h1v8.35h-1zM263 327.20h1v5.02h-1zM264 327.36h1v6.16h-1zM265 326.13h1v7.76h-1zM266 329.25h1v0.50h-1zM267 329.25h1v0.50h-1zM268 327.11h1v4.46h-1zM269 326.41h1v5.64h-1zM270 327.42h1v5.10h-1zM271 327.27h1v4.53h-1zM272 325.18h1v6.69h-1zM273 327.02h1v4.97h-1zM274 324.32h1v7.80h-1zM275 326.98h1v7.51h-1zM276 326.95h1v7.52h-1zM277 325.51h1v8.81h-1zM278 324.17h1v8.79h-1zM279 325.30h1v6.44h-1zM280 325.79h1v6.50h-1zM281 326.48h1v4.82h-1zM282 327.23h1v5.09h-1zM283 326.76h1v5.87h-1zM284 325.57h1v9.24h-1zM285 326.55h1v5.80h-1zM286 326.53h1v7.13h-1zM287 324.63h1v8.19h-1zM288 326.26h1v6.56h-1zM289 326.31h1v6.58h-1zM290 326.74h1v6.43h-1zM291 323.20h1v9.67h-1zM292 324.66h1v7.66h-1zM293 324.97h1v9.41h-1zM294 325.06h1v8.18h-1zM295 325.89h1v7.90h-1zM296 329.25h1v0.50h-1zM297 329.25h1v0.50h-1zM298 329.25h1v0.50h-1zM299 327.07h1v3.62h-1zM300 327.88h1v4.45h-1zM301 325.49h1v6.55h-1zM302 326.90h1v6.11h-1zM303 327.20h1v4.71h-1zM304 327.06h1v5.86h-1zM305 326.75h1v5.34h-1zM306 325.35h1v9.79h-1zM307 326.62h1v7.21h-1zM308 326.26h1v8.50h-1zM309 325.58h1v6.85h-1zM310 326.63h1v5.57h-1zM311 325.92h1v6.85h-1zM312 326.66h1v6.06h-1zM313 326.38h1v8.11h-1zM314 326.70h1v9.20h-1zM315 325.95h1v7.59h-1zM316 326.03h1v8.70h-1zM317 324.43h1v8.82h-1zM318 326.11h1v7.80h-1zM319 324.47h1v8.09h-1zM320 325.29h1v9.71h-1zM321 326.48h1v5.50h-1zM322 327.14h1v6.12h-1zM323 326.16h1v7.98h-1zM324 325.77h1v5.73h-1zM325 327.82h1v3.42h-1zM326 328.29h1v3.14h-1zM327 329.25h1v0.50h-1zM328 329.25h1v0.50h-1zM329 329.25h1v0.50h-1zM330 327.80h1v3.47h-1zM331 328.26h1v3.55h-1zM332 328.08h1v2.97h-1zM333 327.34h1v3.42h-1zM334 328.35h1v3.38h-1zM335 328.56h1v1.93h-1zM336 329.25h1v0.50h-1zM337 329.25h1v0.50h-1zM338 328.54h1v2.02h-1zM339 328.60h1v1.95h-1zM340 328.18h1v2.70h-1zM341 328.30h1v2.88h-1zM342 326.79h1v4.16h-1zM343 327.75h1v3.01h-1zM344 328.11h1v3.42h-1zM345 328.22h1v3.90h-1zM346 326.85h1v3.91h-1zM347 326.83h1v4.10h-1zM348 327.43h1v4.11h-1zM349 328.33h1v2.87h-1zM350 328.06h1v3.15h-1zM351 328.78h1v1.88h-1zM352 325.92h1v6.14h-1zM353 326.64h1v4.95h-1zM354 326.76h1v5.14h-1zM355 326.80h1v5.27h-1zM356 329.25h1v0.50h-1zM357 329.25h1v0.50h-1zM358 327.90h1v2.76h-1zM359 327.07h1v4.81h-1zM360 327.63h1v5.63h-1zM361 326.34h1v5.19h-1zM362 324.80h1v6.90h-1zM363 326.89h1v6.51h-1zM364 325.94h1v6.96h-1zM365 325.57h1v7.14h-1zM366 326.57h1v5.62h-1zM367 326.82h1v7.24h-1zM368 324.60h1v8.76h-1zM369 324.56h1v8.26h-1zM370 326.33h1v6.63h-1zM371 323.46h1v9.00h-1zM372 325.44h1v7.32h-1zM373 323.94h1v9.15h-1zM374 325.91h1v7.40h-1zM375 325.06h1v10.21h-1zM376 325.74h1v10.15h-1zM377 326.19h1v6.89h-1zM378 326.16h1v6.69h-1zM379 323.37h1v11.90h-1zM380 325.97h1v7.07h-1zM381 325.28h1v10.23h-1zM382 322.90h1v12.70h-1zM383 324.35h1v8.72h-1zM384 325.23h1v7.95h-1zM385 324.61h1v9.99h-1zM386 325.74h1v7.62h-1zM387 322.90h1v10.18h-1zM388 322.69h1v14.36h-1zM389 321.37h1v12.49h-1zM390 324.32h1v10.53h-1zM391 323.81h1v14.18h-1zM392 323.43h1v10.21h-1zM393 322.03h1v12.36h-1zM394 323.94h1v11.98h-1zM395 325.78h1v10.50h-1zM396 323.51h1v10.97h-1zM397 324.34h1v10.00h-1zM398 325.55h1v9.15h-1zM399 325.73h1v8.83h-1zM400 323.56h1v10.73h-1zM401 324.06h1v14.00h-1zM402 321.57h1v11.80h-1zM403 322.45h1v12.86h-1zM404 325.71h1v8.25h-1zM405 325.44h1v7.88h-1zM406 324.21h1v13.58h-1zM407 325.18h1v12.05h-1zM408 323.21h1v10.15h-1zM409 321.90h1v13.25h-1zM410 321.28h1v14.65h-1zM411 322.91h1v10.95h-1zM412 322.39h1v15.34h-1zM413 321.94h1v12.28h-1zM414 322.83h1v11.60h-1zM415 325.73h1v7.49h-1zM416 325.77h1v7.63h-1zM417 325.69h1v8.75h-1zM418 323.36h1v11.26h-1zM419 324.96h1v10.31h-1zM420 325.41h1v8.79h-1zM421 323.05h1v10.86h-1zM422 325.76h1v11.32h-1zM423 323.40h1v10.31h-1zM424 325.30h1v9.09h-1zM425 324.28h1v8.96h-1zM426 326.03h1v7.15h-1zM427 323.15h1v9.89h-1zM428 325.10h1v7.99h-1zM429 325.92h1v7.08h-1zM430 325.41h1v7.55h-1zM431 326.20h1v6.65h-1zM432 326.12h1v7.71h-1zM433 326.27h1v6.44h-1zM434 325.46h1v7.93h-1zM435 324.26h1v8.37h-1zM436 325.75h1v7.48h-1zM437 326.49h1v9.88h-1zM438 326.36h1v6.12h-1zM439 325.72h1v6.77h-1zM440 325.18h1v7.61h-1zM441 326.70h1v5.56h-1zM442 324.88h1v7.56h-1zM443 324.71h1v8.15h-1zM444 324.02h1v8.28h-1zM445 326.91h1v5.21h-1zM446 325.15h1v7.86h-1zM447 327.01h1v4.65h-1zM448 326.24h1v7.82h-1zM449 326.84h1v4.46h-1zM450 327.96h1v3.10h-1zM451 328.35h1v2.26h-1zM452 329.25h1v0.50h-1zM453 326.55h1v7.63h-1zM454 323.27h1v9.33h-1zM455 322.71h1v10.65h-1zM456 323.94h1v11.92h-1zM457 322.97h1v9.47h-1zM458 326.18h1v7.75h-1zM459 322.92h1v9.55h-1zM460 326.21h1v9.16h-1zM461 326.51h1v6.55h-1zM462 326.11h1v8.21h-1zM463 323.06h1v9.50h-1zM464 324.34h1v10.29h-1zM465 323.72h1v9.96h-1zM466 323.10h1v9.88h-1zM467 325.86h1v6.79h-1zM468 324.09h1v9.28h-1zM469 326.27h1v6.29h-1zM470 324.45h1v9.48h-1zM471 324.51h1v8.54h-1zM472 325.60h1v6.94h-1zM473 324.51h1v7.93h-1zM474 325.67h1v9.10h-1zM475 324.70h1v7.78h-1zM476 326.33h1v9.00h-1zM477 324.88h1v10.69h-1zM478 323.47h1v9.79h-1zM479 323.29h1v11.33h-1zM480 326.11h1v6.89h-1zM481 326.54h1v6.55h-1zM482 322.85h1v9.63h-1zM483 325.25h1v7.24h-1zM484 326.53h1v7.62h-1zM485 326.32h1v6.12h-1zM486 326.47h1v7.66h-1zM487 325.17h1v7.27h-1zM488 326.35h1v9.89h-1zM489 326.36h1v7.36h-1zM490 325.85h1v9.07h-1zM491 325.08h1v9.89h-1zM492 325.40h1v7.19h-1zM493 326.43h1v6.03h-1zM494 323.79h1v8.70h-1zM495 325.93h1v11.75h-1zM496 325.73h1v11.27h-1zM497 325.89h1v8.24h-1zM498 325.69h1v10.78h-1zM499 324.06h1v11.04h-1zM500 323.07h1v13.74h-1zM501 325.34h1v9.52h-1zM502 324.95h1v8.18h-1zM503 322.49h1v12.32h-1zM504 322.66h1v10.62h-1zM505 324.50h1v9.64h-1zM506 323.32h1v9.78h-1zM507 325.34h1v8.89h-1zM508 325.90h1v8.67h-1zM509 323.26h1v10.69h-1zM510 323.86h1v11.02h-1zM511 325.70h1v7.97h-1zM512 321.04h1v12.58h-1zM513 325.01h1v8.09h-1zM514 325.70h1v7.51h-1zM515 321.66h1v14.01h-1zM516 322.16h1v15.71h-1zM517 324.08h1v13.26h-1zM518 324.52h1v9.42h-1zM519 321.50h1v15.59h-1zM520 321.48h1v12.74h-1zM521 322.98h1v10.91h-1zM522 321.03h1v16.22h-1zM523 325.51h1v11.86h-1zM524 325.76h1v7.35h-1zM525 323.36h1v10.14h-1zM526 324.60h1v10.48h-1zM527 325.92h1v9.89h-1zM528 325.55h1v8.44h-1zM529 325.34h1v10.44h-1zM530 323.18h1v10.30h-1zM531 325.88h1v7.63h-1zM532 325.10h1v8.00h-1zM533 325.81h1v10.12h-1zM534 323.51h1v14.26h-1zM535 321.20h1v15.66h-1zM536 325.25h1v7.95h-1zM537 325.45h1v8.68h-1zM538 324.57h1v9.95h-1zM539 325.29h1v11.36h-1zM540 325.53h1v8.60h-1zM541 322.05h1v14.23h-1zM542 325.49h1v7.87h-1zM543 324.52h1v7.60h-1zM544 327.41h1v4.93h-1zM545 327.36h1v3.73h-1zM546 328.40h1v2.26h-1zM547 328.16h1v2.29h-1zM548 328.47h1v1.86h-1zM549 328.96h1v1.08h-1zM550 329.25h1v0.50h-1zM551 329.25h1v0.50h-1zM552 329.25h1v0.50h-1zM553 329.25h1v0.50h-1zM554 329.25h1v0.50h-1zM555 329.25h1v0.50h-1zM556 329.25h1v0.50h-1zM557 329.25h1v0.50h-1zM558 329.25h1v0.50h-1zM559 329.25h1v0.50h-1zM560 329.25h1v0.50h-1zM561 329.25h1v0.50h-1zM562 329.25h1v0.50h-1zM563 329.25h1v0.50h-1zM564 329.25h1v0.50h-1z"/></svg>
<div class="abs" style="left:127.30px;top:342.10px;width:378.30px;height:26.85px;background:#3870b0;border-radius:0.6px;box-shadow:inset 0 0 0 0.35px rgba(20,20,60,0.7)"></div>
<div class="t" style="left:128.80px;top:344.20px;font-size:3.5px;color:#e6e6ff;">Audio Track#04.2</div>
<div class="t" style="left:436.00px;top:344.20px;font-size:3.5px;color:#e6eeff;">Audio Track#04.2</div>
<svg class="abs" style="left:0;top:0" width="768" height="432"><path fill="#e2eeff" d="M128 356.81h1v2.85h-1zM129 353.25h1v8.80h-1zM130 355.45h1v7.89h-1zM131 350.78h1v14.58h-1zM132 351.99h1v9.90h-1zM133 353.50h1v8.48h-1zM134 355.52h1v5.43h-1zM135 355.51h1v8.98h-1zM136 353.12h1v10.46h-1zM137 353.60h1v7.23h-1zM138 355.73h1v6.48h-1zM139 358.15h1v0.50h-1zM140 358.15h1v0.50h-1zM141 356.00h1v5.05h-1zM142 350.63h1v10.82h-1zM143 352.52h1v12.13h-1zM144 353.33h1v8.36h-1zM145 353.73h1v7.35h-1zM146 351.69h1v13.08h-1zM147 353.84h1v7.96h-1zM148 352.50h1v10.32h-1zM149 352.95h1v10.76h-1zM150 354.74h1v6.95h-1zM151 354.65h1v6.89h-1zM152 356.39h1v4.50h-1zM153 358.15h1v0.50h-1zM154 358.15h1v0.50h-1zM155 354.61h1v5.23h-1zM156 356.39h1v6.48h-1zM157 354.91h1v8.22h-1zM158 353.54h1v9.03h-1zM159 350.17h1v11.83h-1zM160 353.30h1v8.92h-1zM161 351.74h1v11.09h-1zM162 353.34h1v12.63h-1zM163 353.49h1v11.39h-1zM164 349.57h1v12.34h-1zM165 355.14h1v7.63h-1zM166 350.49h1v14.83h-1zM167 354.03h1v9.35h-1zM168 354.49h1v9.63h-1zM169 355.44h1v10.03h-1zM170 350.38h1v16.41h-1zM171 351.69h1v14.73h-1zM172 355.99h1v6.29h-1zM173 351.54h1v12.77h-1zM174 354.85h1v9.37h-1zM175 355.20h1v7.01h-1zM176 358.15h1v0.50h-1zM177 358.15h1v0.50h-1zM178 358.15h1v0.50h-1zM179 358.15h1v0.50h-1zM180 358.15h1v0.50h-1zM181 358.15h1v0.50h-1zM182 354.10h1v7.98h-1zM183 353.21h1v8.55h-1zM184 353.58h1v13.09h-1zM185 353.88h1v7.13h-1zM186 355.58h1v6.38h-1zM187 351.19h1v11.92h-1zM188 354.12h1v7.41h-1zM189 350.01h1v13.46h-1zM190 354.61h1v6.69h-1zM191 358.15h1v0.50h-1zM192 358.15h1v0.50h-1zM193 358.15h1v0.50h-1zM194 358.15h1v0.50h-1zM195 355.35h1v6.81h-1zM196 351.44h1v10.61h-1zM197 355.44h1v8.75h-1zM198 354.13h1v13.25h-1zM199 354.93h1v9.50h-1zM200 350.83h1v12.85h-1zM201 349.48h1v14.63h-1zM202 354.18h1v9.51h-1zM203 355.47h1v8.29h-1zM204 354.13h1v12.57h-1zM205 350.46h1v13.78h-1zM206 355.50h1v7.20h-1zM207 354.17h1v8.24h-1zM208 354.24h1v12.34h-1zM209 354.81h1v6.62h-1zM210 358.15h1v0.50h-1zM211 358.15h1v0.50h-1zM212 350.33h1v13.99h-1zM213 349.96h1v13.39h-1zM214 350.49h1v14.35h-1zM215 351.14h1v14.24h-1zM216 352.91h1v8.59h-1zM217 354.60h1v11.55h-1zM218 350.50h1v15.95h-1zM219 353.85h1v11.01h-1zM220 351.09h1v13.68h-1zM221 351.00h1v13.09h-1zM222 351.95h1v13.08h-1zM223 354.25h1v12.19h-1zM224 358.15h1v0.50h-1zM225 358.15h1v0.50h-1zM226 358.15h1v0.50h-1zM227 354.43h1v5.42h-1zM228 353.16h1v10.44h-1zM229 353.70h1v6.73h-1zM230 352.17h1v8.85h-1zM231 351.38h1v12.52h-1zM232 355.81h1v5.74h-1zM233 352.53h1v11.37h-1zM234 351.70h1v14.44h-1zM235 354.61h1v6.32h-1zM236 350.30h1v10.74h-1zM237 350.44h1v11.28h-1zM238 350.75h1v15.14h-1zM239 350.25h1v14.26h-1zM240 350.19h1v12.17h-1zM241 351.47h1v11.71h-1zM242 350.09h1v15.88h-1zM243 352.75h1v11.64h-1zM244 355.57h1v5.72h-1zM245 352.09h1v11.96h-1zM246 350.54h1v14.16h-1zM247 355.01h1v8.11h-1zM248 351.42h1v12.53h-1zM249 355.91h1v9.67h-1zM250 351.52h1v9.69h-1zM251 353.31h1v9.34h-1zM252 352.37h1v9.70h-1zM253 355.34h1v7.29h-1zM254 352.55h1v8.04h-1zM255 356.44h1v5.74h-1zM256 354.99h1v5.85h-1zM257 358.15h1v0.50h-1zM258 358.15h1v0.50h-1zM259 358.15h1v0.50h-1zM260 358.15h1v0.50h-1zM261 358.15h1v0.50h-1zM262 358.15h1v0.50h-1zM263 358.15h1v0.50h-1zM264 358.15h1v0.50h-1zM265 355.63h1v6.90h-1zM266 353.07h1v7.51h-1zM267 351.79h1v9.76h-1zM268 354.45h1v10.80h-1zM269 353.65h1v11.59h-1zM270 355.08h1v10.59h-1zM271 355.13h1v6.40h-1zM272 353.74h1v8.53h-1zM273 354.11h1v10.18h-1zM274 354.74h1v5.05h-1zM275 358.15h1v0.50h-1zM276 358.15h1v0.50h-1zM277 358.15h1v0.50h-1zM278 358.15h1v0.50h-1zM279 353.74h1v10.80h-1zM280 352.64h1v12.97h-1zM281 352.65h1v8.93h-1zM282 354.15h1v12.29h-1zM283 353.45h1v12.48h-1zM284 349.49h1v15.56h-1zM285 351.44h1v13.50h-1zM286 353.73h1v13.12h-1zM287 352.76h1v14.08h-1zM288 353.77h1v12.79h-1zM289 350.74h1v14.22h-1zM290 352.91h1v9.07h-1zM291 350.84h1v12.54h-1zM292 351.53h1v10.41h-1zM293 355.18h1v6.83h-1zM294 350.60h1v11.62h-1zM295 350.02h1v13.43h-1zM296 352.07h1v11.24h-1zM297 351.79h1v9.90h-1zM298 353.16h1v13.83h-1zM299 354.57h1v10.65h-1zM300 353.64h1v9.35h-1zM301 355.55h1v5.67h-1zM302 358.15h1v0.50h-1zM303 358.15h1v0.50h-1zM304 358.15h1v0.50h-1zM305 358.15h1v0.50h-1zM306 358.15h1v0.50h-1zM307 358.15h1v0.50h-1zM308 358.15h1v0.50h-1zM309 358.15h1v0.50h-1zM310 358.15h1v0.50h-1zM311 358.15h1v0.50h-1zM312 358.15h1v0.50h-1zM313 358.15h1v0.50h-1zM314 358.15h1v0.50h-1zM315 358.15h1v0.50h-1zM316 358.15h1v0.50h-1zM317 358.15h1v0.50h-1zM318 358.15h1v0.50h-1zM319 358.15h1v0.50h-1zM320 358.15h1v0.50h-1zM321 358.15h1v0.50h-1zM322 358.15h1v0.50h-1zM323 358.15h1v0.50h-1zM324 358.15h1v0.50h-1zM325 358.15h1v0.50h-1zM326 358.15h1v0.50h-1zM327 358.15h1v0.50h-1zM328 358.15h1v0.50h-1zM329 358.15h1v0.50h-1zM330 358.15h1v0.50h-1zM331 358.15h1v0.50h-1zM332 358.15h1v0.50h-1zM333 358.15h1v0.50h-1zM334 358.15h1v0.50h-1zM335 358.15h1v0.50h-1zM336 355.01h1v6.49h-1zM337 354.19h1v8.43h-1zM338 352.90h1v7.84h-1zM339 353.95h1v8.51h-1zM340 353.67h1v11.19h-1zM341 352.46h1v12.92h-1zM342 355.55h1v8.50h-1zM343 352.41h1v12.36h-1zM344 352.54h1v12.92h-1zM345 354.19h1v12.00h-1zM346 353.49h1v10.95h-1zM347 350.47h1v14.71h-1zM348 353.91h1v8.49h-1zM349 353.75h1v11.14h-1zM350 349.55h1v17.10h-1zM351 353.22h1v10.37h-1zM352 350.57h1v12.31h-1zM353 353.11h1v8.07h-1zM354 354.54h1v9.96h-1zM355 351.35h1v13.61h-1zM356 353.44h1v13.59h-1zM357 351.87h1v10.16h-1zM358 355.35h1v11.68h-1zM359 349.79h1v16.80h-1zM360 352.22h1v10.61h-1zM361 355.34h1v7.09h-1zM362 354.66h1v11.54h-1zM363 351.00h1v14.16h-1zM364 355.27h1v6.75h-1zM365 354.59h1v11.00h-1zM366 355.44h1v9.05h-1zM367 353.16h1v9.85h-1zM368 352.30h1v9.13h-1zM369 354.61h1v6.13h-1zM370 356.60h1v3.37h-1zM371 356.57h1v3.19h-1zM372 358.15h1v0.50h-1zM373 358.15h1v0.50h-1zM374 358.15h1v0.50h-1zM375 358.15h1v0.50h-1zM376 358.15h1v0.50h-1zM377 358.15h1v0.50h-1zM378 358.15h1v0.50h-1zM379 358.15h1v0.50h-1zM380 358.15h1v0.50h-1zM381 357.23h1v4.56h-1zM382 356.02h1v6.75h-1zM383 354.04h1v8.84h-1zM384 353.78h1v10.50h-1zM385 352.41h1v11.25h-1zM386 353.60h1v10.24h-1zM387 352.54h1v10.84h-1zM388 353.48h1v8.00h-1zM389 351.46h1v11.92h-1zM390 355.62h1v6.13h-1zM391 350.92h1v11.42h-1zM392 353.60h1v11.31h-1zM393 350.71h1v12.20h-1zM394 353.47h1v10.08h-1zM395 355.61h1v10.78h-1zM396 355.63h1v11.35h-1zM397 354.78h1v7.26h-1zM398 350.40h1v15.84h-1zM399 354.25h1v10.33h-1zM400 352.70h1v12.93h-1zM401 354.53h1v11.76h-1zM402 349.44h1v16.09h-1zM403 349.95h1v17.01h-1zM404 353.37h1v12.98h-1zM405 350.60h1v14.08h-1zM406 355.12h1v9.69h-1zM407 350.29h1v12.54h-1zM408 351.99h1v14.31h-1zM409 352.37h1v8.76h-1zM410 352.31h1v10.02h-1zM411 351.18h1v13.33h-1zM412 354.38h1v11.24h-1zM413 352.84h1v9.62h-1zM414 351.98h1v13.13h-1zM415 351.99h1v12.78h-1zM416 353.42h1v10.15h-1zM417 354.00h1v8.47h-1zM418 352.94h1v8.48h-1zM419 356.71h1v5.48h-1zM420 356.19h1v4.53h-1zM421 358.15h1v0.50h-1zM422 358.15h1v0.50h-1zM423 358.15h1v0.50h-1zM424 352.29h1v10.14h-1zM425 354.65h1v6.72h-1zM426 351.20h1v15.16h-1zM427 351.70h1v9.94h-1zM428 350.03h1v15.84h-1zM429 352.82h1v8.14h-1zM430 350.83h1v13.83h-1zM431 352.15h1v8.91h-1zM432 351.49h1v9.67h-1zM433 353.01h1v8.81h-1zM434 353.71h1v12.54h-1zM435 351.40h1v14.41h-1zM436 354.08h1v9.19h-1zM437 352.25h1v8.90h-1zM438 353.40h1v13.35h-1zM439 351.36h1v14.72h-1zM440 354.07h1v10.99h-1zM441 351.16h1v13.99h-1zM442 353.25h1v8.74h-1zM443 355.74h1v10.48h-1zM444 350.31h1v12.29h-1zM445 351.35h1v12.02h-1zM446 352.12h1v13.84h-1zM447 353.94h1v10.70h-1zM448 354.33h1v9.66h-1zM449 358.15h1v0.50h-1zM450 358.15h1v0.50h-1zM451 358.15h1v0.50h-1zM452 355.67h1v6.85h-1zM453 354.14h1v12.25h-1zM454 355.06h1v10.40h-1zM455 355.33h1v11.48h-1zM456 354.86h1v6.64h-1zM457 354.59h1v11.91h-1zM458 351.87h1v14.38h-1zM459 352.88h1v8.75h-1zM460 353.82h1v9.84h-1zM461 349.96h1v11.98h-1zM462 354.40h1v11.57h-1zM463 355.17h1v11.56h-1zM464 354.09h1v10.24h-1zM465 351.92h1v14.43h-1zM466 355.40h1v10.59h-1zM467 354.78h1v10.44h-1zM468 355.69h1v9.82h-1zM469 354.77h1v7.40h-1zM470 355.64h1v7.24h-1zM471 358.15h1v0.50h-1zM472 358.15h1v0.50h-1zM473 358.15h1v0.50h-1zM474 358.15h1v0.50h-1zM475 358.15h1v0.50h-1zM476 358.15h1v0.50h-1zM477 354.16h1v12.14h-1zM478 352.60h1v10.24h-1zM479 350.46h1v11.31h-1zM480 354.80h1v11.36h-1zM481 350.67h1v13.96h-1zM482 350.52h1v10.60h-1zM483 358.15h1v0.50h-1zM484 358.15h1v0.50h-1zM485 358.15h1v0.50h-1zM486 358.15h1v0.50h-1zM487 358.15h1v0.50h-1zM488 358.15h1v0.50h-1zM489 358.15h1v0.50h-1zM490 358.15h1v0.50h-1zM491 358.15h1v0.50h-1zM492 351.87h1v12.08h-1zM493 353.03h1v11.60h-1zM494 355.79h1v5.69h-1zM495 355.62h1v7.22h-1zM496 358.15h1v0.50h-1zM497 358.15h1v0.50h-1zM498 358.15h1v0.50h-1zM499 358.15h1v0.50h-1zM500 358.15h1v0.50h-1zM501 358.15h1v0.50h-1zM502 358.15h1v0.50h-1zM503 358.15h1v0.50h-1zM504 358.15h1v0.50h-1z"/></svg>
<div class="abs" style="left:179.70px;top:406.80px;width:408.40px;height:26.00px;background:#4a6f98;border-radius:3.5px 3.5px 0 0;box-shadow:inset 0 0 0 0.4px rgba(255,255,255,0.2)"></div>
<svg class="abs" style="left:183.2px;top:410px" width="15.5" height="15.5" viewBox="0 0 16 16"><rect x="0.3" y="0.3" width="15.4" height="15.4" rx="3.4" fill="#1e8ff0"/><path d="M8.2 0.3H12.3A3.4 3.4 0 0 1 15.7 3.7V12.3A3.4 3.4 0 0 1 12.3 15.7H7.6C8 12 7 10 6.8 8.6H8.8C8.4 5 8.3 2.5 8.2 0.3Z" fill="#e8eef4"/><path d="M3.5 10.5 Q8 13.5 12.5 10.5" stroke="#1a2a40" stroke-width="0.6" fill="none"/><rect x="4.5" y="4.5" width="0.7" height="1.6" fill="#1a2a40"/><rect x="10.8" y="4.5" width="0.7" height="1.6" fill="#1a2a40"/></svg>
<svg class="abs" style="left:204px;top:410px" width="15.5" height="15.5" viewBox="0 0 16 16"><rect x="0.3" y="0.3" width="15.4" height="15.4" rx="3.4" fill="#c9cdd6"/><rect x="3.0" y="3.0" width="2.6" height="2.6" rx="0.8" fill="#47c84f"/><rect x="6.7" y="3.0" width="2.6" height="2.6" rx="0.8" fill="#f5c020"/><rect x="10.4" y="3.0" width="2.6" height="2.6" rx="0.8" fill="#f58a20"/><rect x="3.0" y="6.7" width="2.6" height="2.6" rx="0.8" fill="#e83030"/><rect x="6.7" y="6.7" width="2.6" height="2.6" rx="0.8" fill="#a0a0b0"/><rect x="10.4" y="6.7" width="2.6" height="2.6" rx="0.8" fill="#f04070"/><rect x="3.0" y="10.4" width="2.6" height="2.6" rx="0.8" fill="#9a40e0"/><rect x="6.7" y="10.4" width="2.6" height="2.6" rx="0.8" fill="#2aa0f0"/><rect x="10.4" y="10.4" width="2.6" height="2.6" rx="0.8" fill="#30d0a0"/></svg>
<svg class="abs" style="left:224.3px;top:410px" width="15.5" height="15.5" viewBox="0 0 16 16"><rect x="0.3" y="0.3" width="15.4" height="15.4" rx="3.4" fill="#f2f4f6"/><circle cx="8" cy="8" r="6.3" fill="#2d8ef2"/><path d="M11.5 4.5L8.6 8.6L4.5 11.5L7.4 7.4Z" fill="#fff"/><path d="M11.5 4.5L8.6 8.6L7.4 7.4Z" fill="#f03030"/></svg>
<svg class="abs" style="left:244.5px;top:410px" width="15.5" height="15.5" viewBox="0 0 16 16"><rect x="0.3" y="0.3" width="15.4" height="15.4" rx="3.4" fill="#f4f4f4"/><circle cx="8" cy="8" r="6" fill="#dd4030"/><path d="M8 8 L2.8 5 A6 6 0 0 0 5 13.2Z" fill="#25a050"/><path d="M8 8 L5 13.2 A6 6 0 0 0 14 8 Z" fill="#f8c020"/><path d="M8 8 L14 8 A6 6 0 0 1 11 13.2Z" fill="#f8c020"/><circle cx="8" cy="8" r="2.7" fill="#fff"/><circle cx="8" cy="8" r="2.1" fill="#3a80f0"/></svg>
<svg class="abs" style="left:264.5px;top:409.5px" width="15.5" height="15.5" viewBox="0 0 16 16"><defs><radialGradient id="ffg" cx="0.4" cy="0.7" r="0.7"><stop offset="0" stop-color="#ffd040"/><stop offset="0.6" stop-color="#ff7a20"/><stop offset="1" stop-color="#e8303a"/></radialGradient></defs><circle cx="8" cy="8.8" r="7" fill="url(#ffg)"/><circle cx="8.8" cy="8.4" r="4.3" fill="#7040d8"/><path d="M3 4.5 Q5 0.5 10 1.2 Q8 2.5 9 4 Q5 3.5 3 7 Z" fill="#ffb030"/><path d="M13.5 2 L14.8 5.5 L12 4.5Z" fill="#ffc040"/></svg>
<svg class="abs" style="left:285.7px;top:410px" width="15.5" height="15.5" viewBox="0 0 16 16"><rect x="0.3" y="0.3" width="15.4" height="15.4" rx="3.4" fill="#f6f6f6"/><ellipse cx="8" cy="4.6" rx="1.9" ry="3.4" fill="#f5c030" opacity="0.85" transform="rotate(0 8 8)"/><ellipse cx="8" cy="4.6" rx="1.9" ry="3.4" fill="#f58a30" opacity="0.85" transform="rotate(45 8 8)"/><ellipse cx="8" cy="4.6" rx="1.9" ry="3.4" fill="#e84040" opacity="0.85" transform="rotate(90 8 8)"/><ellipse cx="8" cy="4.6" rx="1.9" ry="3.4" fill="#d040a0" opacity="0.85" transform="rotate(135 8 8)"/><ellipse cx="8" cy="4.6" rx="1.9" ry="3.4" fill="#8050d0" opacity="0.85" transform="rotate(180 8 8)"/><ellipse cx="8" cy="4.6" rx="1.9" ry="3.4" fill="#3090e0" opacity="0.85" transform="rotate(225 8 8)"/><ellipse cx="8" cy="4.6" rx="1.9" ry="3.4" fill="#30c0a0" opacity="0.85" transform="rotate(270 8 8)"/><ellipse cx="8" cy="4.6" rx="1.9" ry="3.4" fill="#80c840" opacity="0.85" transform="rotate(315 8 8)"/></svg>
<svg class="abs" style="left:305.8px;top:410px" width="15.5" height="15.5" viewBox="0 0 16 16"><rect x="0.3" y="0.3" width="15.4" height="15.4" rx="3.4" fill="#1c8cf0"/><rect x="3.5" y="3" width="9" height="4.5" fill="#f4f4f4"/><rect x="7.6" y="7.5" width="0.8" height="5" fill="#e8e8e8"/><path d="M5.5 13h5" stroke="#e8e8e8" stroke-width="0.7"/></svg>
<svg class="abs" style="left:326px;top:410px" width="15.5" height="15.5" viewBox="0 0 16 16"><rect x="0.3" y="0.3" width="15.4" height="15.4" rx="3.4" fill="#32c038"/><rect x="3.5" y="10" width="1.4" height="3" fill="#fff"/><rect x="6" y="7.5" width="1.4" height="5.5" fill="#fff"/><rect x="8.5" y="3.5" width="1.4" height="9.5" fill="#fff"/><rect x="11" y="5" width="1.4" height="8" fill="#fff"/></svg>
<svg class="abs" style="left:346.6px;top:410px" width="15.5" height="15.5" viewBox="0 0 16 16"><rect x="0.3" y="0.3" width="15.4" height="15.4" rx="3.4" fill="#f7a020"/><path d="M3.5 12.5L12.5 3.5" stroke="#fff5e0" stroke-width="1"/></svg>
<svg class="abs" style="left:366.7px;top:410px" width="15.5" height="15.5" viewBox="0 0 16 16"><rect x="0.3" y="0.3" width="15.4" height="15.4" rx="3.4" fill="#f4f4f8"/><path d="M8 1.8L9.9 6.1L14.5 6.4L11 9.4L12.1 14L8 11.5L3.9 14L5 9.4L1.5 6.4L6.1 6.1Z" fill="#6a30c8"/><circle cx="8" cy="8.3" r="1.6" fill="#f4f4f8"/></svg>
<svg class="abs" style="left:387px;top:410px" width="15.5" height="15.5" viewBox="0 0 16 16"><rect x="0.3" y="0.3" width="15.4" height="15.4" rx="3.4" fill="#2a2a2e"/><ellipse cx="6" cy="11" rx="4" ry="3" fill="#e88a20" transform="rotate(-40 6 11)"/><path d="M7 9 L13.5 1.5" stroke="#d0a060" stroke-width="1"/></svg>
<svg class="abs" style="left:405.8px;top:409.3px" width="19" height="17" viewBox="0 0 19 17"><rect x="0" y="0" width="19" height="17" fill="#1a1a1a"/><rect x="5.3" y="9.5" width="1.8" height="5" fill="#38c048"/><rect x="8.6" y="3" width="1.8" height="11.5" fill="#e84030"/><rect x="8.6" y="8.5" width="1.8" height="6" fill="#f0c020"/><rect x="8.6" y="11.5" width="1.8" height="3" fill="#38c048"/><rect x="11.9" y="10.5" width="1.8" height="4" fill="#38c048"/></svg>
<svg class="abs" style="left:427.7px;top:410px" width="15.5" height="15.5" viewBox="0 0 16 16"><rect x="0.3" y="0.3" width="15.4" height="15.4" rx="3.4" fill="#2a2a2e"/><circle cx="8" cy="7.5" r="5.8" fill="#a8b0b8"/><circle cx="8" cy="7.5" r="4.3" fill="#2a80e0"/><circle cx="8" cy="7.5" r="2.2" fill="#9ad0ff"/><path d="M10.5 10.5L13.5 13.5" stroke="#b0b8c0" stroke-width="1.6"/></svg>
<svg class="abs" style="left:446.6px;top:409px" width="20" height="17" viewBox="0 0 20 17"><path d="M2.2 12 V8.5 A7.8 7.8 0 0 1 17.8 8.5 V12" stroke="#1830e0" stroke-width="1.8" fill="none"/><rect x="0.8" y="9" width="3" height="6" rx="1.2" fill="#1830e0"/><rect x="16.2" y="9" width="3" height="6" rx="1.2" fill="#1830e0"/><ellipse cx="10" cy="11.3" rx="5.8" ry="4" fill="#f5a830"/><path d="M4.5 11.3h11" stroke="#e82828" stroke-width="1.6"/></svg>
<div class="abs" style="left:471.50px;top:410.00px;width:0.50px;height:16.00px;background:rgba(30,50,80,0.5);"></div>
<svg class="abs" style="left:477px;top:410px" width="15.5" height="15.5" viewBox="0 0 16 16"><circle cx="8" cy="8" r="7.6" fill="#b8bcc0"/><circle cx="8" cy="8" r="5.8" fill="#6a7a70"/><ellipse cx="8" cy="8.5" rx="4.2" ry="3.6" fill="#e8ecea"/><path d="M4 5.5 Q8 2.5 12 5.5" stroke="#80c030" stroke-width="1" fill="none"/></svg>
<svg class="abs" style="left:498.8px;top:410px" width="15.5" height="15.5" viewBox="0 0 16 16"><rect x="0.3" y="0.3" width="15.4" height="15.4" rx="3.4" fill="#f24058"/><path d="M6 11.5V4.5L11.5 3.5V10.5" stroke="#fff" stroke-width="0.9" fill="none"/><circle cx="5" cy="11.6" r="1.5" fill="#fff"/><circle cx="10.5" cy="10.6" r="1.5" fill="#fff"/></svg>
<svg class="abs" style="left:519px;top:410px" width="15.5" height="15.5" viewBox="0 0 16 16"><rect x="0.3" y="0.3" width="15.4" height="15.4" rx="3" fill="#e8ecf4"/><rect x="1.5" y="1.5" width="13" height="8" fill="#6a98d0"/><rect x="1.5" y="9.5" width="13" height="5" fill="#e0e4ea"/><rect x="8" y="8" width="7" height="5" rx="1" fill="#303438"/></svg>
<div class="abs" style="left:541.00px;top:410.00px;width:0.50px;height:16.00px;background:rgba(30,50,80,0.5);"></div>
<svg class="abs" style="left:547.8px;top:410px" width="15.5" height="15.5" viewBox="0 0 16 16"><path d="M0.8 4 Q0.8 2.5 2.3 2.5 H6 L7.2 3.8 H13.7 Q15.2 3.8 15.2 5.3 V13.5 Q15.2 15 13.7 15 H2.3 Q0.8 15 0.8 13.5Z" fill="#62baf0"/><rect x="0.8" y="5.5" width="14.4" height="9.5" rx="1.2" fill="#74c8f8"/><rect x="6" y="1.5" width="5" height="3" fill="#e8eef4"/></svg>
<svg class="abs" style="left:569.5px;top:410px" width="15.5" height="15.5" viewBox="0 0 16 16"><path d="M2.8 2.5H13.2L12 15H4Z" fill="#e4e8ec"/><ellipse cx="8" cy="2.6" rx="5.3" ry="1.3" fill="#cfd4d8"/><path d="M5 4.5V14M8 4.5V14.5M11 4.5V14" stroke="#c0c6cc" stroke-width="0.5"/></svg>
<div class="abs" style="left:190.50px;top:428.60px;width:1.00px;height:1.00px;background:#1a2a40;border-radius:50%"></div>
<div class="abs" style="left:251.50px;top:428.60px;width:1.00px;height:1.00px;background:#1a2a40;border-radius:50%"></div>
<div class="abs" style="left:505.50px;top:428.60px;width:1.00px;height:1.00px;background:#1a2a40;border-radius:50%"></div>
<div class="abs" style="left:526.50px;top:428.60px;width:1.00px;height:1.00px;background:#1a2a40;border-radius:50%"></div>
<div class="abs" style="left:302.40px;top:81.60px;width:162.80px;height:102.90px;background:#ffffff;border-radius:2px;box-shadow:0 0.5px 3px rgba(0,0,0,0.3)"></div>
<div class="abs" style="left:302.40px;top:81.60px;width:162.80px;height:8.20px;background:#eceef1;border-radius:2px 2px 0 0"></div>
<div class="abs" style="left:302.40px;top:89.80px;width:162.80px;height:0.30px;background:#e2e4e8;"></div>
<div class="t" style="left:302.40px;top:84.10px;font-size:3.95px;color:#383838;width:162.80px;text-align:center;font-weight:bold">Export Song to Disk</div>
<div class="t" style="left:302.40px;top:96.10px;font-size:3.5px;color:#a0a0a0;width:51.50px;text-align:right;">Save As:</div>
<div class="t" style="left:302.40px;top:105.70px;font-size:3.5px;color:#a0a0a0;width:51.50px;text-align:right;">Tags:</div>
<div class="t" style="left:302.40px;top:117.90px;font-size:3.5px;color:#a0a0a0;width:51.50px;text-align:right;">Where:</div>
<div class="abs" style="left:356.30px;top:92.60px;width:71.30px;height:7.10px;background:#ffffff;border-radius:1.4px;box-shadow:0 0 0 0.9px #a6c6f6"></div>
<div class="abs" style="left:358.70px;top:93.60px;width:64.60px;height:5.20px;background:#b8d6fc;"></div>
<div class="t" style="left:360.20px;top:94.70px;font-size:3.9px;color:#1a2a40;letter-spacing:-0.05px">11_Ruin Us_mixing - 10/29/21, 1:16</div>
<div class="abs" style="left:356.70px;top:103.40px;width:70.70px;height:5.90px;background:#fff;border-radius:0.8px;box-shadow:0 0 0 0.3px #e0e0e0"></div>
<div class="abs" style="left:356.70px;top:114.70px;width:61.70px;height:6.60px;background:#fff;border-radius:1px;box-shadow:0 0.3px 0.8px rgba(0,0,0,0.28)"></div>
<svg class="abs" style="left:359px;top:116px" width="5" height="5"><path d="M0.2 0.6 H1.8 L2.3 1.1 H4.3 V4.6 H0.2 Z" fill="#5fb0ee"/><rect x="0.2" y="1.6" width="4.1" height="3" fill="#74c2f6"/></svg>
<div class="t" style="left:365.00px;top:116.70px;font-size:3.9px;color:#202020;">Desktop</div>
<div class="abs" style="left:413.00px;top:115.70px;width:5.10px;height:5.50px;background:#2a80f4;border-radius:1.1px"></div>
<svg class="abs" style="left:413px;top:115.7px" width="5.1" height="5.5"><path d="M1.6 2.2 L2.55 1.2 L3.5 2.2 M1.6 3.3 L2.55 4.3 L3.5 3.3" stroke="#fff" stroke-width="0.45" fill="none"/></svg>
<div class="abs" style="left:421.20px;top:115.00px;width:6.00px;height:6.20px;background:#fff;border-radius:1.3px;box-shadow:0 0.3px 0.8px rgba(0,0,0,0.3)"></div>
<svg class="abs" style="left:421.2px;top:115px" width="6" height="6.2"><path d="M1.9 2.6 L3 3.7 L4.1 2.6" stroke="#555" stroke-width="0.5" fill="none"/></svg>
<div class="abs" style="left:302.40px;top:128.20px;width:162.80px;height:0.30px;background:#e6e6e6;"></div>
<div class="abs" style="left:325.30px;top:134.70px;width:4.20px;height:4.20px;background:#fff;border-radius:50%;box-shadow:0 0 0 0.35px #bcbcbc"></div>
<div class="t" style="left:331.30px;top:135.20px;font-size:3.9px;color:#303030;">AAC</div>
<div class="abs" style="left:354.30px;top:134.70px;width:4.20px;height:4.20px;background:#fff;border-radius:50%;box-shadow:0 0 0 0.35px #bcbcbc"></div>
<div class="t" style="left:360.30px;top:135.20px;font-size:3.9px;color:#303030;">MP3</div>
<div class="abs" style="left:383.40px;top:134.70px;width:4.20px;height:4.20px;background:#fff;border-radius:50%;box-shadow:0 0 0 0.35px #bcbcbc"></div>
<div class="t" style="left:389.40px;top:135.20px;font-size:3.9px;color:#303030;">AIFF</div>
<div class="abs" style="left:412.70px;top:134.70px;width:4.20px;height:4.20px;background:#2a80f4;border-radius:50%"></div>
<div class="abs" style="left:414.00px;top:136.00px;width:1.60px;height:1.60px;background:#fff;border-radius:50%"></div>
<div class="t" style="left:418.70px;top:135.20px;font-size:3.9px;color:#303030;">WAVE</div>
<div class="t" style="left:308.10px;top:144.10px;font-size:3.9px;color:#303030;">Quality:</div>
<div class="abs" style="left:324.60px;top:142.80px;width:86.20px;height:6.20px;background:#fff;border-radius:1px;box-shadow:0 0.3px 0.8px rgba(0,0,0,0.28)"></div>
<div class="t" style="left:327.00px;top:144.30px;font-size:4.1px;color:#202020;">Uncompressed 16-bit (CD Quality)</div>
<div class="abs" style="left:405.50px;top:143.60px;width:4.60px;height:4.70px;background:#2a80f4;border-radius:1px"></div>
<svg class="abs" style="left:405.5px;top:143.6px" width="4.6" height="4.7"><path d="M1.35 2 L2.3 1.05 L3.25 2 M1.35 2.75 L2.3 3.7 L3.25 2.75" stroke="#fff" stroke-width="0.45" fill="none"/></svg>
<div class="abs" style="left:325.00px;top:154.40px;width:4.00px;height:4.00px;background:#fff;border-radius:0.6px;box-shadow:0 0 0 0.35px #bcbcbc"></div>
<div class="t" style="left:330.80px;top:154.80px;font-size:4.1px;color:#303030;">Export cycle area, or length of selected regions (if Cycle is turned off).</div>
<div class="abs" style="left:302.40px;top:166.00px;width:162.80px;height:0.30px;background:#e6e6e6;"></div>
<div class="abs" style="left:413.80px;top:172.70px;width:21.70px;height:5.60px;background:#fff;border-radius:1.2px;box-shadow:0 0.3px 0.8px rgba(0,0,0,0.3)"></div>
<div class="t" style="left:413.80px;top:173.90px;font-size:4.0px;color:#303030;width:21.70px;text-align:center;">Cancel</div>
<div class="abs" style="left:437.80px;top:172.70px;width:21.50px;height:5.60px;background:#2a82f6;border-radius:1.2px"></div>
<div class="t" style="left:437.80px;top:173.90px;font-size:4.0px;color:#ffffff;width:21.50px;text-align:center;">Export</div>
</div></body></html>
